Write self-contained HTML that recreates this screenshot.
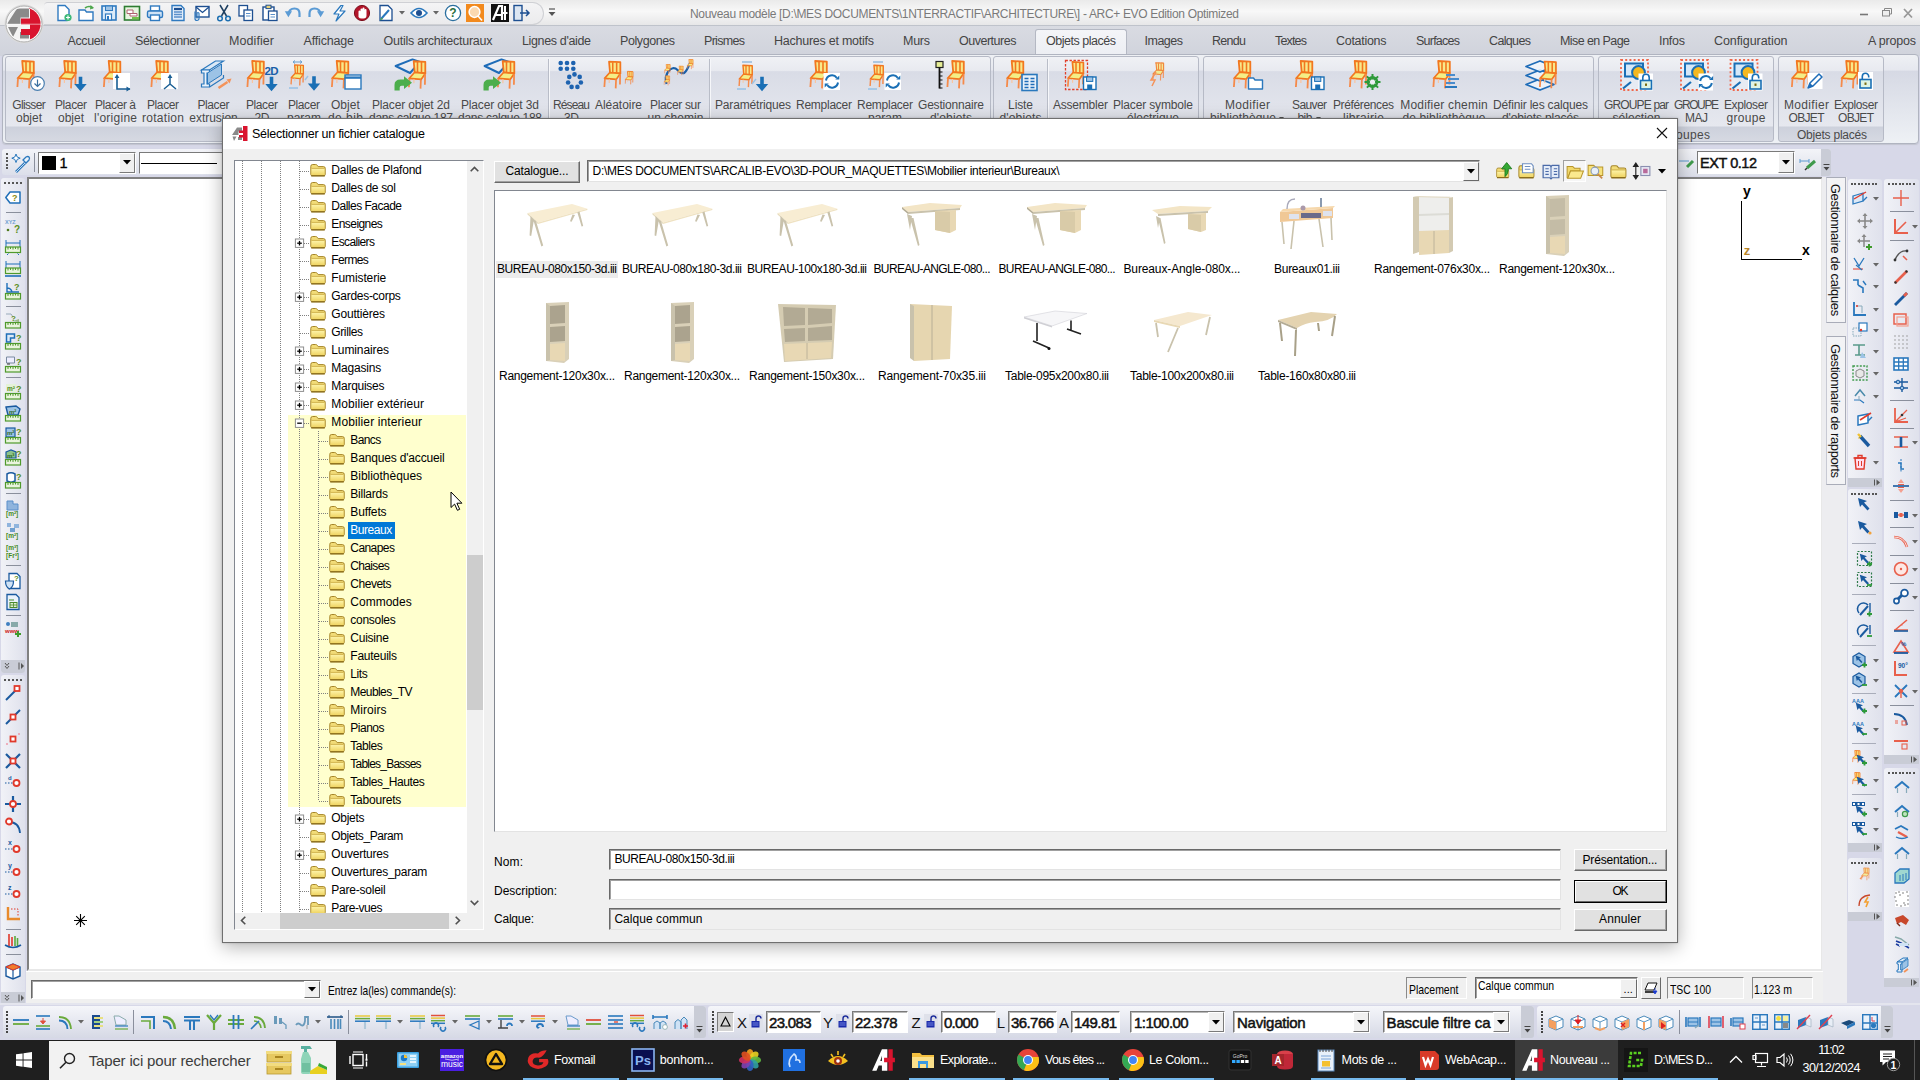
<!DOCTYPE html>
<html lang="fr"><head><meta charset="utf-8"><title>ARC+ EVO</title><style>
*{box-sizing:border-box;margin:0;padding:0}
html,body{width:1920px;height:1080px;overflow:hidden;background:#d7d8e8;font-family:"Liberation Sans",sans-serif;font-size:12px}
body{position:relative}
div,svg,span.t{position:absolute}
span.t{white-space:nowrap;display:block}
svg{overflow:visible}
.sunk{border:1px solid;border-color:#7a7a7a #fff #fff #7a7a7a;background:#fff}
.btn{background:#e1e1e1;border:1px solid #adadad}
</style></head><body><svg width="0" height="0" style="left:0;top:0"><defs>
<symbol id="chair" viewBox="0 0 20 29"><path d="M6.2 1 L17.8 1.6 L17.8 13 L7.2 12.2Z" fill="#f8e98a" stroke="#f2771f" stroke-width="1.8" stroke-linejoin="round"/><path d="M10 1.5V12M14 1.8V12.5" stroke="#f2771f" stroke-width="1.6"/><path d="M7 12.2 L17.8 13.2 L13.6 19.2 L1.6 18.2Z" fill="#f4ee86" stroke="#f2771f" stroke-width="1.7" stroke-linejoin="round"/><path d="M2 18.4 L1.4 27 M13.4 19.4 L13 28.4 M17.6 14 L17.4 24.5" stroke="#f58a4a" stroke-width="1.8" fill="none"/><path d="M6.4 19V23" stroke="#f9c4a0" stroke-width="1.2"/></symbol>
<linearGradient id="fg" x1="0" y1="0" x2="0" y2="1"><stop offset="0" stop-color="#fdf3a8"/><stop offset="1" stop-color="#f0d564"/></linearGradient>
<symbol id="fold" viewBox="0 0 16 14"><path d="M0.8 3.3 Q0.8 1.5 2.6 1.5 H5.6 Q6.8 1.5 7.4 2.5 L8.2 3.6 H13.4 Q15.2 3.6 15.2 5.2 V11.6 Q15.2 12.6 14 12.6 H2 Q0.8 12.6 0.8 11.6Z" fill="#f2dc78" stroke="#a58528" stroke-width="1"/><path d="M1.6 5.8 H14.4 V11.4 Q14.4 12 13.8 12 H2.2 Q1.6 12 1.6 11.4Z" fill="url(#fg)"/><path d="M1.6 5.4H14.4" stroke="#c9aa45" stroke-width="0.8"/><path d="M1.2 12.9 H14.8" stroke="#8a6c1a" stroke-width="1.3"/></symbol>
</defs></svg>
<div style="left:0.0px;top:0.0px;width:1920.0px;height:26.0px;background:linear-gradient(#eaeaea,#f8f8f8 45%,#e7e7e8);border-bottom:1px solid #bfc3cb"></div>
<div style="left:0.0px;top:26.0px;width:1920.0px;height:30.0px;background:linear-gradient(#d9dbe2,#d0d3dc)"></div>
<div style="left:44.0px;top:2.0px;width:500.0px;height:23.0px;background:linear-gradient(#f4f4f5,#ebebed);border:1px solid #cfd0d4;border-radius:4px 12px 12px 0;border-left:none"></div>
<svg style="left:55.0px;top:4.0px;" width="18" height="18" viewBox="0 0 18 18"><path d="M3 1.5h7l4 4v9q0 2-2 2h-9z" fill="#fff" stroke="#2f7ac0" stroke-width="1.4"/><circle cx="13" cy="13.5" r="3.6" fill="#3cb878"/><path d="M11 13.5h4M13 11.5v4" stroke="#fff" stroke-width="1.2"/></svg><svg style="left:77.0px;top:4.0px;" width="18" height="18" viewBox="0 0 18 18"><path d="M2 6h6l1.5 2H16v8.5H2z" fill="#fff" stroke="#2f7ac0" stroke-width="1.4"/><path d="M8 4q4-3 8 0" fill="none" stroke="#4ca64c" stroke-width="1.6"/><path d="M13.5 1l3.5 3l-4 1.5z" fill="#4ca64c"/></svg><svg style="left:100.0px;top:4.0px;" width="18" height="18" viewBox="0 0 18 18"><rect x="2" y="2" width="14" height="14" fill="#dcebf8" stroke="#2f7ac0" stroke-width="1.6"/><rect x="5.5" y="2" width="7" height="4.5" fill="#9fc4e6" stroke="#2f7ac0" stroke-width="1"/><rect x="5.5" y="10" width="6" height="6" fill="#fff" stroke="#2f7ac0" stroke-width="1.2"/><rect x="7" y="12" width="2" height="4" fill="#2f7ac0"/></svg><svg style="left:123.0px;top:4.0px;" width="18" height="18" viewBox="0 0 18 18"><rect x="1.5" y="2.5" width="15" height="13.5" fill="#e8f5e0" stroke="#2e7d32" stroke-width="1.6"/><path d="M4 6h6v3.5H4zM7 9.5h7V12H7z" fill="#fff" stroke="#b06070" stroke-width="1"/><rect x="9" y="13" width="7" height="2.4" fill="#6fc04a"/></svg><svg style="left:146.0px;top:4.0px;" width="18" height="18" viewBox="0 0 18 18"><rect x="4.5" y="2" width="9" height="5" fill="#fff" stroke="#2f7ac0" stroke-width="1.4"/><rect x="1.5" y="7" width="15" height="6.5" rx="1.5" fill="#cfe2f5" stroke="#2f7ac0" stroke-width="1.4"/><rect x="4.5" y="11" width="9" height="5.5" fill="#fff" stroke="#2f7ac0" stroke-width="1.4"/></svg><svg style="left:169.0px;top:4.0px;" width="18" height="18" viewBox="0 0 18 18"><path d="M3 1.5h9l3 3v12H3z" fill="#e3eefa" stroke="#2f7ac0" stroke-width="1.4"/><path d="M5 5h8" stroke="#1d4f91" stroke-width="2.2"/><path d="M5 8h8M5 10.5h8M5 13h8" stroke="#5a8fca" stroke-width="1.3"/></svg><svg style="left:192.0px;top:4.0px;" width="18" height="18" viewBox="0 0 18 18"><rect x="4" y="2.5" width="13" height="10.5" fill="#fff" stroke="#1d4f91" stroke-width="1.4"/><path d="M4 3l6.5 5.5L17 3" fill="none" stroke="#1d4f91" stroke-width="1.3"/><path d="M3 7.5v7a2 2 0 0 0 4 0V9.5a1 1 0 0 0-2 0v5" fill="none" stroke="#2f7ac0" stroke-width="1.2"/></svg><svg style="left:215.0px;top:4.0px;" width="18" height="18" viewBox="0 0 18 18"><path d="M5 1l6.5 11M13 1L6.5 12" stroke="#1d3f61" stroke-width="1.5"/><circle cx="5" cy="14.5" r="2.3" fill="none" stroke="#1d6fb1" stroke-width="1.5"/><circle cx="13" cy="14.5" r="2.3" fill="none" stroke="#1d6fb1" stroke-width="1.5"/></svg><svg style="left:237.0px;top:4.0px;" width="18" height="18" viewBox="0 0 18 18"><rect x="2" y="1.5" width="8.5" height="10.5" fill="#fff" stroke="#1d4f91" stroke-width="1.3"/><rect x="7" y="6" width="8.5" height="10.5" fill="#fff" stroke="#1d4f91" stroke-width="1.3"/><path d="M9 9.5h4.5M9 12h4.5" stroke="#5a8fca" stroke-width="1.1"/></svg><svg style="left:260.5px;top:4.0px;" width="18" height="18" viewBox="0 0 18 18"><rect x="2" y="3" width="11" height="13" fill="#fff" stroke="#1d4f91" stroke-width="1.4"/><rect x="5" y="1.2" width="5" height="3.4" fill="#e9d27a" stroke="#1d4f91" stroke-width="1"/><rect x="7.5" y="7" width="8.5" height="9.5" fill="#fff" stroke="#1d4f91" stroke-width="1.3"/><path d="M9.5 10.5h4.5M9.5 13h4.5" stroke="#5a8fca" stroke-width="1.1"/></svg><svg style="left:283.5px;top:4.0px;" width="18" height="18" viewBox="0 0 18 18"><path d="M4.5 10q0.5-5.5 6-5.5q5 0 5 5v3.5" fill="none" stroke="#5b9bd5" stroke-width="2.2"/><path d="M0.8 7.2l3.6 6l3.6-6z" fill="#5b9bd5"/></svg><svg style="left:306.5px;top:4.0px;" width="18" height="18" viewBox="0 0 18 18"><path d="M13.5 10q-0.5-5.5-6-5.5q-5 0-5 5v3.5" fill="none" stroke="#5b9bd5" stroke-width="2.2"/><path d="M17.2 7.2l-3.6 6l-3.6-6z" fill="#5b9bd5"/></svg><svg style="left:330.0px;top:4.0px;" width="18" height="18" viewBox="0 0 18 18"><path d="M11 1.5L4 10h5l-3 7l9-10h-5l3-5.5z" fill="#fff" stroke="#2a78bd" stroke-width="1.2" stroke-linejoin="round"/></svg><svg style="left:353.0px;top:4.0px;" width="18" height="18" viewBox="0 0 18 18"><circle cx="9" cy="9" r="7.6" fill="#b3152a" stroke="#7d0e1c" stroke-width="1"/><path d="M5.5 13V7.5a1 1 0 0 1 2 0V5.5a1 1 0 0 1 2 0v-1a1 1 0 0 1 2 0V6a1 1 0 0 1 2 0v5.5q0 3-3 3h-2q-2 0-3-1.5z" fill="#fff"/></svg><svg style="left:377.0px;top:4.0px;" width="18" height="18" viewBox="0 0 18 18"><path d="M3 1.5h8l4 4V16.5H3z" fill="#fff" stroke="#1d4f91" stroke-width="1.3"/><path d="M4 15l8-9" stroke="#2a78bd" stroke-width="2"/><path d="M3 16.5l3-1.5l-1.5-1.5z" fill="#4ca64c"/></svg><svg style="left:410.0px;top:4.0px;" width="18" height="18" viewBox="0 0 18 18"><path d="M1 9q8-9 16 0q-8 9-16 0z" fill="#fff" stroke="#2a78bd" stroke-width="1.6"/><circle cx="9" cy="9" r="3" fill="#1d4f91"/></svg><svg style="left:443.5px;top:4.0px;" width="18" height="18" viewBox="0 0 18 18"><circle cx="9" cy="9" r="7.6" fill="#fff" stroke="#2a6f9f" stroke-width="1.3"/><text x="9" y="13.4" text-anchor="middle" font-family="Liberation Sans,sans-serif" font-size="12" font-weight="bold" fill="#2a6f3f">?</text></svg><svg style="left:466.0px;top:4.0px;" width="18" height="18" viewBox="0 0 18 18"><rect x="0" y="0" width="18" height="18" fill="#f28a1e"/><circle cx="8.5" cy="8" r="5.4" fill="#fbd9b0" stroke="#fff" stroke-width="1.5"/><path d="M12 12l4 4.5" stroke="#fff" stroke-width="1.6"/></svg><svg style="left:491.0px;top:4.0px;" width="18" height="18" viewBox="0 0 18 18"><rect x="0" y="0" width="18" height="18" fill="#111"/><path d="M2 16L8 2h3v14M5 11h6" fill="none" stroke="#fff" stroke-width="2.2"/><path d="M14 2v14M11.5 9h5" stroke="#fff" stroke-width="2"/></svg><svg style="left:512.0px;top:4.0px;" width="18" height="18" viewBox="0 0 18 18"><rect x="2" y="1.5" width="8" height="15" fill="#dce6f2" stroke="#1d4f91" stroke-width="1.4"/><path d="M8 9h9m-3-3l3 3l-3 3" fill="none" stroke="#1d4f91" stroke-width="1.5"/></svg><svg style="left:399.0px;top:11.0px;" width="6" height="4" viewBox="0 0 6 4"><path d="M0 0h6l-3 3.5z" fill="#666"/></svg><svg style="left:433.0px;top:11.0px;" width="6" height="4" viewBox="0 0 6 4"><path d="M0 0h6l-3 3.5z" fill="#666"/></svg><svg style="left:548.0px;top:8.0px;" width="8" height="9" viewBox="0 0 8 9"><path d="M1 1h6" stroke="#555" stroke-width="1.2"/><path d="M0.5 4h7l-3.5 4z" fill="#555"/></svg>
<svg style="left:2.5px;top:2.5px;" width="42" height="42" viewBox="0 0 42 42"><defs><clipPath id="lc"><circle cx="21" cy="21" r="16.6"/></clipPath></defs><circle cx="21" cy="21" r="19.5" fill="#dcdcdc"/><circle cx="21" cy="21" r="18" fill="#fafafa" stroke="#b0b0b0" stroke-width="1"/><g clip-path="url(#lc)"><rect x="0" y="0" width="42" height="42" fill="#f4f4f4"/><path d="M4 21L14 5.5h12v9h-8.5V21z" fill="#8a8a8a"/><path d="M5 24h10l-5 10z" fill="#8a8a8a"/><rect x="17" y="29" width="9" height="6.5" fill="#8a8a8a"/><path d="M27 2h14v38H27v-8h-9v-6h9v-4.5h-9v-6h9z" fill="#d9142e"/><path d="M27 5.5h-1" stroke="#d9142e"/></g><path d="M3 21.2h36" stroke="#fff" stroke-width="0.8" opacity=".7"/></svg>
<span class="t" style="top:5.5px;font-size:12px;line-height:16px;color:#7a7a7a;letter-spacing:-0.331px;left:690.0px;">Nouveau modèle [D:\MES DOCUMENTS\1NTERRACTIF\ARCHITECTURE\] - ARC+ EVO Edition Optimized</span>
<svg style="left:1856.0px;top:4.0px;" width="60" height="18" viewBox="0 0 60 18"><path d="M4 10.5h8" stroke="#777" stroke-width="1.6"/><rect x="26.5" y="6.5" width="7" height="5.5" fill="#eee" stroke="#888" stroke-width="1"/><path d="M28.5 6.5v-2h7v5.5h-2" fill="none" stroke="#888" stroke-width="1"/><path d="M48 5l8 8.5M56 5l-8 8.5" stroke="#999" stroke-width="1.8"/></svg>
<div style="left:1035.0px;top:29.0px;width:92.0px;height:27.0px;background:linear-gradient(#f4f5f8,#eceef3);border:1px solid #b4b8c3;border-bottom:none;border-radius:3px 3px 0 0"></div>
<span class="t" style="top:33.0px;font-size:12.5px;line-height:16.5px;color:#444;letter-spacing:-0.383px;left:67.5px;">Accueil</span>
<span class="t" style="top:33.0px;font-size:12.5px;line-height:16.5px;color:#444;letter-spacing:-0.409px;left:135.0px;">Sélectionner</span>
<span class="t" style="top:33.0px;font-size:12.5px;line-height:16.5px;color:#444;letter-spacing:0.076px;left:229.0px;">Modifier</span>
<span class="t" style="top:33.0px;font-size:12.5px;line-height:16.5px;color:#444;letter-spacing:-0.176px;left:303.5px;">Affichage</span>
<span class="t" style="top:33.0px;font-size:12.5px;line-height:16.5px;color:#444;letter-spacing:-0.247px;left:383.5px;">Outils architecturaux</span>
<span class="t" style="top:33.0px;font-size:12.5px;line-height:16.5px;color:#444;letter-spacing:-0.357px;left:522.0px;">Lignes d'aide</span>
<span class="t" style="top:33.0px;font-size:12.5px;line-height:16.5px;color:#444;letter-spacing:-0.422px;left:620.0px;">Polygones</span>
<span class="t" style="top:33.0px;font-size:12.5px;line-height:16.5px;color:#444;letter-spacing:-0.693px;left:704.0px;">Prismes</span>
<span class="t" style="top:33.0px;font-size:12.5px;line-height:16.5px;color:#444;letter-spacing:-0.248px;left:774.0px;">Hachures et motifs</span>
<span class="t" style="top:33.0px;font-size:12.5px;line-height:16.5px;color:#444;letter-spacing:-0.260px;left:903.0px;">Murs</span>
<span class="t" style="top:33.0px;font-size:12.5px;line-height:16.5px;color:#444;letter-spacing:-0.483px;left:959.0px;">Ouvertures</span>
<span class="t" style="top:33.0px;font-size:12.5px;line-height:16.5px;color:#444;letter-spacing:-0.478px;left:1046.0px;">Objets placés</span>
<span class="t" style="top:33.0px;font-size:12.5px;line-height:16.5px;color:#444;letter-spacing:-0.500px;left:1144.5px;">Images</span>
<span class="t" style="top:33.0px;font-size:12.5px;line-height:16.5px;color:#444;letter-spacing:-0.711px;left:1212.0px;">Rendu</span>
<span class="t" style="top:33.0px;font-size:12.5px;line-height:16.5px;color:#444;letter-spacing:-0.828px;left:1275.0px;">Textes</span>
<span class="t" style="top:33.0px;font-size:12.5px;line-height:16.5px;color:#444;letter-spacing:-0.289px;left:1336.0px;">Cotations</span>
<span class="t" style="top:33.0px;font-size:12.5px;line-height:16.5px;color:#444;letter-spacing:-0.763px;left:1416.0px;">Surfaces</span>
<span class="t" style="top:33.0px;font-size:12.5px;line-height:16.5px;color:#444;letter-spacing:-0.646px;left:1489.0px;">Calques</span>
<span class="t" style="top:33.0px;font-size:12.5px;line-height:16.5px;color:#444;letter-spacing:-0.585px;left:1560.0px;">Mise en Page</span>
<span class="t" style="top:33.0px;font-size:12.5px;line-height:16.5px;color:#444;letter-spacing:-0.277px;left:1659.0px;">Infos</span>
<span class="t" style="top:33.0px;font-size:12.5px;line-height:16.5px;color:#444;letter-spacing:-0.072px;left:1714.0px;">Configuration</span>
<span class="t" style="top:33.0px;font-size:12.5px;line-height:16.5px;color:#444;letter-spacing:-0.192px;left:1868.0px;">A propos</span>
<div style="left:2.0px;top:54.0px;width:1916.5px;height:89.5px;background:linear-gradient(#eef0f4 0,#e6e8ef 17%,#d6d9e4 18.5%,#eef1f5 100%);border:1px solid #b0b4c0;border-radius:4px;box-shadow:0 1px 1px #c2c5d0"></div>
<div style="left:5.0px;top:56.0px;width:986.0px;height:86.0px;background:linear-gradient(#f0f1f5 0,#e8eaf0 16%,#d9dce6 17.5%,#e6e8ef 82%,#cdd1dc 83.5%,#d6d9e2 100%);border:1px solid #b6bac6;border-radius:3px"></div>
<div style="left:993.0px;top:56.0px;width:206.0px;height:86.0px;background:linear-gradient(#f0f1f5 0,#e8eaf0 16%,#d9dce6 17.5%,#e6e8ef 82%,#cdd1dc 83.5%,#d6d9e2 100%);border:1px solid #b6bac6;border-radius:3px"></div>
<div style="left:1203.0px;top:56.0px;width:391.0px;height:86.0px;background:linear-gradient(#f0f1f5 0,#e8eaf0 16%,#d9dce6 17.5%,#e6e8ef 82%,#cdd1dc 83.5%,#d6d9e2 100%);border:1px solid #b6bac6;border-radius:3px"></div>
<div style="left:1598.0px;top:56.0px;width:176.0px;height:86.0px;background:linear-gradient(#f0f1f5 0,#e8eaf0 16%,#d9dce6 17.5%,#e6e8ef 82%,#cdd1dc 83.5%,#d6d9e2 100%);border:1px solid #b6bac6;border-radius:3px"></div>
<div style="left:1778.0px;top:56.0px;width:106.0px;height:86.0px;background:linear-gradient(#f0f1f5 0,#e8eaf0 16%,#d9dce6 17.5%,#e6e8ef 82%,#cdd1dc 83.5%,#d6d9e2 100%);border:1px solid #b6bac6;border-radius:3px"></div>
<span class="t" style="top:126.5px;font-size:12px;line-height:16px;color:#4a4a4a;letter-spacing:0.328px;left:1486.2px;width:400px;text-align:center;"><span>Groupes</span></span>
<span class="t" style="top:126.5px;font-size:12px;line-height:16px;color:#4a4a4a;letter-spacing:-0.225px;left:1631.9px;width:400px;text-align:center;"><span>Objets placés</span></span>
<div style="left:547.5px;top:59.0px;width:1.0px;height:64.0px;background:#b9bdc8"></div>
<div style="left:548.5px;top:59.0px;width:1.0px;height:64.0px;background:#f6f7fa"></div>
<div style="left:708.5px;top:59.0px;width:1.0px;height:64.0px;background:#b9bdc8"></div>
<div style="left:709.5px;top:59.0px;width:1.0px;height:64.0px;background:#f6f7fa"></div>
<div style="left:1047.0px;top:59.0px;width:1.0px;height:64.0px;background:#b9bdc8"></div>
<div style="left:1048.0px;top:59.0px;width:1.0px;height:64.0px;background:#f6f7fa"></div>
<svg style="left:0;top:0" width="1920" height="100" viewBox="0 0 1920 100"><use href="#chair" x="16.0" y="60.0" width="20.0" height="29.0"/><circle cx="37.5" cy="83.5" r="6.8" fill="#fff" stroke="#4a7fb0" stroke-width="1.2"/><path d="M37.5 79.5v7m-3-3l3 3l3-3" stroke="#3a6f9f" stroke-width="1.2" fill="none"/><use href="#chair" x="58.0" y="60.0" width="20.0" height="29.0"/><path d="M78.7 76.8 v7.2 h-4.4 l6.2 7.2 l6.2 -7.2 h-4.4 v-7.2z" fill="#1a6fb5"/><use href="#chair" x="102.5" y="60.0" width="20.0" height="29.0"/><rect x="113.0" y="73" width="17" height="16" fill="#fff"/><path d="M117.0 76v13h13" fill="none" stroke="#1a5f95" stroke-width="1.6"/><path d="M114.6 78l2.4-4l2.4 4zM126.5 86.6l4 2.4l-4 2.4z" fill="#1a5f95"/><use href="#chair" x="150.0" y="60.0" width="20.0" height="29.0"/><rect x="161.0" y="73" width="17" height="16" fill="#fff"/><path d="M170.0 76v8l-6 5m6-5l6 5" fill="none" stroke="#1a5f95" stroke-width="1.5"/><path d="M167.6 78l2.4-4l2.4 4z" fill="#1a5f95"/><path d="M201.5 70 l14 -9 h8 l-14 9z" fill="#dbe9f6" stroke="#2a78bd" stroke-width="1.2"/><path d="M201.5 70 h8 v3 h-2.5 v11 h2.5 v3 h-8 v-3 h2.5 v-11 h-2.5z" fill="#eaf2fb" stroke="#2a78bd" stroke-width="1.2"/><path d="M207.5 73 l14 -9 v11 l-14 9z" fill="#9cc3e6" stroke="#2a78bd" stroke-width="1"/><path d="M209.5 87 l14 -9 v-3" fill="none" stroke="#2a78bd" stroke-width="1.2"/><path d="M218.5 88 l9 -6" stroke="#f4935a" stroke-width="2.4"/><path d="M226.5 79.5 l5 -1 l-2 5z" fill="#f4935a"/><use href="#chair" x="246.0" y="60.0" width="20.0" height="29.0"/><text x="264.5" y="74.5" font-family="Liberation Sans,sans-serif" font-weight="bold" font-size="11.5" letter-spacing="-0.6" fill="#1a5fa8">2D</text><path d="M269.7 76.8 v7.2 h-4.4 l6.2 7.2 l6.2 -7.2 h-4.4 v-7.2z" fill="#1a6fb5"/><use href="#chair" x="290.0" y="64" width="15" height="22"/><path d="M293.0 62h9m-9 0l2-1.5m-2 1.5l2 1.5m7-1.5l-2-1.5m2 1.5l-2 1.5" stroke="#6aa0d0" stroke-width="1" fill="none"/><path d="M289.0 88h9" stroke="#9cc3e6" stroke-width="1.6"/><path d="M305.0 80l3-4" stroke="#9cc3e6" stroke-width="1.4"/><path d="M312.2 76.3 v7.2 h-4.4 l6.2 7.2 l6.2 -7.2 h-4.4 v-7.2z" fill="#1a6fb5"/><use href="#chair" x="330.5" y="60.0" width="20.0" height="29.0"/><rect x="345.0" y="75" width="16" height="14" fill="#fff" stroke="#2a78bd" stroke-width="1.4"/><path d="M345.0 77.6h16" stroke="#2a78bd" stroke-width="2.4"/><path d="M395.6 66 L412.5 59.4 L420.0 62 L410.0 73z" fill="none" stroke="#1e6cb8" stroke-width="2" stroke-linejoin="round"/><use href="#chair" x="407.5" y="60" width="20" height="29.5"/><path d="M394.5 90.5 v-5.5 q0 -5.5 6 -5.5 h3.5 v-3.2 l8 6.4 l-8 6.4 v-3.4 h-2.5 q-1.8 0 -1.8 1.8 v3z" fill="#4cae4c"/><path d="M484.6 66 L501.5 59.4 L509.0 62 L499.0 73z" fill="none" stroke="#1e6cb8" stroke-width="2" stroke-linejoin="round"/><use href="#chair" x="496.5" y="60" width="20" height="29.5"/><path d="M483.5 90.5 v-5.5 q0 -5.5 6 -5.5 h3.5 v-3.2 l8 6.4 l-8 6.4 v-3.4 h-2.5 q-1.8 0 -1.8 1.8 v3z" fill="#4cae4c"/><circle cx="560.7" cy="63.0" r="2.3" fill="#1e63b0"/><circle cx="567.0" cy="63.0" r="2.3" fill="#1e63b0"/><circle cx="573.3" cy="63.0" r="2.3" fill="#1e63b0"/><circle cx="560.7" cy="68.8" r="2.3" fill="#1e63b0"/><circle cx="567.0" cy="68.8" r="2.3" fill="#1e63b0"/><circle cx="573.3" cy="68.8" r="2.3" fill="#1e63b0"/><circle cx="574.5" cy="74.4" r="2.3" fill="#1e63b0"/><circle cx="579.7" cy="76.9" r="2.3" fill="#1e63b0"/><circle cx="580.9" cy="82.5" r="2.3" fill="#1e63b0"/><circle cx="577.4" cy="86.9" r="2.3" fill="#1e63b0"/><circle cx="571.6" cy="86.9" r="2.3" fill="#1e63b0"/><circle cx="568.1" cy="82.5" r="2.3" fill="#1e63b0"/><circle cx="569.3" cy="76.9" r="2.3" fill="#1e63b0"/><use href="#chair" x="603.0" y="60.3" width="19.5" height="29"/><use href="#chair" x="624.5" y="69" width="9.5" height="17.5"/><path d="M666.5 84 C663.5 74 671.5 64 677.5 70 S685.5 74 690.5 62" fill="none" stroke="#1a5fa8" stroke-width="2.2"/><use href="#chair" x="663.5" y="74" width="7" height="13"/><use href="#chair" x="664.0" y="64" width="7" height="10"/><use href="#chair" x="677.0" y="65.5" width="7" height="10"/><use href="#chair" x="686.5" y="59" width="7.5" height="10.5"/><use href="#chair" x="738.0" y="64" width="16" height="24"/><path d="M742.0 62h10" stroke="#6aa0d0" stroke-width="1"/><path d="M737.0 89h9" stroke="#9cc3e6" stroke-width="1.6"/><path d="M752.0 84l4-5" stroke="#9cc3e6" stroke-width="1.4"/><path d="M760.2 76.8 v7.2 h-4.4 l6.2 7.2 l6.2 -7.2 h-4.4 v-7.2z" fill="#1a6fb5"/><use href="#chair" x="809.0" y="60.0" width="20.0" height="29.0"/><rect x="823.5" y="73" width="16.5" height="17" fill="#fff"/><path d="M826.0 80.5 A6 6 0 0 1 836.8 77.9" fill="none" stroke="#1a6fb5" stroke-width="2"/><path d="M838.0 82.5 A6 6 0 0 1 827.2 85.1" fill="none" stroke="#1a6fb5" stroke-width="2"/><path d="M835.3 79.4 l4 0 l0 -4z" fill="#1a6fb5"/><path d="M828.7 83.6 l-4 0 l0 4z" fill="#1a6fb5"/><use href="#chair" x="869.0" y="64" width="16" height="24"/><path d="M873.0 62h10" stroke="#6aa0d0" stroke-width="1"/><path d="M868.0 89h9" stroke="#9cc3e6" stroke-width="1.6"/><rect x="884.5" y="73" width="16.5" height="17" fill="#fff"/><path d="M887.0 80.5 A6 6 0 0 1 897.8 77.9" fill="none" stroke="#1a6fb5" stroke-width="2"/><path d="M899.0 82.5 A6 6 0 0 1 888.2 85.1" fill="none" stroke="#1a6fb5" stroke-width="2"/><path d="M896.3 79.4 l4 0 l0 -4z" fill="#1a6fb5"/><path d="M889.7 83.6 l-4 0 l0 4z" fill="#1a6fb5"/><rect x="936.0" y="61.5" width="7" height="6" fill="#e6ee96" stroke="#222" stroke-width="1.2"/><path d="M939.5 67.5v21" stroke="#111" stroke-width="1.8"/><path d="M939.5 72h3m-3 4h3m-3 4h3m-3 4h3m-3 4h3" stroke="#111" stroke-width="1.2"/><use href="#chair" x="946.0" y="60.0" width="20.0" height="29.0"/><use href="#chair" x="1005.5" y="60.0" width="20.0" height="29.0"/><rect x="1022.0" y="74.5" width="15" height="16" fill="#e8f1fa" stroke="#2a78bd" stroke-width="1.6"/><path d="M1024.5 78.5h4m2 0h4m-10 3h4m2 0h4m-10 3h4m2 0h4m-10 3h4m2 0h4" stroke="#1e6cb8" stroke-width="1.6"/><rect x="1065.5" y="60.5" width="22" height="29" fill="none" stroke="#e0402c" stroke-width="1.3" stroke-dasharray="2.4 1.6"/><use href="#chair" x="1066.5" y="61.0" width="19.0" height="27.5"/><rect x="1083.5" y="77.0" width="12.5" height="12.5" fill="#fff" stroke="#1a6fb5" stroke-width="1.4"/><rect x="1086.6" y="77.0" width="6.2" height="4.4" fill="#9fc4e6" stroke="#1a6fb5" stroke-width="1"/><rect x="1087.2" y="84.5" width="5.0" height="5.0" fill="#1a6fb5"/><use href="#chair" x="1152.0" y="61" width="13" height="21" opacity=".85"/><path d="M1156.0 72l-5 8h4l-3 6" fill="none" stroke="#f4935a" stroke-width="1.5"/><path d="M1155.0 63h8" stroke="#f4935a" stroke-width="1" stroke-dasharray="1.5 1.5"/><use href="#chair" x="1232.5" y="60.0" width="20.0" height="29.0"/><path d="M1248.5 78h5l1.5 2h7.5v9h-14z" fill="#fff" stroke="#2a78bd" stroke-width="1.4" stroke-linejoin="round"/><use href="#chair" x="1294.5" y="60.0" width="20.0" height="29.0"/><rect x="1311.5" y="77.0" width="12.5" height="12.5" fill="#fff" stroke="#1a6fb5" stroke-width="1.4"/><rect x="1314.6" y="77.0" width="6.2" height="4.4" fill="#9fc4e6" stroke="#1a6fb5" stroke-width="1"/><rect x="1315.2" y="84.5" width="5.0" height="5.0" fill="#1a6fb5"/><use href="#chair" x="1348.5" y="60.0" width="20.0" height="29.0"/><circle cx="1372.5" cy="82" r="4.6" fill="none" stroke="#2e9a3a" stroke-width="2.6"/><path d="M1372.5 74v16M1364.5 82h16M1366.9 76.4l11.2 11.2M1366.9 87.6l11.2-11.2" stroke="#2e9a3a" stroke-width="2"/><circle cx="1372.5" cy="82" r="2.6" fill="#eceef3"/><use href="#chair" x="1432.0" y="60.0" width="20.0" height="29.0"/><path d="M1446.0 75h9M1448.0 79h11M1446.0 83h9" stroke="#4a8ccc" stroke-width="1.8"/><path d="M1445.0 87h12" stroke="#2a78bd" stroke-width="2"/><path d="M1526.0 84.5 l14 -5.5 l14 5.5 l-14 5.5z" fill="#eef4fb" fill-opacity=".85" stroke="#1e6cb8" stroke-width="1.8" stroke-linejoin="round"/><path d="M1526.0 75.5 l14 -5.5 l14 5.5 l-14 5.5z" fill="#eef4fb" fill-opacity=".85" stroke="#1e6cb8" stroke-width="1.8" stroke-linejoin="round"/><path d="M1526.0 66.5 l14 -5.5 l14 5.5 l-14 5.5z" fill="#eef4fb" fill-opacity=".85" stroke="#1e6cb8" stroke-width="1.8" stroke-linejoin="round"/><use href="#chair" x="1538.5" y="60.5" width="19.6" height="28.4"/><rect x="1621.0" y="60" width="27" height="30" fill="#eef3fa" fill-opacity=".6" stroke="#f0684c" stroke-width="1.8" stroke-dasharray="2 2.2"/><rect x="1625.0" y="63.5" width="18" height="13" fill="#d6e8f8" stroke="#1a6fb5" stroke-width="2"/><circle cx="1638.5" cy="72.5" r="6.4" fill="#f5b820" stroke="#1a6fb5" stroke-width="2"/><path d="M1623.0 88.5l8-6.5" stroke="#1a6fb5" stroke-width="2.2"/><rect x="1638.5" y="73.5" width="14.5" height="17" fill="#fff"/><path d="M1642.8 80.5 v-3 a3.2 3.2 0 0 1 6.4 0 v3" fill="none" stroke="#1a6fb5" stroke-width="1.6"/><rect x="1640.5" y="80.5" width="11" height="8.5" fill="#dff4e4" stroke="#1a6fb5" stroke-width="1.6"/><rect x="1645.0" y="83.5" width="2" height="2.4" fill="#7a6a10"/><rect x="1681.0" y="60" width="27" height="30" fill="#eef3fa" fill-opacity=".6" stroke="#f0684c" stroke-width="1.8" stroke-dasharray="2 2.2"/><rect x="1685.0" y="63.5" width="18" height="13" fill="#d6e8f8" stroke="#1a6fb5" stroke-width="2"/><circle cx="1698.5" cy="72.5" r="6.4" fill="#f5b820" stroke="#1a6fb5" stroke-width="2"/><path d="M1683.0 88.5l8-6.5" stroke="#1a6fb5" stroke-width="2.2"/><rect x="1698.5" y="73.5" width="14.5" height="17" fill="#fff"/><path d="M1700.2 81.0 A5.8 5.8 0 0 1 1710.6 78.5" fill="none" stroke="#1a6fb5" stroke-width="2"/><path d="M1711.8 83.0 A5.8 5.8 0 0 1 1701.4 85.5" fill="none" stroke="#1a6fb5" stroke-width="2"/><path d="M1709.1 80.0 l4 0 l0 -4z" fill="#1a6fb5"/><path d="M1702.9 84.0 l-4 0 l0 4z" fill="#1a6fb5"/><rect x="1730.5" y="60" width="27" height="30" fill="#eef3fa" fill-opacity=".6" stroke="#f0684c" stroke-width="1.8" stroke-dasharray="2 2.2"/><rect x="1734.5" y="63.5" width="18" height="13" fill="#d6e8f8" stroke="#1a6fb5" stroke-width="2"/><circle cx="1748.0" cy="72.5" r="6.4" fill="#f5b820" stroke="#1a6fb5" stroke-width="2"/><path d="M1732.5 88.5l8-6.5" stroke="#1a6fb5" stroke-width="2.2"/><rect x="1748.0" y="73.5" width="14.5" height="17" fill="#fff"/><path d="M1752.3 80.5 v-3 a3.2 3.2 0 0 1 6.4 0 v1" fill="none" stroke="#1a6fb5" stroke-width="1.6"/><rect x="1750.0" y="80.5" width="11" height="8.5" fill="#dff4e4" stroke="#1a6fb5" stroke-width="1.6"/><rect x="1754.5" y="83.5" width="2" height="2.4" fill="#7a6a10"/><use href="#chair" x="1790.5" y="60.0" width="20.0" height="29.0"/><rect x="1807.5" y="73" width="15" height="16" fill="#fff"/><path d="M1808.0 88l2-5l9-9l3 3l-9 9z" fill="#fff" stroke="#1e6cb8" stroke-width="1.5" stroke-linejoin="round"/><path d="M1808.0 88l2-5l3 3z" fill="#1e6cb8"/><use href="#chair" x="1840.0" y="60.0" width="20.0" height="29.0"/><rect x="1858.0" y="72" width="15" height="18" fill="#fff"/><path d="M1862.3 79.5 v-3 a3.2 3.2 0 0 1 6.4 0 v1" fill="none" stroke="#1a6fb5" stroke-width="1.6"/><rect x="1860.0" y="79.5" width="11" height="8.5" fill="#dff4e4" stroke="#1a6fb5" stroke-width="1.6"/><rect x="1864.5" y="82.5" width="2" height="2.4" fill="#7a6a10"/></svg>
<span class="t" style="top:97.0px;font-size:12px;line-height:16px;color:#4a4a4a;letter-spacing:-0.641px;left:-171.3px;width:400px;text-align:center;"><span>Glisser</span></span>
<span class="t" style="top:110.0px;font-size:12px;line-height:16px;color:#4a4a4a;letter-spacing:-0.008px;left:-171.0px;width:400px;text-align:center;"><span>objet</span></span>
<span class="t" style="top:97.0px;font-size:12px;line-height:16px;color:#4a4a4a;letter-spacing:-0.403px;left:-129.2px;width:400px;text-align:center;"><span>Placer</span></span>
<span class="t" style="top:110.0px;font-size:12px;line-height:16px;color:#4a4a4a;letter-spacing:-0.008px;left:-129.0px;width:400px;text-align:center;"><span>objet</span></span>
<span class="t" style="top:97.0px;font-size:12px;line-height:16px;color:#4a4a4a;letter-spacing:-0.433px;left:-84.7px;width:400px;text-align:center;"><span>Placer à</span></span>
<span class="t" style="top:110.0px;font-size:12px;line-height:16px;color:#4a4a4a;letter-spacing:0.252px;left:-84.4px;width:400px;text-align:center;"><span>l'origine</span></span>
<span class="t" style="top:97.0px;font-size:12px;line-height:16px;color:#4a4a4a;letter-spacing:-0.403px;left:-37.2px;width:400px;text-align:center;"><span>Placer</span></span>
<span class="t" style="top:110.0px;font-size:12px;line-height:16px;color:#4a4a4a;letter-spacing:0.281px;left:-36.9px;width:400px;text-align:center;"><span>rotation</span></span>
<span class="t" style="top:97.0px;font-size:12px;line-height:16px;color:#4a4a4a;letter-spacing:-0.403px;left:13.3px;width:400px;text-align:center;"><span>Placer</span></span>
<span class="t" style="top:110.0px;font-size:12px;line-height:16px;color:#4a4a4a;letter-spacing:-0.025px;left:13.5px;width:400px;text-align:center;"><span>extrusion</span></span>
<span class="t" style="top:97.0px;font-size:12px;line-height:16px;color:#4a4a4a;letter-spacing:-0.403px;left:61.8px;width:400px;text-align:center;"><span>Placer</span></span>
<span class="t" style="top:110.0px;font-size:12px;line-height:16px;color:#4a4a4a;letter-spacing:-0.344px;left:61.8px;width:400px;text-align:center;"><span>2D</span></span>
<span class="t" style="top:97.0px;font-size:12px;line-height:16px;color:#4a4a4a;letter-spacing:-0.403px;left:103.8px;width:400px;text-align:center;"><span>Placer</span></span>
<span class="t" style="top:110.0px;font-size:12px;line-height:16px;color:#4a4a4a;letter-spacing:-0.004px;left:104.0px;width:400px;text-align:center;"><span>param</span></span>
<span class="t" style="top:97.0px;font-size:12px;line-height:16px;color:#4a4a4a;letter-spacing:0.078px;left:145.5px;width:400px;text-align:center;"><span>Objet</span></span>
<span class="t" style="top:110.0px;font-size:12px;line-height:16px;color:#4a4a4a;letter-spacing:0.459px;left:145.7px;width:400px;text-align:center;"><span>de bib</span></span>
<span class="t" style="top:97.0px;font-size:12px;line-height:16px;color:#4a4a4a;letter-spacing:-0.147px;left:210.9px;width:400px;text-align:center;"><span>Placer objet 2d</span></span>
<span class="t" style="top:110.0px;font-size:12px;line-height:16px;color:#4a4a4a;letter-spacing:-0.291px;left:210.9px;width:400px;text-align:center;"><span>dans calque 187</span></span>
<span class="t" style="top:97.0px;font-size:12px;line-height:16px;color:#4a4a4a;letter-spacing:-0.147px;left:299.9px;width:400px;text-align:center;"><span>Placer objet 3d</span></span>
<span class="t" style="top:110.0px;font-size:12px;line-height:16px;color:#4a4a4a;letter-spacing:-0.291px;left:299.9px;width:400px;text-align:center;"><span>dans calque 188</span></span>
<span class="t" style="top:97.0px;font-size:12px;line-height:16px;color:#4a4a4a;letter-spacing:-0.875px;left:371.1px;width:400px;text-align:center;"><span>Réseau</span></span>
<span class="t" style="top:110.0px;font-size:12px;line-height:16px;color:#4a4a4a;letter-spacing:-0.344px;left:371.3px;width:400px;text-align:center;"><span>3D</span></span>
<span class="t" style="top:97.0px;font-size:12px;line-height:16px;color:#4a4a4a;letter-spacing:-0.047px;left:418.5px;width:400px;text-align:center;"><span>Aléatoire</span></span>
<span class="t" style="top:97.0px;font-size:12px;line-height:16px;color:#4a4a4a;letter-spacing:-0.337px;left:475.3px;width:400px;text-align:center;"><span>Placer sur</span></span>
<span class="t" style="top:110.0px;font-size:12px;line-height:16px;color:#4a4a4a;letter-spacing:0.078px;left:475.5px;width:400px;text-align:center;"><span>un chemin</span></span>
<span class="t" style="top:97.0px;font-size:12px;line-height:16px;color:#4a4a4a;letter-spacing:-0.171px;left:552.9px;width:400px;text-align:center;"><span>Paramétriques</span></span>
<span class="t" style="top:97.0px;font-size:12px;line-height:16px;color:#4a4a4a;letter-spacing:-0.254px;left:623.9px;width:400px;text-align:center;"><span>Remplacer</span></span>
<span class="t" style="top:97.0px;font-size:12px;line-height:16px;color:#4a4a4a;letter-spacing:-0.254px;left:684.9px;width:400px;text-align:center;"><span>Remplacer</span></span>
<span class="t" style="top:110.0px;font-size:12px;line-height:16px;color:#4a4a4a;letter-spacing:-0.004px;left:685.0px;width:400px;text-align:center;"><span>param</span></span>
<span class="t" style="top:97.0px;font-size:12px;line-height:16px;color:#4a4a4a;letter-spacing:-0.186px;left:750.9px;width:400px;text-align:center;"><span>Gestionnaire</span></span>
<span class="t" style="top:110.0px;font-size:12px;line-height:16px;color:#4a4a4a;letter-spacing:0.143px;left:751.1px;width:400px;text-align:center;"><span>d'objets</span></span>
<span class="t" style="top:97.0px;font-size:12px;line-height:16px;color:#4a4a4a;letter-spacing:-0.090px;left:820.5px;width:400px;text-align:center;"><span>Liste</span></span>
<span class="t" style="top:110.0px;font-size:12px;line-height:16px;color:#4a4a4a;letter-spacing:0.143px;left:820.6px;width:400px;text-align:center;"><span>d'objets</span></span>
<span class="t" style="top:97.0px;font-size:12px;line-height:16px;color:#4a4a4a;letter-spacing:-0.211px;left:880.4px;width:400px;text-align:center;"><span>Assembler</span></span>
<span class="t" style="top:97.0px;font-size:12px;line-height:16px;color:#4a4a4a;letter-spacing:-0.156px;left:952.9px;width:400px;text-align:center;"><span>Placer symbole</span></span>
<span class="t" style="top:110.0px;font-size:12px;line-height:16px;color:#4a4a4a;letter-spacing:-0.003px;left:953.0px;width:400px;text-align:center;"><span>électrique</span></span>
<span class="t" style="top:97.0px;font-size:12px;line-height:16px;color:#4a4a4a;letter-spacing:0.330px;left:1047.7px;width:400px;text-align:center;"><span>Modifier</span></span>
<span class="t" style="top:110.0px;font-size:12px;line-height:16px;color:#4a4a4a;letter-spacing:0.115px;left:1043.1px;width:400px;text-align:center;"><span>bibliothèque</span></span>
<span class="t" style="top:97.0px;font-size:12px;line-height:16px;color:#4a4a4a;letter-spacing:-0.606px;left:1109.2px;width:400px;text-align:center;"><span>Sauver</span></span>
<span class="t" style="top:110.0px;font-size:12px;line-height:16px;color:#4a4a4a;letter-spacing:-0.508px;left:1104.7px;width:400px;text-align:center;"><span>bib</span></span>
<span class="t" style="top:97.0px;font-size:12px;line-height:16px;color:#4a4a4a;letter-spacing:-0.370px;left:1163.3px;width:400px;text-align:center;"><span>Préférences</span></span>
<span class="t" style="top:110.0px;font-size:12px;line-height:16px;color:#4a4a4a;letter-spacing:0.289px;left:1163.6px;width:400px;text-align:center;"><span>librairie</span></span>
<span class="t" style="top:97.0px;font-size:12px;line-height:16px;color:#4a4a4a;letter-spacing:0.200px;left:1244.1px;width:400px;text-align:center;"><span>Modifier chemin</span></span>
<span class="t" style="top:110.0px;font-size:12px;line-height:16px;color:#4a4a4a;letter-spacing:0.114px;left:1244.1px;width:400px;text-align:center;"><span>de bibliothèque</span></span>
<span class="t" style="top:97.0px;font-size:12px;line-height:16px;color:#4a4a4a;letter-spacing:-0.169px;left:1340.4px;width:400px;text-align:center;"><span>Définir les calques</span></span>
<span class="t" style="top:110.0px;font-size:12px;line-height:16px;color:#4a4a4a;letter-spacing:-0.144px;left:1340.4px;width:400px;text-align:center;"><span>d'objets placés</span></span>
<span class="t" style="top:97.0px;font-size:12px;line-height:16px;color:#4a4a4a;letter-spacing:-0.854px;left:1436.1px;width:400px;text-align:center;"><span>GROUPE par</span></span>
<span class="t" style="top:110.0px;font-size:12px;line-height:16px;color:#4a4a4a;letter-spacing:0.078px;left:1436.5px;width:400px;text-align:center;"><span>sélection</span></span>
<span class="t" style="top:97.0px;font-size:12px;line-height:16px;color:#4a4a4a;letter-spacing:-1.403px;left:1495.8px;width:400px;text-align:center;"><span>GROUPE</span></span>
<span class="t" style="top:110.0px;font-size:12px;line-height:16px;color:#4a4a4a;letter-spacing:-0.500px;left:1496.2px;width:400px;text-align:center;"><span>MAJ</span></span>
<span class="t" style="top:97.0px;font-size:12px;line-height:16px;color:#4a4a4a;letter-spacing:-0.384px;left:1545.8px;width:400px;text-align:center;"><span>Exploser</span></span>
<span class="t" style="top:110.0px;font-size:12px;line-height:16px;color:#4a4a4a;letter-spacing:0.325px;left:1546.2px;width:400px;text-align:center;"><span>groupe</span></span>
<span class="t" style="top:97.0px;font-size:12px;line-height:16px;color:#4a4a4a;letter-spacing:0.330px;left:1606.7px;width:400px;text-align:center;"><span>Modifier</span></span>
<span class="t" style="top:110.0px;font-size:12px;line-height:16px;color:#4a4a4a;letter-spacing:-0.668px;left:1606.2px;width:400px;text-align:center;"><span>OBJET</span></span>
<span class="t" style="top:97.0px;font-size:12px;line-height:16px;color:#4a4a4a;letter-spacing:-0.384px;left:1655.8px;width:400px;text-align:center;"><span>Exploser</span></span>
<span class="t" style="top:110.0px;font-size:12px;line-height:16px;color:#4a4a4a;letter-spacing:-0.668px;left:1655.7px;width:400px;text-align:center;"><span>OBJET</span></span>
<svg style="left:1279.0px;top:117.0px;" width="5" height="4" viewBox="0 0 5 4"><path d="M0 0h5l-2.5 3z" fill="#555"/></svg>
<svg style="left:1315.5px;top:117.0px;" width="5" height="4" viewBox="0 0 5 4"><path d="M0 0h5l-2.5 3z" fill="#555"/></svg>
<div style="left:1.5px;top:149.0px;width:232.0px;height:26.0px;background:linear-gradient(#f3f4f8,#dcdfea);border-radius:3px;"></div>
<div style="left:6.0px;top:153.4px;width:2.0px;height:2.0px;background:#555"></div><div style="left:6.0px;top:156.8px;width:2.0px;height:2.0px;background:#555"></div><div style="left:6.0px;top:160.2px;width:2.0px;height:2.0px;background:#555"></div><div style="left:6.0px;top:163.6px;width:2.0px;height:2.0px;background:#555"></div><div style="left:6.0px;top:167.0px;width:2.0px;height:2.0px;background:#555"></div>
<svg style="left:11.0px;top:153.0px;" width="20" height="20" viewBox="0 0 20 20"><path d="M5 1l1.2 3l3 1.2l-3 1.2L5 9.5L3.8 6.4L0.8 5.2l3-1.2z" fill="#fff" stroke="#2a78bd" stroke-width="1"/><path d="M5 19l9-9" stroke="#2a78bd" stroke-width="2.6"/><path d="M5 19l9-9" stroke="#eaf2fb" stroke-width="0.8"/><path d="M12 7l3-3q2-1 3 0q1 1 0 3l-3 3z" fill="#eaf2fb" stroke="#2a78bd" stroke-width="1.3"/></svg>
<div style="left:34.0px;top:153.0px;width:1.0px;height:19.0px;background:#8a8f9c"></div>
<div class="sunk" style="left:38.0px;top:152.0px;width:98.0px;height:22.0px;"></div>
<div style="left:42.0px;top:156.0px;width:14.0px;height:14.0px;background:#000"></div>
<span class="t" style="top:154.2px;font-size:14.5px;line-height:18.5px;color:#000;left:59.5px;-webkit-text-stroke:0.3px #000;">1</span>
<div style="left:119.0px;top:153.0px;width:16.0px;height:20.0px;background:#f0f0f0;border:1px solid;border-color:#fff #7a7a7a #7a7a7a #fff"></div>
<svg style="left:123.0px;top:160.0px;" width="8" height="5" viewBox="0 0 8 5"><path d="M0 0h8l-4 4.5z" fill="#000"/></svg>
<div class="sunk" style="left:139.0px;top:152.0px;width:98.0px;height:22.0px;"></div>
<div style="left:141.0px;top:162.5px;width:76.0px;height:1.2px;background:#000"></div>
<div style="left:1677.0px;top:149.0px;width:154.0px;height:27.0px;background:linear-gradient(#f3f4f8,#dcdfea);border-radius:3px;"></div>
<svg style="left:1679.0px;top:155.0px;" width="16" height="16" viewBox="0 0 16 16"><path d="M0 6h10" stroke="#5a9ad0" stroke-width="1"/><path d="M8 12l6-6" stroke="#3f9a4c" stroke-width="3"/></svg>
<div class="sunk" style="left:1697.0px;top:151.0px;width:98.0px;height:23.0px;"></div>
<span class="t" style="top:153.8px;font-size:14.5px;line-height:18.5px;color:#111;letter-spacing:-0.458px;left:1700.0px;-webkit-text-stroke:0.45px #111;">EXT 0.12</span>
<div style="left:1778.0px;top:152.0px;width:16.0px;height:21.0px;background:#f0f0f0;border:1px solid;border-color:#fff #7a7a7a #7a7a7a #fff"></div>
<svg style="left:1782.0px;top:160.0px;" width="8" height="5" viewBox="0 0 8 5"><path d="M0 0h8l-4 4.5z" fill="#000"/></svg>
<svg style="left:1799.0px;top:154.0px;" width="20" height="18" viewBox="0 0 20 18"><path d="M1 5v4M1 7h9M10 5v4" stroke="#5a9ad0" stroke-width="1"/><path d="M8 14l8-7" stroke="#3f9a4c" stroke-width="3"/><path d="M6 16l2-2" stroke="#333" stroke-width="1.4"/></svg>
<div style="left:1821.0px;top:149.0px;width:10.0px;height:27.0px;background:#c9ccd6;border-radius:0 3px 3px 0"></div>
<svg style="left:1823.0px;top:164.0px;" width="7" height="8" viewBox="0 0 7 8"><path d="M0.5 0.5h6" stroke="#444" stroke-width="1"/><path d="M0.5 3h6l-3 3.5z" fill="#444"/></svg>
<div style="left:27.0px;top:177.3px;width:1796.0px;height:794.0px;background:#fff;border:2px solid;border-color:#808080 #e8e8e8 #e8e8e8 #808080"></div>
<div style="left:29.0px;top:179.3px;width:1792.0px;height:790.0px;background:#fff"></div>
<div style="left:1741.0px;top:201.0px;width:1.0px;height:59.0px;background:#000"></div>
<div style="left:1741.0px;top:259.0px;width:61.0px;height:1.0px;background:#000"></div>
<span class="t" style="top:182.0px;font-size:14px;line-height:18px;color:#000;font-weight:bold;left:1547.0px;width:400px;text-align:center;"><span>y</span></span>
<span class="t" style="top:241.0px;font-size:14px;line-height:18px;color:#000;font-weight:bold;left:1606.0px;width:400px;text-align:center;"><span>x</span></span>
<span class="t" style="top:241.5px;font-size:13px;line-height:17px;color:#b8862a;font-weight:bold;left:1547.0px;width:400px;text-align:center;"><span>z</span></span>
<svg style="left:72.0px;top:912.0px;" width="17" height="17" viewBox="0 0 17 17"><path d="M8.5 2v13M2 8.5h13M4.2 4.2l8.6 8.6M12.8 4.2L4.2 12.8" stroke="#000" stroke-width="1.1"/></svg>
<div style="left:1.0px;top:178.0px;width:24.0px;height:495.0px;background:linear-gradient(90deg,#f1f2f7,#dfe1ec);border-radius:3px;"></div>
<div style="left:4.0px;top:182.0px;width:2.0px;height:2.0px;background:#555"></div><div style="left:8.0px;top:182.0px;width:2.0px;height:2.0px;background:#555"></div><div style="left:12.0px;top:182.0px;width:2.0px;height:2.0px;background:#555"></div><div style="left:16.0px;top:182.0px;width:2.0px;height:2.0px;background:#555"></div><div style="left:20.0px;top:182.0px;width:2.0px;height:2.0px;background:#555"></div>
<svg style="left:5.0px;top:190.0px;" width="16" height="16" viewBox="0 0 16 16"><path d="M5 2h10v11H5L0.8 7.5z" fill="#fff" stroke="#1f6fb8" stroke-width="1.5" stroke-linejoin="round"/><text x="7" y="11" font-family="Liberation Sans,sans-serif" font-weight="bold" font-size="9" fill="#8a8a10">?</text></svg>
<svg style="left:5.0px;top:218.0px;" width="16" height="16" viewBox="0 0 16 16"><text x="0" y="6" font-family="Liberation Sans,sans-serif" font-size="5.5" fill="#6f9fd0" font-weight="bold">XYZ</text><circle cx="3" cy="12" r="1.3" fill="#4f7a1c"/><text x="9" y="15" font-family="Liberation Sans,sans-serif" font-weight="bold" font-size="10" fill="#5c8f1c">?</text></svg>
<svg style="left:5.0px;top:239.5px;" width="16" height="16" viewBox="0 0 16 16"><path d="M1 0v7M15 0v7M1 3h14" stroke="#1f6fb8" stroke-width="1"/><rect x="0.5" y="7" width="15" height="5.5" fill="#e9f4dd" stroke="#4f9a2c" stroke-width="1.2"/><path d="M3 7 v2.5M5.5 7 v2M8 7 v2.5M10.5 7 v2M13 7 v2.5" stroke="#4f9a2c" stroke-width="1"/><path d="M2 15l1.5-1.5M14 15l-1.5-1.5" stroke="#1f6fb8" stroke-width="1"/></svg>
<svg style="left:5.0px;top:261.0px;" width="16" height="16" viewBox="0 0 16 16"><path d="M1 0v7M15 0v7M1 3h14" stroke="#1f6fb8" stroke-width="1"/><rect x="0.5" y="7" width="15" height="5.5" fill="#e9f4dd" stroke="#4f9a2c" stroke-width="1.2"/><path d="M3 7 v2.5M5.5 7 v2M8 7 v2.5M10.5 7 v2M13 7 v2.5" stroke="#4f9a2c" stroke-width="1"/><path d="M0 15h16" stroke="#1f6fb8" stroke-width="1.6"/></svg>
<svg style="left:5.0px;top:283.0px;" width="16" height="16" viewBox="0 0 16 16"><path d="M2 0v9h12M2 5q4 0 5 4" fill="none" stroke="#1f6fb8" stroke-width="1.4"/><text x="9" y="7" font-family="Liberation Sans,sans-serif" font-weight="bold" font-size="9" fill="#5c8f1c">?</text><rect x="0.5" y="10.5" width="15" height="5.5" fill="#e9f4dd" stroke="#4f9a2c" stroke-width="1.2"/><path d="M3 10.5 v2.5M5.5 10.5 v2M8 10.5 v2.5M10.5 10.5 v2M13 10.5 v2.5" stroke="#4f9a2c" stroke-width="1"/></svg>
<svg style="left:5.0px;top:312.0px;" width="16" height="16" viewBox="0 0 16 16"><path d="M1 2h5l2 3" fill="none" stroke="#9ab" stroke-width="1"/><path d="M8 9l6-2v3z" fill="#9cba8c"/><text x="6" y="9" font-family="Liberation Sans,sans-serif" font-weight="bold" font-size="8" fill="#5c8f1c">?</text><rect x="0.5" y="10.5" width="15" height="5.5" fill="#e9f4dd" stroke="#4f9a2c" stroke-width="1.2"/><path d="M3 10.5 v2.5M5.5 10.5 v2M8 10.5 v2.5M10.5 10.5 v2M13 10.5 v2.5" stroke="#4f9a2c" stroke-width="1"/></svg>
<svg style="left:5.0px;top:333.0px;" width="16" height="16" viewBox="0 0 16 16"><path d="M1.5 1h8v4h-4v4h-4z" fill="#dce9f7" stroke="#1f6fb8" stroke-width="1.5"/><text x="11" y="8" font-family="Liberation Sans,sans-serif" font-weight="bold" font-size="9" fill="#5c8f1c">?</text><rect x="0.5" y="10.5" width="15" height="5.5" fill="#e9f4dd" stroke="#4f9a2c" stroke-width="1.2"/><path d="M3 10.5 v2.5M5.5 10.5 v2M8 10.5 v2.5M10.5 10.5 v2M13 10.5 v2.5" stroke="#4f9a2c" stroke-width="1"/></svg>
<svg style="left:5.0px;top:356.0px;" width="16" height="16" viewBox="0 0 16 16"><path d="M1.5 1h8v6h-8z" fill="#eef" stroke="#7a8aa0" stroke-width="1"/><path d="M2 8h3" stroke="#333" stroke-width="1"/><text x="11" y="9" font-family="Liberation Sans,sans-serif" font-weight="bold" font-size="9" fill="#5c8f1c">?</text><rect x="0.5" y="10.5" width="15" height="5.5" fill="#e9f4dd" stroke="#4f9a2c" stroke-width="1.2"/><path d="M3 10.5 v2.5M5.5 10.5 v2M8 10.5 v2.5M10.5 10.5 v2M13 10.5 v2.5" stroke="#4f9a2c" stroke-width="1"/></svg>
<svg style="left:5.0px;top:383.0px;" width="16" height="16" viewBox="0 0 16 16"><rect x="1" y="1" width="10" height="8" fill="#e4f2d8"/><text x="2" y="8" font-family="Liberation Sans,sans-serif" font-weight="bold" font-size="6.5" fill="#4f8a1c">m²</text><text x="11" y="9" font-family="Liberation Sans,sans-serif" font-weight="bold" font-size="9" fill="#5c8f1c">?</text><rect x="0.5" y="10.5" width="15" height="5.5" fill="#e9f4dd" stroke="#4f9a2c" stroke-width="1.2"/><path d="M3 10.5 v2.5M5.5 10.5 v2M8 10.5 v2.5M10.5 10.5 v2M13 10.5 v2.5" stroke="#4f9a2c" stroke-width="1"/></svg>
<svg style="left:5.0px;top:404.5px;" width="16" height="16" viewBox="0 0 16 16"><path d="M1 2l10-1l4 3l-2 6H3z" fill="#9cc3e6" stroke="#1a5a9f" stroke-width="1.4"/><text x="4" y="9" font-family="Liberation Sans,sans-serif" font-weight="bold" font-size="6" fill="#2f6a1c">m²</text><rect x="0.5" y="10.5" width="15" height="5.5" fill="#e9f4dd" stroke="#4f9a2c" stroke-width="1.2"/><path d="M3 10.5 v2.5M5.5 10.5 v2M8 10.5 v2.5M10.5 10.5 v2M13 10.5 v2.5" stroke="#4f9a2c" stroke-width="1"/></svg>
<svg style="left:5.0px;top:427.0px;" width="16" height="16" viewBox="0 0 16 16"><rect x="1" y="1" width="9" height="9" fill="#9cc3e6" stroke="#1a5a9f" stroke-width="1.2"/><text x="2" y="8" font-family="Liberation Sans,sans-serif" font-weight="bold" font-size="6" fill="#2f6a1c">m²</text><text x="11" y="8" font-family="Liberation Sans,sans-serif" font-weight="bold" font-size="9" fill="#5c8f1c">?</text><rect x="0.5" y="10.5" width="15" height="5.5" fill="#e9f4dd" stroke="#4f9a2c" stroke-width="1.2"/><path d="M3 10.5 v2.5M5.5 10.5 v2M8 10.5 v2.5M10.5 10.5 v2M13 10.5 v2.5" stroke="#4f9a2c" stroke-width="1"/></svg>
<svg style="left:5.0px;top:449.0px;" width="16" height="16" viewBox="0 0 16 16"><path d="M1 3l5-2l5 2v6H1z" fill="#8cc38a" stroke="#1a5a9f" stroke-width="1.2"/><text x="2" y="9" font-family="Liberation Sans,sans-serif" font-weight="bold" font-size="6" fill="#2f6a1c">m³</text><text x="11" y="8" font-family="Liberation Sans,sans-serif" font-weight="bold" font-size="9" fill="#5c8f1c">?</text><rect x="0.5" y="10.5" width="15" height="5.5" fill="#e9f4dd" stroke="#4f9a2c" stroke-width="1.2"/><path d="M3 10.5 v2.5M5.5 10.5 v2M8 10.5 v2.5M10.5 10.5 v2M13 10.5 v2.5" stroke="#4f9a2c" stroke-width="1"/></svg>
<svg style="left:5.0px;top:472.0px;" width="16" height="16" viewBox="0 0 16 16"><path d="M2 2q4-2.5 8 0v7q-4 2.5-8 0z" fill="#fff" stroke="#1a5a9f" stroke-width="1.5"/><text x="11" y="8" font-family="Liberation Sans,sans-serif" font-weight="bold" font-size="9" fill="#5c8f1c">?</text><rect x="0.5" y="10.5" width="15" height="5.5" fill="#e9f4dd" stroke="#4f9a2c" stroke-width="1.2"/><path d="M3 10.5 v2.5M5.5 10.5 v2M8 10.5 v2.5M10.5 10.5 v2M13 10.5 v2.5" stroke="#4f9a2c" stroke-width="1"/></svg>
<svg style="left:5.0px;top:500.0px;" width="16" height="16" viewBox="0 0 16 16"><path d="M2 1h6v3h5v6H2z" fill="#8fb4dd" stroke="#5a8fca" stroke-width="1"/><text x="1" y="16" font-family="Liberation Sans,sans-serif" font-weight="bold" font-size="6.5" fill="#3f8a1c">[m²]</text></svg>
<svg style="left:5.0px;top:522.0px;" width="16" height="16" viewBox="0 0 16 16"><rect x="2" y="1" width="4" height="4" fill="#8fb4dd"/><rect x="9" y="2" width="5" height="4" fill="#8fb4dd"/><rect x="5" y="6" width="5" height="4" fill="#6f9fd0"/><text x="1" y="16" font-family="Liberation Sans,sans-serif" font-weight="bold" font-size="6.5" fill="#3f8a1c">[m²]</text></svg>
<svg style="left:5.0px;top:543.0px;" width="16" height="16" viewBox="0 0 16 16"><text x="1" y="7" font-family="Liberation Sans,sans-serif" font-weight="bold" font-size="6.5" fill="#3f8a1c">[m³]</text><text x="1" y="15" font-family="Liberation Sans,sans-serif" font-weight="bold" font-size="6.5" fill="#3f8a1c">[Fr³]</text></svg>
<svg style="left:5.0px;top:573.0px;" width="16" height="16" viewBox="0 0 16 16"><path d="M4 0.5h8l3 3v12H4z" fill="#fff" stroke="#1a5a9f" stroke-width="1.3"/><path d="M0.5 8h8q0 6-4 8q-4-2-4-8z" fill="#cfe2f5" stroke="#1a5a9f" stroke-width="1.2"/><text x="9" y="8" font-family="Liberation Sans,sans-serif" font-weight="bold" font-size="8" fill="#5c8f1c">?</text></svg>
<svg style="left:5.0px;top:594.0px;" width="16" height="16" viewBox="0 0 16 16"><path d="M2 0.5h9l3 3v12H2z" fill="#eaf2fb" stroke="#1a5a9f" stroke-width="1.3"/><path d="M4 6h5" stroke="#4a8a2c" stroke-width="1"/><rect x="5" y="8.5" width="7" height="5" fill="#dff0d0" stroke="#4a8a2c" stroke-width="1"/><path d="M5 11h7M8.5 8.5v5" stroke="#4a8a2c" stroke-width="0.8"/></svg>
<svg style="left:5.0px;top:620.5px;" width="16" height="16" viewBox="0 0 16 16"><circle cx="3" cy="3" r="2" fill="#3f7fc0"/><rect x="6" y="1" width="7" height="5" fill="#8aa"/><text x="0" y="12" font-family="Liberation Sans,sans-serif" font-weight="bold" font-size="6" fill="#d02020">www</text><path d="M10 13h6M13 10v6" stroke="#3f9a2c" stroke-width="2"/></svg>
<div style="left:6.0px;top:212.0px;width:15.0px;height:1.0px;background:#8a8f9c"></div>
<div style="left:6.0px;top:305.5px;width:15.0px;height:1.0px;background:#8a8f9c"></div>
<div style="left:6.0px;top:377.0px;width:15.0px;height:1.0px;background:#8a8f9c"></div>
<div style="left:6.0px;top:492.6px;width:15.0px;height:1.0px;background:#8a8f9c"></div>
<div style="left:6.0px;top:565.0px;width:15.0px;height:1.0px;background:#8a8f9c"></div>
<div style="left:6.0px;top:615.0px;width:15.0px;height:1.0px;background:#8a8f9c"></div>
<div style="left:1.0px;top:660.0px;width:24.0px;height:13.0px;background:#c9ccd6;border-radius:0 0 3px 3px"></div>
<svg style="left:4.0px;top:662.0px;" width="20" height="8" viewBox="0 0 20 8"><path d="M1 1l2 2.5l2-2.5M1 4l2 2.5l2-2.5" fill="none" stroke="#555" stroke-width="1"/><path d="M15 0.5v7" stroke="#555"/><path d="M17 1l3 3l-3 3z" fill="#555"/></svg>
<div style="left:1.0px;top:675.0px;width:24.0px;height:330.0px;background:linear-gradient(90deg,#f1f2f7,#dfe1ec);border-radius:3px;"></div>
<div style="left:4.0px;top:679.0px;width:2.0px;height:2.0px;background:#555"></div><div style="left:8.0px;top:679.0px;width:2.0px;height:2.0px;background:#555"></div><div style="left:12.0px;top:679.0px;width:2.0px;height:2.0px;background:#555"></div><div style="left:16.0px;top:679.0px;width:2.0px;height:2.0px;background:#555"></div><div style="left:20.0px;top:679.0px;width:2.0px;height:2.0px;background:#555"></div>
<svg style="left:5.0px;top:685.0px;" width="16" height="16" viewBox="0 0 16 16"><path d="M1 15L11 5" stroke="#1a5a9f" stroke-width="2"/><rect x="9.5" y="1" width="5" height="5" fill="#fff" stroke="#e0392b" stroke-width="1.8"/></svg>
<svg style="left:5.0px;top:709.0px;" width="16" height="16" viewBox="0 0 16 16"><path d="M1 15L15 1" stroke="#1a5a9f" stroke-width="2"/><rect x="5.5" y="5.5" width="5" height="5" fill="#fff" stroke="#e0392b" stroke-width="1.8"/></svg>
<svg style="left:5.0px;top:731.0px;" width="16" height="16" viewBox="0 0 16 16"><rect x="5.5" y="5.5" width="5" height="5" fill="#fff" stroke="#e0392b" stroke-width="1.8"/><circle cx="14" cy="3" r="1" fill="#e9a"/><circle cx="2" cy="13" r="1" fill="#e9a"/></svg>
<svg style="left:5.0px;top:753.0px;" width="16" height="16" viewBox="0 0 16 16"><path d="M1 1l14 14M15 1L1 15" stroke="#1a5a9f" stroke-width="2.2"/><rect x="5.5" y="5.5" width="5" height="5" fill="#fff" stroke="#e0392b" stroke-width="1.8"/></svg>
<svg style="left:5.0px;top:774.0px;" width="16" height="16" viewBox="0 0 16 16"><path d="M0 9h8" stroke="#1a5a9f" stroke-width="1" stroke-dasharray="1.5 1.5"/><text x="3" y="6" font-family="Liberation Sans,sans-serif" font-size="6" fill="#1a5a9f" font-weight="bold">d</text><circle cx="11.5" cy="9" r="3" fill="#fff" stroke="#e0392b" stroke-width="1.8"/></svg>
<svg style="left:5.0px;top:796.0px;" width="16" height="16" viewBox="0 0 16 16"><path d="M0 8h16M8 0v16" stroke="#1a5a9f" stroke-width="2.2"/><circle cx="8" cy="8" r="3" fill="#fff" stroke="#e0392b" stroke-width="1.8"/></svg>
<svg style="left:5.0px;top:817.0px;" width="16" height="16" viewBox="0 0 16 16"><path d="M4 5q10 0 11 11" fill="none" stroke="#1a5a9f" stroke-width="1.8"/><circle cx="4" cy="4.5" r="3" fill="#fff" stroke="#e0392b" stroke-width="1.8"/></svg>
<svg style="left:5.0px;top:839.0px;" width="16" height="16" viewBox="0 0 16 16"><path d="M0 10h8" stroke="#1a5a9f" stroke-width="1" stroke-dasharray="1.5 1.5"/><text x="3" y="6" font-family="Liberation Sans,sans-serif" font-size="7" fill="#1a5a9f" font-weight="bold">x</text><circle cx="11.5" cy="10" r="3" fill="#fff" stroke="#e0392b" stroke-width="1.8"/></svg>
<svg style="left:5.0px;top:861.5px;" width="16" height="16" viewBox="0 0 16 16"><path d="M0 10h8" stroke="#1a5a9f" stroke-width="1" stroke-dasharray="1.5 1.5"/><text x="3" y="6" font-family="Liberation Sans,sans-serif" font-size="7" fill="#1a5a9f" font-weight="bold">y</text><circle cx="11.5" cy="10" r="3" fill="#fff" stroke="#e0392b" stroke-width="1.8"/></svg>
<svg style="left:5.0px;top:884.0px;" width="16" height="16" viewBox="0 0 16 16"><path d="M0 10h8" stroke="#1a5a9f" stroke-width="1" stroke-dasharray="1.5 1.5"/><text x="3" y="6" font-family="Liberation Sans,sans-serif" font-size="7" fill="#1a5a9f" font-weight="bold">z</text><circle cx="11.5" cy="10" r="3" fill="#fff" stroke="#e0392b" stroke-width="1.8"/></svg>
<svg style="left:5.0px;top:906.0px;" width="16" height="16" viewBox="0 0 16 16"><path d="M3 1v12h12" fill="none" stroke="#e88a2c" stroke-width="2.4"/><path d="M6 3h7v8" fill="none" stroke="#e0392b" stroke-width="1" stroke-dasharray="1.5 1.5"/></svg>
<svg style="left:5.0px;top:933.0px;" width="16" height="16" viewBox="0 0 16 16"><path d="M4 1v12M7 4v9" stroke="#e0392b" stroke-width="1.6"/><path d="M10 3v10M12.5 5v8" stroke="#5aaa3c" stroke-width="1.6"/><path d="M0 12q8 5 16 0" fill="none" stroke="#1a5a9f" stroke-width="1.6"/></svg>
<svg style="left:5.0px;top:962.5px;" width="16" height="16" viewBox="0 0 16 16"><path d="M1 4l7-3l7 3v9l-7 3l-7-3z" fill="#fff" stroke="#1a5a9f" stroke-width="1.4"/><path d="M1 4l7 3l7-3M8 7v9" fill="none" stroke="#1a5a9f" stroke-width="1.2"/><path d="M1 4l7-3l7 3l-7 3z" fill="#f07c2c" stroke="#e0392b" stroke-width="1"/></svg>
<div style="left:6.0px;top:929.0px;width:15.0px;height:1.0px;background:#8a8f9c"></div>
<div style="left:6.0px;top:954.0px;width:15.0px;height:1.0px;background:#8a8f9c"></div>
<div style="left:1.0px;top:992.0px;width:24.0px;height:13.0px;background:#c9ccd6;border-radius:0 0 3px 3px"></div>
<svg style="left:4.0px;top:994.0px;" width="20" height="8" viewBox="0 0 20 8"><path d="M1 1l2 2.5l2-2.5M1 4l2 2.5l2-2.5" fill="none" stroke="#555" stroke-width="1"/><path d="M15 0.5v7" stroke="#555"/><path d="M17 1l3 3l-3 3z" fill="#555"/></svg>
<div style="left:1822.0px;top:177.0px;width:25.0px;height:828.0px;background:#ededf0"></div>
<div style="left:1826.0px;top:177.0px;width:20.0px;height:146.0px;background:#f3f3f5;border:1px solid #a9acb8;border-left-color:#c8cad4"></div>
<div style="left:1836px;top:250.0px;width:0;height:0;transform:rotate(90deg)"><span class="t" style="top:-8.5px;font-size:13px;line-height:17px;color:#111;letter-spacing:-0.350px;left:-200.2px;width:400px;text-align:center;"><span>Gestionnaire de calques</span></span></div>
<div style="left:1826.0px;top:336.0px;width:20.0px;height:149.0px;background:#f3f3f5;border:1px solid #a9acb8;border-left-color:#c8cad4"></div>
<div style="left:1836px;top:410.5px;width:0;height:0;transform:rotate(90deg)"><span class="t" style="top:-8.5px;font-size:13px;line-height:17px;color:#111;letter-spacing:-0.395px;left:-200.2px;width:400px;text-align:center;"><span>Gestionnaire de rapports</span></span></div>
<div style="left:1847.5px;top:179.0px;width:34.5px;height:308.0px;background:linear-gradient(90deg,#f1f2f7,#dfe1ec);border-radius:3px;"></div><div style="left:1850.5px;top:183.0px;width:2.0px;height:2.0px;background:#555"></div><div style="left:1854.0px;top:183.0px;width:2.0px;height:2.0px;background:#555"></div><div style="left:1857.5px;top:183.0px;width:2.0px;height:2.0px;background:#555"></div><div style="left:1861.0px;top:183.0px;width:2.0px;height:2.0px;background:#555"></div><div style="left:1864.5px;top:183.0px;width:2.0px;height:2.0px;background:#555"></div><div style="left:1868.0px;top:183.0px;width:2.0px;height:2.0px;background:#555"></div><div style="left:1871.5px;top:183.0px;width:2.0px;height:2.0px;background:#555"></div><div style="left:1875.0px;top:183.0px;width:2.0px;height:2.0px;background:#555"></div><svg style="left:1851.5px;top:190.0px;" width="16" height="16" viewBox="0 0 16 16"><path d="M1 6l10-3v8l-10 3z" fill="#dce9f7" stroke="#2a78bd" stroke-width="1.3"/><path d="M2 9l12-7" stroke="#e0392b" stroke-width="1.4"/><path d="M11 11l4-4" stroke="#2a78bd" stroke-width="1.2"/></svg><svg style="left:1872.5px;top:197.0px;" width="6" height="4" viewBox="0 0 6 4"><path d="M0 0h6l-3 3.5z" fill="#666"/></svg><svg style="left:1857.0px;top:212.7px;" width="16" height="16" viewBox="0 0 16 16"><path d="M8 1v14M1 8h14" stroke="#888" stroke-width="1.6"/><path d="M8 0l2.5 3h-5zM8 16l2.5-3h-5zM0 8l3-2.5v5zM16 8l-3-2.5v5z" fill="#888"/></svg><svg style="left:1857.0px;top:234.0px;" width="16" height="16" viewBox="0 0 16 16"><path d="M7 1v12M1 7h12" stroke="#888" stroke-width="1.5"/><path d="M7 0l2.5 3h-5zM0 7l3-2.5v5z" fill="#888"/><path d="M9 13h6M12 10v6" stroke="#3f9a2c" stroke-width="2"/></svg><svg style="left:1851.5px;top:256.0px;" width="16" height="16" viewBox="0 0 16 16"><path d="M2 2l5 8l5-8" fill="none" stroke="#2a78bd" stroke-width="1.3"/><path d="M1 13h10" stroke="#e0392b" stroke-width="1"/><path d="M4 9l6 5" stroke="#2a78bd" stroke-width="1.2"/></svg><svg style="left:1872.5px;top:263.0px;" width="6" height="4" viewBox="0 0 6 4"><path d="M0 0h6l-3 3.5z" fill="#666"/></svg><svg style="left:1851.5px;top:277.5px;" width="16" height="16" viewBox="0 0 16 16"><path d="M1 2h5v5M6 7l5 3v5" fill="none" stroke="#2a78bd" stroke-width="1.6"/><path d="M11 3l3 4" stroke="#2a78bd" stroke-width="1.4"/></svg><svg style="left:1872.5px;top:284.5px;" width="6" height="4" viewBox="0 0 6 4"><path d="M0 0h6l-3 3.5z" fill="#666"/></svg><svg style="left:1851.5px;top:300.5px;" width="16" height="16" viewBox="0 0 16 16"><path d="M2 1v13h12" fill="none" stroke="#2a78bd" stroke-width="1.8"/><path d="M4 5h6v7" fill="none" stroke="#8ab" stroke-width="1"/><circle cx="5" cy="5" r="1" fill="#e0392b"/></svg><svg style="left:1872.5px;top:307.5px;" width="6" height="4" viewBox="0 0 6 4"><path d="M0 0h6l-3 3.5z" fill="#666"/></svg><svg style="left:1851.5px;top:322.0px;" width="16" height="16" viewBox="0 0 16 16"><rect x="1" y="6" width="8" height="8" fill="none" stroke="#8ab" stroke-width="1" stroke-dasharray="1.5 1"/><rect x="7" y="1" width="8" height="8" fill="#fff" stroke="#2a78bd" stroke-width="1.2"/><circle cx="9" cy="8" r="1.2" fill="#e0392b"/></svg><svg style="left:1872.5px;top:329.0px;" width="6" height="4" viewBox="0 0 6 4"><path d="M0 0h6l-3 3.5z" fill="#666"/></svg><svg style="left:1851.5px;top:343.0px;" width="16" height="16" viewBox="0 0 16 16"><path d="M1 2h12M7 2v10M3 12h10" stroke="#5a9a8a" stroke-width="1.6"/><path d="M10 9l4 6h-6z" fill="#9cc3e6"/></svg><svg style="left:1872.5px;top:350.0px;" width="6" height="4" viewBox="0 0 6 4"><path d="M0 0h6l-3 3.5z" fill="#666"/></svg><svg style="left:1851.5px;top:365.0px;" width="16" height="16" viewBox="0 0 16 16"><rect x="1" y="1" width="14" height="14" fill="none" stroke="#3f9a4c" stroke-width="1.4" stroke-dasharray="2 1.4"/><path d="M4 6l4-2l4 2v5l-4 2l-4-2z" fill="#e8e8e8" stroke="#888" stroke-width="1"/></svg><svg style="left:1872.5px;top:372.0px;" width="6" height="4" viewBox="0 0 6 4"><path d="M0 0h6l-3 3.5z" fill="#666"/></svg><svg style="left:1851.5px;top:387.5px;" width="16" height="16" viewBox="0 0 16 16"><path d="M3 8l5-6l5 6" fill="none" stroke="#4a8aaa" stroke-width="1.5"/><path d="M2 12h6l4 3" fill="none" stroke="#2a78bd" stroke-width="1.2"/><path d="M7 8v5" stroke="#8ab" stroke-width="1"/></svg><svg style="left:1872.5px;top:394.5px;" width="6" height="4" viewBox="0 0 6 4"><path d="M0 0h6l-3 3.5z" fill="#666"/></svg><svg style="left:1857.0px;top:410.5px;" width="16" height="16" viewBox="0 0 16 16"><path d="M1 5l10-2v9l-10 2z" fill="#fff" stroke="#2a78bd" stroke-width="1.5"/><path d="M3 9l11-7" stroke="#e0392b" stroke-width="1.6"/><path d="M11 10l4-4" stroke="#2a78bd" stroke-width="1.4"/></svg><svg style="left:1857.0px;top:433.0px;" width="16" height="16" viewBox="0 0 16 16"><path d="M3 3l9 10" stroke="#1a5a9f" stroke-width="3.4"/><path d="M1 1l3 3" stroke="#f2c230" stroke-width="2.4"/><circle cx="2" cy="5" r="0.8" fill="#f2c230"/></svg><svg style="left:1851.5px;top:454.0px;" width="16" height="16" viewBox="0 0 16 16"><path d="M3 4h10l-1 11H4z" fill="#fde" stroke="#e0392b" stroke-width="1.4"/><path d="M1.5 4h13M6 4V1.5h4V4" fill="none" stroke="#e0392b" stroke-width="1.4"/><path d="M6.5 7v5M9.5 7v5" stroke="#e0392b" stroke-width="1"/></svg><svg style="left:1872.5px;top:461.0px;" width="6" height="4" viewBox="0 0 6 4"><path d="M0 0h6l-3 3.5z" fill="#666"/></svg><div style="left:1847.5px;top:478.0px;width:34.5px;height:9.0px;background:#c9ccd6"></div><svg style="left:1873.0px;top:479.0px;" width="8" height="7" viewBox="0 0 8 7"><path d="M1.5 0.5v6" stroke="#555" stroke-width="1"/><path d="M3.5 0.5l3.5 3l-3.5 3z" fill="#555"/></svg>
<div style="left:1847.5px;top:489.0px;width:34.5px;height:363.0px;background:linear-gradient(90deg,#f1f2f7,#dfe1ec);border-radius:3px;"></div><div style="left:1850.5px;top:493.0px;width:2.0px;height:2.0px;background:#555"></div><div style="left:1854.0px;top:493.0px;width:2.0px;height:2.0px;background:#555"></div><div style="left:1857.5px;top:493.0px;width:2.0px;height:2.0px;background:#555"></div><div style="left:1861.0px;top:493.0px;width:2.0px;height:2.0px;background:#555"></div><div style="left:1864.5px;top:493.0px;width:2.0px;height:2.0px;background:#555"></div><div style="left:1868.0px;top:493.0px;width:2.0px;height:2.0px;background:#555"></div><div style="left:1871.5px;top:493.0px;width:2.0px;height:2.0px;background:#555"></div><div style="left:1875.0px;top:493.0px;width:2.0px;height:2.0px;background:#555"></div><svg style="left:1857.0px;top:497.0px;" width="16" height="16" viewBox="0 0 16 16"><path d="M1 1l9 3l-3 1.5l5.5 6l-2 2l-5.5-6L3 10z" fill="#1a5a9f"/></svg><svg style="left:1857.0px;top:520.0px;" width="16" height="16" viewBox="0 0 16 16"><path d="M1 1l9 3l-3 1.5l5.5 6l-2 2l-5.5-6L3 10z" fill="#1a5a9f"/><circle cx="13" cy="13" r="1.6" fill="#f2a23c"/></svg><svg style="left:1857.0px;top:550.5px;" width="16" height="16" viewBox="0 0 16 16"><rect x="0.5" y="0.5" width="14" height="14" fill="none" stroke="#2e7a4a" stroke-width="1.2" stroke-dasharray="2 1.5"/><g transform="translate(2,2) scale(0.8)"><path d="M1 1l9 3l-3 1.5l5.5 6l-2 2l-5.5-6L3 10z" fill="#1a5a9f"/></g><path d="M10 13h5M12.5 10.5v5" stroke="#2e9a3a" stroke-width="1.8"/></svg><svg style="left:1857.0px;top:572.0px;" width="16" height="16" viewBox="0 0 16 16"><rect x="0.5" y="0.5" width="14" height="14" fill="none" stroke="#2e7a4a" stroke-width="1.2" stroke-dasharray="2 1.5"/><g transform="translate(2,2) scale(0.8)"><path d="M1 1l9 3l-3 1.5l5.5 6l-2 2l-5.5-6L3 10z" fill="#1a5a9f"/></g><path d="M10 13h5" stroke="#2e9a3a" stroke-width="1.8"/></svg><svg style="left:1857.0px;top:601.0px;" width="16" height="16" viewBox="0 0 16 16"><path d="M2 12a6 6 0 1 1 9-8" fill="none" stroke="#1a5a9f" stroke-width="1.6"/><path d="M3 14L11 5" stroke="#1a5a9f" stroke-width="2"/><path d="M13 2v9" stroke="#1a5a9f" stroke-width="1.4"/><path d="M10 13h5M12.5 10.5v5" stroke="#2e9a3a" stroke-width="1.8"/></svg><svg style="left:1857.0px;top:622.7px;" width="16" height="16" viewBox="0 0 16 16"><path d="M2 12a6 6 0 1 1 9-8" fill="none" stroke="#1a5a9f" stroke-width="1.6"/><path d="M3 14L11 5" stroke="#1a5a9f" stroke-width="2"/><path d="M13 2v9" stroke="#1a5a9f" stroke-width="1.4"/><path d="M10 13h5" stroke="#2e9a3a" stroke-width="1.8"/></svg><svg style="left:1852.0px;top:651.6px;" width="16" height="16" viewBox="0 0 16 16"><path d="M1 4.5l6-3.5l6 3.5v7l-6 3.5l-6-3.5z" fill="#9cc3e6" stroke="#1a5a9f" stroke-width="1.2"/><g transform="translate(3,3) scale(0.6)"><path d="M1 1l9 3l-3 1.5l5.5 6l-2 2l-5.5-6L3 10z" fill="#1a5a9f"/></g><path d="M10 13h5M12.5 10.5v5" stroke="#2e9a3a" stroke-width="1.8"/></svg><svg style="left:1872.5px;top:658.6px;" width="6" height="4" viewBox="0 0 6 4"><path d="M0 0h6l-3 3.5z" fill="#666"/></svg><svg style="left:1852.0px;top:671.8px;" width="16" height="16" viewBox="0 0 16 16"><path d="M1 4.5l6-3.5l6 3.5v7l-6 3.5l-6-3.5z" fill="#9cc3e6" stroke="#1a5a9f" stroke-width="1.2"/><g transform="translate(3,3) scale(0.6)"><path d="M1 1l9 3l-3 1.5l5.5 6l-2 2l-5.5-6L3 10z" fill="#1a5a9f"/></g><path d="M10 13h5" stroke="#2e9a3a" stroke-width="1.8"/></svg><svg style="left:1872.5px;top:678.8px;" width="6" height="4" viewBox="0 0 6 4"><path d="M0 0h6l-3 3.5z" fill="#666"/></svg><svg style="left:1852.0px;top:698.0px;" width="16" height="16" viewBox="0 0 16 16"><text x="0" y="5" font-family="Liberation Sans,sans-serif" font-size="5.5" font-weight="bold" fill="#2a78bd">AAA</text><g transform="translate(3,4) scale(0.8)"><path d="M1 1l9 3l-3 1.5l5.5 6l-2 2l-5.5-6L3 10z" fill="#1a5a9f"/></g><path d="M10 13h5M12.5 10.5v5" stroke="#2e9a3a" stroke-width="1.8"/></svg><svg style="left:1872.5px;top:705.0px;" width="6" height="4" viewBox="0 0 6 4"><path d="M0 0h6l-3 3.5z" fill="#666"/></svg><svg style="left:1852.0px;top:721.4px;" width="16" height="16" viewBox="0 0 16 16"><text x="0" y="5" font-family="Liberation Sans,sans-serif" font-size="5.5" font-weight="bold" fill="#2a78bd">AAA</text><g transform="translate(3,4) scale(0.8)"><path d="M1 1l9 3l-3 1.5l5.5 6l-2 2l-5.5-6L3 10z" fill="#1a5a9f"/></g><path d="M10 13h5" stroke="#2e9a3a" stroke-width="1.8"/></svg><svg style="left:1872.5px;top:728.4px;" width="6" height="4" viewBox="0 0 6 4"><path d="M0 0h6l-3 3.5z" fill="#666"/></svg><svg style="left:1852.0px;top:750.0px;" width="16" height="16" viewBox="0 0 16 16"><use href="#chair" x="0" y="0" width="9" height="13"/><g transform="translate(4,4) scale(0.8)"><path d="M1 1l9 3l-3 1.5l5.5 6l-2 2l-5.5-6L3 10z" fill="#1a5a9f"/></g><path d="M10 13h5M12.5 10.5v5" stroke="#2e9a3a" stroke-width="1.8"/></svg><svg style="left:1872.5px;top:757.0px;" width="6" height="4" viewBox="0 0 6 4"><path d="M0 0h6l-3 3.5z" fill="#666"/></svg><svg style="left:1852.0px;top:772.0px;" width="16" height="16" viewBox="0 0 16 16"><use href="#chair" x="0" y="0" width="9" height="13"/><g transform="translate(4,4) scale(0.8)"><path d="M1 1l9 3l-3 1.5l5.5 6l-2 2l-5.5-6L3 10z" fill="#1a5a9f"/></g><path d="M10 13h5" stroke="#2e9a3a" stroke-width="1.8"/></svg><svg style="left:1872.5px;top:779.0px;" width="6" height="4" viewBox="0 0 6 4"><path d="M0 0h6l-3 3.5z" fill="#666"/></svg><svg style="left:1852.0px;top:800.8px;" width="16" height="16" viewBox="0 0 16 16"><rect x="0" y="1" width="13" height="4" fill="#1a5a9f"/><rect x="1" y="2" width="2" height="2" fill="#fff"/><rect x="5.5" y="2" width="2" height="2" fill="#fff"/><rect x="10" y="2" width="2" height="2" fill="#fff"/><g transform="translate(3,4) scale(0.8)"><path d="M1 1l9 3l-3 1.5l5.5 6l-2 2l-5.5-6L3 10z" fill="#1a5a9f"/></g><path d="M10 13h5M12.5 10.5v5" stroke="#2e9a3a" stroke-width="1.8"/></svg><svg style="left:1872.5px;top:807.8px;" width="6" height="4" viewBox="0 0 6 4"><path d="M0 0h6l-3 3.5z" fill="#666"/></svg><svg style="left:1852.0px;top:821.0px;" width="16" height="16" viewBox="0 0 16 16"><rect x="0" y="1" width="13" height="4" fill="#1a5a9f"/><rect x="1" y="2" width="2" height="2" fill="#fff"/><rect x="5.5" y="2" width="2" height="2" fill="#fff"/><rect x="10" y="2" width="2" height="2" fill="#fff"/><g transform="translate(3,4) scale(0.8)"><path d="M1 1l9 3l-3 1.5l5.5 6l-2 2l-5.5-6L3 10z" fill="#1a5a9f"/></g><path d="M10 13h5" stroke="#2e9a3a" stroke-width="1.8"/></svg><svg style="left:1872.5px;top:828.0px;" width="6" height="4" viewBox="0 0 6 4"><path d="M0 0h6l-3 3.5z" fill="#666"/></svg><div style="left:1847.5px;top:843.0px;width:34.5px;height:9.0px;background:#c9ccd6"></div><svg style="left:1873.0px;top:844.0px;" width="8" height="7" viewBox="0 0 8 7"><path d="M1.5 0.5v6" stroke="#555" stroke-width="1"/><path d="M3.5 0.5l3.5 3l-3.5 3z" fill="#555"/></svg>
<div style="left:1847.5px;top:858.0px;width:34.5px;height:63.0px;background:linear-gradient(90deg,#f1f2f7,#dfe1ec);border-radius:3px;"></div><div style="left:1850.5px;top:862.0px;width:2.0px;height:2.0px;background:#555"></div><div style="left:1854.0px;top:862.0px;width:2.0px;height:2.0px;background:#555"></div><div style="left:1857.5px;top:862.0px;width:2.0px;height:2.0px;background:#555"></div><div style="left:1861.0px;top:862.0px;width:2.0px;height:2.0px;background:#555"></div><div style="left:1864.5px;top:862.0px;width:2.0px;height:2.0px;background:#555"></div><div style="left:1868.0px;top:862.0px;width:2.0px;height:2.0px;background:#555"></div><div style="left:1871.5px;top:862.0px;width:2.0px;height:2.0px;background:#555"></div><div style="left:1875.0px;top:862.0px;width:2.0px;height:2.0px;background:#555"></div><svg style="left:1857.0px;top:867.0px;" width="16" height="16" viewBox="0 0 16 16"><use href="#chair" x="4" y="0" width="9" height="14" opacity=".8"/><path d="M3 12l3-3" stroke="#f4935a" stroke-width="1.2"/></svg><svg style="left:1857.0px;top:892.0px;" width="16" height="16" viewBox="0 0 16 16"><path d="M2 14q0-10 11-11" fill="none" stroke="#c8482c" stroke-width="1.3"/><path d="M11 5l-3 5h3l-2 5" fill="none" stroke="#f4a030" stroke-width="1.6"/></svg><div style="left:1847.5px;top:912.0px;width:34.5px;height:9.0px;background:#c9ccd6"></div><svg style="left:1873.0px;top:913.0px;" width="8" height="7" viewBox="0 0 8 7"><path d="M1.5 0.5v6" stroke="#555" stroke-width="1"/><path d="M3.5 0.5l3.5 3l-3.5 3z" fill="#555"/></svg>
<div style="left:1884.0px;top:179.0px;width:35.0px;height:585.0px;background:linear-gradient(90deg,#f1f2f7,#dfe1ec);border-radius:3px;"></div>
<div style="left:1888.0px;top:183.0px;width:2.0px;height:2.0px;background:#555"></div><div style="left:1891.5px;top:183.0px;width:2.0px;height:2.0px;background:#555"></div><div style="left:1895.0px;top:183.0px;width:2.0px;height:2.0px;background:#555"></div><div style="left:1898.5px;top:183.0px;width:2.0px;height:2.0px;background:#555"></div><div style="left:1902.0px;top:183.0px;width:2.0px;height:2.0px;background:#555"></div><div style="left:1905.5px;top:183.0px;width:2.0px;height:2.0px;background:#555"></div><div style="left:1909.0px;top:183.0px;width:2.0px;height:2.0px;background:#555"></div><div style="left:1912.5px;top:183.0px;width:2.0px;height:2.0px;background:#555"></div>
<svg style="left:1893.0px;top:190.0px;" width="16" height="16" viewBox="0 0 16 16"><path d="M8 0v16M0 8h16" stroke="#e8604c" stroke-width="1.4"/></svg>
<svg style="left:1893.0px;top:218.0px;" width="16" height="16" viewBox="0 0 16 16"><path d="M2 1v14h13" fill="none" stroke="#e8604c" stroke-width="2"/><path d="M2 15L13 4" stroke="#e8604c" stroke-width="1.6"/></svg>
<svg style="left:1912.0px;top:225.0px;" width="6" height="4" viewBox="0 0 6 4"><path d="M0 0h6l-3 3.5z" fill="#666"/></svg>
<svg style="left:1893.0px;top:247.5px;" width="16" height="16" viewBox="0 0 16 16"><path d="M2 12q4-10 12-9" fill="none" stroke="#555" stroke-width="1.4"/><circle cx="2" cy="12" r="1.4" fill="#333"/><circle cx="14" cy="3" r="1.4" fill="#333"/><path d="M10 8l4 4" stroke="#e8604c" stroke-width="1.6"/></svg>
<svg style="left:1893.0px;top:269.0px;" width="16" height="16" viewBox="0 0 16 16"><path d="M2 14L14 2" stroke="#e8604c" stroke-width="2.6"/><circle cx="2.5" cy="13.5" r="1.2" fill="#333"/><circle cx="13.5" cy="2.5" r="1.2" fill="#333"/></svg>
<svg style="left:1893.0px;top:290.5px;" width="16" height="16" viewBox="0 0 16 16"><path d="M2 14L14 2" stroke="#1a5a9f" stroke-width="2.8"/><path d="M11 5l3-3" stroke="#e8604c" stroke-width="2.8"/></svg>
<svg style="left:1893.0px;top:312.0px;" width="16" height="16" viewBox="0 0 16 16"><rect x="1" y="2" width="12" height="10" fill="none" stroke="#e8604c" stroke-width="1.5"/><rect x="4" y="5" width="11" height="9" fill="none" stroke="#f4a090" stroke-width="1.2"/></svg>
<svg style="left:1893.0px;top:334.0px;" width="16" height="16" viewBox="0 0 16 16"><circle cx="2" cy="2" r="0.8" fill="#999"/><circle cx="2" cy="6" r="0.8" fill="#999"/><circle cx="2" cy="10" r="0.8" fill="#999"/><circle cx="2" cy="14" r="0.8" fill="#999"/><circle cx="6" cy="2" r="0.8" fill="#999"/><circle cx="6" cy="6" r="0.8" fill="#999"/><circle cx="6" cy="10" r="0.8" fill="#999"/><circle cx="6" cy="14" r="0.8" fill="#999"/><circle cx="10" cy="2" r="0.8" fill="#999"/><circle cx="10" cy="6" r="0.8" fill="#999"/><circle cx="10" cy="10" r="0.8" fill="#999"/><circle cx="10" cy="14" r="0.8" fill="#999"/><circle cx="14" cy="2" r="0.8" fill="#999"/><circle cx="14" cy="6" r="0.8" fill="#999"/><circle cx="14" cy="10" r="0.8" fill="#999"/><circle cx="14" cy="14" r="0.8" fill="#999"/></svg>
<svg style="left:1893.0px;top:356.0px;" width="16" height="16" viewBox="0 0 16 16"><rect x="1" y="2" width="14" height="12" fill="#fff" stroke="#2a78bd" stroke-width="1.6"/><path d="M1 6h14M1 10h14M5.7 2v12M10.3 2v12" stroke="#2a78bd" stroke-width="1.3"/></svg>
<svg style="left:1893.0px;top:376.5px;" width="16" height="16" viewBox="0 0 16 16"><path d="M1 5h14M1 11h14M9 1v14" stroke="#1a5a9f" stroke-width="1.4"/><circle cx="5" cy="5" r="1.8" fill="#9cc3e6" stroke="#1a5a9f"/><circle cx="9" cy="11" r="1.8" fill="#9cc3e6" stroke="#1a5a9f"/></svg>
<svg style="left:1893.0px;top:407.0px;" width="16" height="16" viewBox="0 0 16 16"><path d="M2 1v14h13" fill="none" stroke="#e8604c" stroke-width="1.8"/><path d="M2 15L14 3M2 15l11-4" stroke="#e8604c" stroke-width="1.3"/><circle cx="9" cy="8" r="1.3" fill="#333"/></svg>
<svg style="left:1893.0px;top:434.0px;" width="16" height="16" viewBox="0 0 16 16"><path d="M1 3h14M1 13h14" stroke="#e8604c" stroke-width="1.6"/><path d="M8 3v10" stroke="#1a5a9f" stroke-width="2.6"/></svg>
<svg style="left:1912.0px;top:441.0px;" width="6" height="4" viewBox="0 0 6 4"><path d="M0 0h6l-3 3.5z" fill="#666"/></svg>
<svg style="left:1893.0px;top:458.0px;" width="16" height="16" viewBox="0 0 16 16"><path d="M8 1v14" stroke="#2a78bd" stroke-width="1" stroke-dasharray="2 1.5"/><path d="M5 5h3v6h3" fill="none" stroke="#2a78bd" stroke-width="1.4"/></svg>
<svg style="left:1893.0px;top:478.0px;" width="16" height="16" viewBox="0 0 16 16"><path d="M0 8h16" stroke="#1a5a9f" stroke-width="1.6"/><path d="M8 1l3 4H5zM8 15l3-4H5z" fill="#f4a090"/><path d="M5 6.5h6M5 9.5h6" stroke="#e8604c" stroke-width="1"/></svg>
<svg style="left:1893.0px;top:506.7px;" width="16" height="16" viewBox="0 0 16 16"><path d="M1 8h14" stroke="#e8604c" stroke-width="1.4"/><rect x="1" y="5" width="4" height="6" fill="#1a5a9f"/><rect x="11" y="5" width="4" height="6" fill="#1a5a9f"/><rect x="6.5" y="6" width="3" height="4" fill="#e8604c"/></svg>
<svg style="left:1912.0px;top:513.7px;" width="6" height="4" viewBox="0 0 6 4"><path d="M0 0h6l-3 3.5z" fill="#666"/></svg>
<svg style="left:1893.0px;top:533.0px;" width="16" height="16" viewBox="0 0 16 16"><path d="M1 4q10 0 13 10" fill="none" stroke="#e8604c" stroke-width="2.6"/><path d="M1 4q10 0 13 10" fill="none" stroke="#fff" stroke-width="0.8"/></svg>
<svg style="left:1912.0px;top:540.0px;" width="6" height="4" viewBox="0 0 6 4"><path d="M0 0h6l-3 3.5z" fill="#666"/></svg>
<svg style="left:1893.0px;top:561.0px;" width="16" height="16" viewBox="0 0 16 16"><circle cx="8" cy="8" r="6.5" fill="#fde8e4" stroke="#e8604c" stroke-width="1.6"/><circle cx="8" cy="8" r="1.2" fill="#e8604c"/></svg>
<svg style="left:1912.0px;top:568.0px;" width="6" height="4" viewBox="0 0 6 4"><path d="M0 0h6l-3 3.5z" fill="#666"/></svg>
<svg style="left:1893.0px;top:589.0px;" width="16" height="16" viewBox="0 0 16 16"><path d="M3 12L11 4" stroke="#1a5a9f" stroke-width="3"/><circle cx="3.5" cy="12" r="2.6" fill="#fff" stroke="#1a5a9f" stroke-width="1.6"/><circle cx="11.5" cy="4" r="3.4" fill="#fff" stroke="#1a5a9f" stroke-width="1.8"/></svg>
<svg style="left:1912.0px;top:596.0px;" width="6" height="4" viewBox="0 0 6 4"><path d="M0 0h6l-3 3.5z" fill="#666"/></svg>
<svg style="left:1893.0px;top:615.5px;" width="16" height="16" viewBox="0 0 16 16"><path d="M1 14h14M2 14L14 4" stroke="#e8604c" stroke-width="1.6"/><path d="M1 15h14" stroke="#1a5a9f" stroke-width="1.6"/><text x="8" y="12" font-family="Liberation Sans,sans-serif" font-size="5" fill="#e8604c">°</text></svg>
<svg style="left:1893.0px;top:638.0px;" width="16" height="16" viewBox="0 0 16 16"><path d="M1 14h14L8 3z" fill="none" stroke="#e8604c" stroke-width="1.6"/><path d="M1 15h14" stroke="#1a5a9f" stroke-width="1.8"/><text x="8" y="8" font-family="Liberation Sans,sans-serif" font-size="6" font-weight="bold" fill="#1a5a9f">%</text></svg>
<svg style="left:1893.0px;top:660.0px;" width="16" height="16" viewBox="0 0 16 16"><path d="M2 1v14h12" fill="none" stroke="#e8604c" stroke-width="2"/><text x="5" y="8" font-family="Liberation Sans,sans-serif" font-size="6.5" font-weight="bold" fill="#1a5a9f">90°</text></svg>
<svg style="left:1893.0px;top:683.0px;" width="16" height="16" viewBox="0 0 16 16"><path d="M2 2l12 12M14 2L2 14" stroke="#2a78bd" stroke-width="1.8"/><circle cx="8" cy="8" r="2.2" fill="#e8604c"/><path d="M8 8v7" stroke="#e8604c" stroke-width="1.4"/></svg>
<svg style="left:1912.0px;top:690.0px;" width="6" height="4" viewBox="0 0 6 4"><path d="M0 0h6l-3 3.5z" fill="#666"/></svg>
<svg style="left:1893.0px;top:711.0px;" width="16" height="16" viewBox="0 0 16 16"><path d="M1 3q11 0 13 11" fill="none" stroke="#1a5a9f" stroke-width="1.8"/><rect x="9" y="10" width="4" height="4" fill="none" stroke="#e8604c" stroke-width="1"/><path d="M2 10h3M2 12h3" stroke="#e8604c" stroke-width="1"/></svg>
<svg style="left:1893.0px;top:736.0px;" width="16" height="16" viewBox="0 0 16 16"><path d="M1 5h14" stroke="#e8604c" stroke-width="2"/><rect x="9" y="8" width="5" height="5" fill="none" stroke="#e8604c" stroke-width="1.1"/></svg>
<div style="left:1890.0px;top:211.0px;width:24.0px;height:1.0px;background:#8a8f9c"></div>
<div style="left:1890.0px;top:240.0px;width:24.0px;height:1.0px;background:#8a8f9c"></div>
<div style="left:1890.0px;top:400.0px;width:24.0px;height:1.0px;background:#8a8f9c"></div>
<div style="left:1890.0px;top:428.0px;width:24.0px;height:1.0px;background:#8a8f9c"></div>
<div style="left:1890.0px;top:500.0px;width:24.0px;height:1.0px;background:#8a8f9c"></div>
<div style="left:1890.0px;top:527.0px;width:24.0px;height:1.0px;background:#8a8f9c"></div>
<div style="left:1890.0px;top:555.0px;width:24.0px;height:1.0px;background:#8a8f9c"></div>
<div style="left:1890.0px;top:583.0px;width:24.0px;height:1.0px;background:#8a8f9c"></div>
<div style="left:1890.0px;top:610.0px;width:24.0px;height:1.0px;background:#8a8f9c"></div>
<div style="left:1890.0px;top:705.0px;width:24.0px;height:1.0px;background:#8a8f9c"></div>
<div style="left:1884.0px;top:755.0px;width:35.0px;height:9.0px;background:#c9ccd6"></div><svg style="left:1910.0px;top:756.0px;" width="8" height="7" viewBox="0 0 8 7"><path d="M1.5 0.5v6" stroke="#555" stroke-width="1"/><path d="M3.5 0.5l3.5 3l-3.5 3z" fill="#555"/></svg>
<div style="left:1884.0px;top:768.0px;width:35.0px;height:219.0px;background:linear-gradient(90deg,#f1f2f7,#dfe1ec);border-radius:3px;"></div>
<div style="left:1888.0px;top:772.0px;width:2.0px;height:2.0px;background:#555"></div><div style="left:1891.5px;top:772.0px;width:2.0px;height:2.0px;background:#555"></div><div style="left:1895.0px;top:772.0px;width:2.0px;height:2.0px;background:#555"></div><div style="left:1898.5px;top:772.0px;width:2.0px;height:2.0px;background:#555"></div><div style="left:1902.0px;top:772.0px;width:2.0px;height:2.0px;background:#555"></div><div style="left:1905.5px;top:772.0px;width:2.0px;height:2.0px;background:#555"></div><div style="left:1909.0px;top:772.0px;width:2.0px;height:2.0px;background:#555"></div><div style="left:1912.5px;top:772.0px;width:2.0px;height:2.0px;background:#555"></div>
<svg style="left:1894.0px;top:779.0px;" width="16" height="16" viewBox="0 0 16 16"><path d="M1 9l7-6l7 6" fill="none" stroke="#2a78bd" stroke-width="2"/><path d="M3.5 9v5M12.5 9v5" stroke="#8ab" stroke-width="1.2"/></svg>
<svg style="left:1894.0px;top:803.0px;" width="16" height="16" viewBox="0 0 16 16"><path d="M1 9l7-6l7 6" fill="none" stroke="#2a78bd" stroke-width="2"/><path d="M3.5 9v5M12.5 9v5" stroke="#8ab" stroke-width="1.2"/><circle cx="11" cy="11" r="2.6" fill="#bfe5bf" stroke="#3f9a4c" stroke-width="1.2"/></svg>
<svg style="left:1894.0px;top:823.5px;" width="16" height="16" viewBox="0 0 16 16"><path d="M1 5l6-3l7 4" fill="none" stroke="#2a78bd" stroke-width="1.8"/><path d="M4 8l9 5" stroke="#e8604c" stroke-width="2.2"/><path d="M2 13q6 3 12 0" fill="none" stroke="#2a78bd" stroke-width="1.3"/></svg>
<svg style="left:1894.0px;top:845.0px;" width="16" height="16" viewBox="0 0 16 16"><path d="M1 9l7-6l7 6" fill="none" stroke="#2a78bd" stroke-width="2"/><path d="M3.5 9v5M12.5 9v5" stroke="#8ab" stroke-width="1.2"/></svg>
<svg style="left:1894.0px;top:868.0px;" width="16" height="16" viewBox="0 0 16 16"><path d="M1 5l5-4h9v10l-5 4H1z" fill="#9fd8d0" stroke="#2a78bd" stroke-width="1.3"/><path d="M6 7v6M9 6v7M12 5v7" stroke="#2a78bd" stroke-width="1"/></svg>
<svg style="left:1894.0px;top:891.0px;" width="16" height="16" viewBox="0 0 16 16"><rect x="1" y="0" width="14" height="16" fill="#fff"/><circle cx="2" cy="2" r="0.7" fill="#555"/><circle cx="5" cy="1" r="0.7" fill="#555"/><circle cx="9" cy="2" r="0.7" fill="#555"/><circle cx="13" cy="1" r="0.7" fill="#555"/><circle cx="14" cy="5" r="0.7" fill="#555"/><circle cx="1" cy="6" r="0.7" fill="#555"/><circle cx="2" cy="10" r="0.7" fill="#555"/><circle cx="14" cy="9" r="0.7" fill="#555"/><circle cx="3" cy="14" r="0.7" fill="#555"/><circle cx="7" cy="15" r="0.7" fill="#555"/><circle cx="11" cy="14" r="0.7" fill="#555"/><circle cx="14" cy="13" r="0.7" fill="#555"/><circle cx="6" cy="4" r="0.7" fill="#555"/><circle cx="10" cy="12" r="0.7" fill="#555"/></svg>
<svg style="left:1894.0px;top:912.5px;" width="16" height="16" viewBox="0 0 16 16"><path d="M1 5l8-3l6 5l-3 5l-5-3l-4 2z" fill="#c8482c"/><path d="M3 10l3 3" stroke="#7a2a1a" stroke-width="1.4"/></svg>
<svg style="left:1894.0px;top:934.0px;" width="16" height="16" viewBox="0 0 16 16"><path d="M1 3l6 2l8 6" stroke="#8aa" stroke-width="1.4" fill="none"/><path d="M2 7l5 2l8 5M2 10l4 2" stroke="#1a3a9f" stroke-width="1.6" fill="none"/><rect x="5" y="9" width="9" height="3" fill="#cfe2f5"/></svg>
<svg style="left:1894.0px;top:957.0px;" width="16" height="16" viewBox="0 0 16 16"><path d="M3 5l6-4h5l-6 4z" fill="#dbe9f6" stroke="#2a78bd" stroke-width="1"/><path d="M3 5h5v2H6.7v6H8v2H3v-2h1.3V7H3z" fill="#eaf2fb" stroke="#2a78bd" stroke-width="1"/><path d="M8 6l6-4v7l-6 4z" fill="#9cc3e6" stroke="#2a78bd" stroke-width="0.8"/><path d="M10 15l4-3" stroke="#f4935a" stroke-width="1.8"/></svg>
<div style="left:1884.0px;top:978.0px;width:35.0px;height:9.0px;background:#c9ccd6"></div><svg style="left:1910.0px;top:979.0px;" width="8" height="7" viewBox="0 0 8 7"><path d="M1.5 0.5v6" stroke="#555" stroke-width="1"/><path d="M3.5 0.5l3.5 3l-3.5 3z" fill="#555"/></svg>
<div style="left:1852.0px;top:543.0px;width:24.0px;height:1.0px;background:#a9adba"></div>
<div style="left:1852.0px;top:594.0px;width:24.0px;height:1.0px;background:#a9adba"></div>
<div style="left:1852.0px;top:645.0px;width:24.0px;height:1.0px;background:#a9adba"></div>
<div style="left:1852.0px;top:693.0px;width:24.0px;height:1.0px;background:#a9adba"></div>
<div style="left:1852.0px;top:743.0px;width:24.0px;height:1.0px;background:#a9adba"></div>
<div style="left:1852.0px;top:794.0px;width:24.0px;height:1.0px;background:#a9adba"></div>
<div style="left:26.0px;top:971.0px;width:1797.0px;height:33.0px;background:#f0f0f0;border-top:1px solid #fff"></div>
<div style="left:0.0px;top:1003.0px;width:1920.0px;height:2.0px;background:#e4e5ee"></div>
<div style="left:30.5px;top:979.5px;width:290.0px;height:19.5px;background:#fff;border:1px solid;border-color:#696969 #fff #fff #696969;box-shadow:inset 1px 1px 0 #a0a0a0"></div>
<div style="left:304.0px;top:981.0px;width:16.0px;height:17.0px;background:#f0f0f0;border:1px solid;border-color:#fff #696969 #696969 #fff"></div>
<svg style="left:308.0px;top:987.0px;" width="8" height="5" viewBox="0 0 8 5"><path d="M0 0h8l-4 4.5z" fill="#000"/></svg>
<span class="t" style="top:981.5px;font-size:13px;line-height:17px;color:#000;transform:scaleX(0.7839);transform-origin:left center;left:327.5px;">Entrez la(les) commande(s):</span>
<div style="left:1406.0px;top:977.0px;width:61.0px;height:22.0px;border:1px solid;border-color:#8a8a8a #fff #fff #8a8a8a;"></div>
<span class="t" style="top:980.5px;font-size:13px;line-height:17px;color:#000;transform:scaleX(0.8043);transform-origin:left center;left:1409.0px;">Placement</span>
<div style="left:1475.0px;top:977.0px;width:163.0px;height:22.0px;background:#fff;border:1px solid;border-color:#696969 #fff #fff #696969;box-shadow:inset 1px 1px 0 #a0a0a0"></div>
<span class="t" style="top:977.8px;font-size:12.5px;line-height:16.5px;color:#000;transform:scaleX(0.8350);transform-origin:left center;left:1477.5px;">Calque commun</span>
<div style="left:1620.0px;top:979.0px;width:16.5px;height:19.0px;background:#f0f0f0;border:1px solid;border-color:#fff #696969 #696969 #fff"></div>
<span class="t" style="top:981.5px;font-size:11px;line-height:15px;color:#000;left:1428.2px;width:400px;text-align:center;"><span>...</span></span>
<div style="left:1641.0px;top:977.0px;width:20.0px;height:22.0px;background:#e8e8e8;border:1px solid;border-color:#fff #696969 #696969 #fff"></div>
<svg style="left:1644.0px;top:980.0px;" width="14" height="15" viewBox="0 0 14 15"><path d="M1 10l3-7h9l-3 7z" fill="#fff" stroke="#111" stroke-width="1"/><path d="M1 12h9" stroke="#111" stroke-width="1.6"/><path d="M11 8v5M9 11l2 3l2-3z" fill="#1a3ad0" stroke="#1a3ad0" stroke-width="0.8"/></svg>
<div style="left:1667.0px;top:977.0px;width:77.0px;height:22.0px;border:1px solid;border-color:#8a8a8a #fff #fff #8a8a8a;"></div>
<span class="t" style="top:980.5px;font-size:13px;line-height:17px;color:#000;transform:scaleX(0.7990);transform-origin:left center;left:1670.0px;">TSC 100</span>
<div style="left:1751.5px;top:977.0px;width:61.5px;height:22.0px;border:1px solid;border-color:#8a8a8a #fff #fff #8a8a8a;"></div>
<span class="t" style="top:980.5px;font-size:13px;line-height:17px;color:#000;transform:scaleX(0.8088);transform-origin:left center;left:1754.0px;">1.123 m</span>
<div style="left:3.0px;top:1006.0px;width:703.0px;height:32.0px;background:linear-gradient(#f5f6fa,#e4e6ef 55%,#d6d9e5);border-radius:3px;"></div>
<div style="left:6.0px;top:1011.0px;width:2.0px;height:2.0px;background:#444"></div><div style="left:6.0px;top:1014.4px;width:2.0px;height:2.0px;background:#444"></div><div style="left:6.0px;top:1017.8px;width:2.0px;height:2.0px;background:#444"></div><div style="left:6.0px;top:1021.2px;width:2.0px;height:2.0px;background:#444"></div><div style="left:6.0px;top:1024.6px;width:2.0px;height:2.0px;background:#444"></div><div style="left:6.0px;top:1028.0px;width:2.0px;height:2.0px;background:#444"></div><div style="left:6.0px;top:1031.4px;width:2.0px;height:2.0px;background:#444"></div>
<svg style="left:12.5px;top:1014.0px;" width="16" height="16" viewBox="0 0 16 16"><path d="M0 6H16" stroke="#2a78bd" stroke-width="1.8"/><path d="M0 10H16" stroke="#6aaa3c" stroke-width="1.8"/></svg>
<svg style="left:34.5px;top:1014.0px;" width="16" height="16" viewBox="0 0 16 16"><path d="M1 2H15" stroke="#2a78bd" stroke-width="1.6"/><path d="M8 4v5M5.5 7l2.5 3l2.5-3z" stroke="#e0503c" fill="#e0503c" stroke-width="1"/><path d="M1 12H15" stroke="#6aaa3c" stroke-width="1.6"/><path d="M1 15H15" stroke="#2a78bd" stroke-width="1.6"/></svg>
<svg style="left:57.5px;top:1014.0px;" width="16" height="16" viewBox="0 0 16 16"><path d="M1 3q11 0 12 12" fill="none" stroke="#6aaa3c" stroke-width="1.8"/><path d="M1 6.5q8 0 8.5 8.5" fill="none" stroke="#2a78bd" stroke-width="1.8"/></svg>
<svg style="left:78.0px;top:1020.0px;" width="6" height="4" viewBox="0 0 6 4"><path d="M0 0h6l-3 3.5z" fill="#666"/></svg>
<svg style="left:89.0px;top:1014.0px;" width="16" height="16" viewBox="0 0 16 16"><rect x="3" y="1" width="8" height="14" fill="#1a4a8f"/><path d="M5 4H14" stroke="#e8e080" stroke-width="2"/><path d="M5 8H14" stroke="#9fd080" stroke-width="2"/><path d="M5 12H14" stroke="#e8e080" stroke-width="2"/></svg>
<svg style="left:112.0px;top:1014.0px;" width="16" height="16" viewBox="0 0 16 16"><path d="M2 2h5l7 4v5H4z" fill="#eef" stroke="#8aa" stroke-width="1"/><path d="M3 12H16" stroke="#2a78bd" stroke-width="1.2"/><path d="M3 15H16" stroke="#6aaa3c" stroke-width="1.2"/></svg>
<svg style="left:139.5px;top:1014.0px;" width="16" height="16" viewBox="0 0 16 16"><path d="M1 3h13v12" fill="none" stroke="#2a78bd" stroke-width="2"/><path d="M1 7h9v8" fill="none" stroke="#6aaa3c" stroke-width="1.6"/></svg>
<svg style="left:162.0px;top:1014.0px;" width="16" height="16" viewBox="0 0 16 16"><path d="M1 3q11 0 12 12" fill="none" stroke="#6aaa3c" stroke-width="2.4"/><path d="M1 7q7 0 8 8" fill="none" stroke="#2a78bd" stroke-width="2"/></svg>
<svg style="left:184.0px;top:1014.0px;" width="16" height="16" viewBox="0 0 16 16"><path d="M0 3h16M0 6.5h16" stroke="#2a78bd" stroke-width="2"/><path d="M6 7v9M10 7v9" stroke="#2a78bd" stroke-width="2"/></svg>
<svg style="left:206.0px;top:1014.0px;" width="16" height="16" viewBox="0 0 16 16"><path d="M1 1l7 8l7-8M8 9v7" fill="none" stroke="#6aaa3c" stroke-width="2.2"/><path d="M4 1l4 5l4-5" fill="none" stroke="#2a78bd" stroke-width="1.4"/></svg>
<svg style="left:227.5px;top:1014.0px;" width="16" height="16" viewBox="0 0 16 16"><path d="M0 6h16M0 10h16" stroke="#6aaa3c" stroke-width="1.8"/><path d="M5.5 1v14M10.5 1v14" stroke="#2a78bd" stroke-width="1.8"/></svg>
<svg style="left:249.5px;top:1014.0px;" width="16" height="16" viewBox="0 0 16 16"><path d="M4 3q10 0 11 11" fill="none" stroke="#6aaa3c" stroke-width="1.8"/><path d="M4 7q6 0 7 7" fill="none" stroke="#6aaa3c" stroke-width="1.6"/><path d="M1 15L9 7" stroke="#2a78bd" stroke-width="1.6"/></svg>
<svg style="left:271.5px;top:1014.0px;" width="16" height="16" viewBox="0 0 16 16"><path d="M2 2h3v8H2zM7 4h3v6H7z" fill="#6a9aba"/><path d="M10 8l4 3v4" fill="none" stroke="#6a9aba" stroke-width="1.3"/></svg>
<svg style="left:294.5px;top:1014.0px;" width="16" height="16" viewBox="0 0 16 16"><path d="M1 11q2-3 5 0q3 2 4-4V3h3v8" fill="none" stroke="#6a9aba" stroke-width="1.8"/><path d="M12 11v4" stroke="#aaa" stroke-width="1.2"/></svg>
<svg style="left:315.0px;top:1020.0px;" width="6" height="4" viewBox="0 0 6 4"><path d="M0 0h6l-3 3.5z" fill="#666"/></svg>
<svg style="left:327.0px;top:1014.0px;" width="16" height="16" viewBox="0 0 16 16"><path d="M0 3h16" stroke="#2a5a8a" stroke-width="1.6"/><path d="M2 1v3M14 1v3" stroke="#2a5a8a"/><path d="M4 5v10M7.5 5v10M11 5v10M13.5 5v10" stroke="#4a8aba" stroke-width="1.6"/></svg>
<svg style="left:354.5px;top:1014.0px;" width="16" height="16" viewBox="0 0 16 16"><path d="M0 2.0H15" stroke="#e8c83c" stroke-width="1.5"/><path d="M0 4.6H15" stroke="#6aaa3c" stroke-width="1.5"/><path d="M0 7.2H15" stroke="#2a78bd" stroke-width="1.5"/><path d="M10 8v7" stroke="#cde" stroke-width="2.4"/><path d="M10 8v7" stroke="#8ab" stroke-width="0.8"/></svg>
<svg style="left:376.0px;top:1014.0px;" width="16" height="16" viewBox="0 0 16 16"><path d="M0 2.0H15" stroke="#e8c83c" stroke-width="1.5"/><path d="M0 4.6H15" stroke="#6aaa3c" stroke-width="1.5"/><path d="M0 7.2H15" stroke="#2a78bd" stroke-width="1.5"/><path d="M10 8v7" stroke="#cde" stroke-width="2.4"/><path d="M10 8v7" stroke="#8ab" stroke-width="0.8"/></svg>
<svg style="left:396.5px;top:1020.0px;" width="6" height="4" viewBox="0 0 6 4"><path d="M0 0h6l-3 3.5z" fill="#666"/></svg>
<svg style="left:409.5px;top:1014.0px;" width="16" height="16" viewBox="0 0 16 16"><path d="M0 2.0H15" stroke="#e8c83c" stroke-width="1.5"/><path d="M0 4.6H15" stroke="#6aaa3c" stroke-width="1.5"/><path d="M0 7.2H15" stroke="#2a78bd" stroke-width="1.5"/><path d="M10 8v7" stroke="#cde" stroke-width="2.4"/><path d="M10 8v7" stroke="#8ab" stroke-width="0.8"/></svg>
<svg style="left:431.0px;top:1014.0px;" width="16" height="16" viewBox="0 0 16 16"><path d="M0 1.5H14" stroke="#e0503c" stroke-width="1.5"/><path d="M0 4.1H14" stroke="#e8c83c" stroke-width="1.5"/><path d="M0 6.7H14" stroke="#6aaa3c" stroke-width="1.5"/><path d="M0 9.3H14" stroke="#2a78bd" stroke-width="1.5"/><path d="M3 13a2.5 2.5 0 1 1 4 0M10 13a2.5 2.5 0 1 0 4 0" fill="none" stroke="#2a78bd" stroke-width="1.5"/></svg>
<svg style="left:451.5px;top:1020.0px;" width="6" height="4" viewBox="0 0 6 4"><path d="M0 0h6l-3 3.5z" fill="#666"/></svg>
<svg style="left:465.0px;top:1014.0px;" width="16" height="16" viewBox="0 0 16 16"><path d="M0 2H15" stroke="#6aaa3c" stroke-width="1.6"/><path d="M0 5H15" stroke="#2a78bd" stroke-width="1.6"/><path d="M14 7L5 11l9 4z" fill="none" stroke="#2a78bd" stroke-width="1.3"/></svg>
<svg style="left:485.5px;top:1020.0px;" width="6" height="4" viewBox="0 0 6 4"><path d="M0 0h6l-3 3.5z" fill="#666"/></svg>
<svg style="left:498.0px;top:1014.0px;" width="16" height="16" viewBox="0 0 16 16"><path d="M0 2H15" stroke="#6aaa3c" stroke-width="1.6"/><path d="M0 5H15" stroke="#2a78bd" stroke-width="1.6"/><path d="M3 6v8M0 14h10" stroke="#444" stroke-width="1.4"/><path d="M9 12a2.5 2.5 0 1 1 5 0" fill="none" stroke="#2a78bd" stroke-width="1.8"/></svg>
<svg style="left:518.5px;top:1020.0px;" width="6" height="4" viewBox="0 0 6 4"><path d="M0 0h6l-3 3.5z" fill="#666"/></svg>
<svg style="left:531.0px;top:1014.0px;" width="16" height="16" viewBox="0 0 16 16"><path d="M0 2.0H14" stroke="#e0503c" stroke-width="1.5"/><path d="M0 4.6H14" stroke="#e8c83c" stroke-width="1.5"/><path d="M0 7.2H14" stroke="#2a78bd" stroke-width="1.5"/><path d="M6 13a3 3 0 1 1 6 0" fill="none" stroke="#2a78bd" stroke-width="2"/><path d="M5 13l2 2l2-2" fill="#2a78bd"/></svg>
<svg style="left:551.5px;top:1020.0px;" width="6" height="4" viewBox="0 0 6 4"><path d="M0 0h6l-3 3.5z" fill="#666"/></svg>
<svg style="left:564.0px;top:1014.0px;" width="16" height="16" viewBox="0 0 16 16"><path d="M2 2h5l7 4v5H4z" fill="#eef" stroke="#6a9aca" stroke-width="1"/><path d="M3 12H16" stroke="#2a78bd" stroke-width="1.2"/><path d="M3 15H16" stroke="#6aaa3c" stroke-width="1.2"/></svg>
<svg style="left:586.0px;top:1014.0px;" width="16" height="16" viewBox="0 0 16 16"><path d="M0 6H15" stroke="#e0503c" stroke-width="1.8"/><path d="M0 10H15" stroke="#6aaa3c" stroke-width="1.8"/></svg>
<svg style="left:608.0px;top:1014.0px;" width="16" height="16" viewBox="0 0 16 16"><path d="M0 2H15" stroke="#2a78bd" stroke-width="1.6"/><path d="M0 6H15" stroke="#2a78bd" stroke-width="1.6"/><path d="M0 10H15" stroke="#2a78bd" stroke-width="1.6"/><path d="M0 14H15" stroke="#2a78bd" stroke-width="1.6"/><path d="M6 8h4" stroke="#e0503c" stroke-width="1.4"/></svg>
<svg style="left:630.0px;top:1014.0px;" width="16" height="16" viewBox="0 0 16 16"><path d="M0 1.5H14" stroke="#e0503c" stroke-width="1.5"/><path d="M0 4.1H14" stroke="#e8c83c" stroke-width="1.5"/><path d="M0 6.7H14" stroke="#6aaa3c" stroke-width="1.5"/><path d="M0 9.3H14" stroke="#2a78bd" stroke-width="1.5"/><path d="M3 13a2.5 2.5 0 1 1 4 0M10 13a2.5 2.5 0 1 0 4 0" fill="none" stroke="#2a78bd" stroke-width="1.5"/></svg>
<svg style="left:652.0px;top:1014.0px;" width="16" height="16" viewBox="0 0 16 16"><path d="M1 3h14M1 1v4M15 1v4" stroke="#2a78bd" stroke-width="1.6"/><path d="M2 15V9l3-2l3 2v6M8 15V9l3-2l3 2v6" fill="#cfe2f5" stroke="#4a8aba" stroke-width="1"/><circle cx="13" cy="13" r="2.4" fill="#fff" stroke="#8aa" stroke-width="0.8"/></svg>
<svg style="left:673.0px;top:1014.0px;" width="16" height="16" viewBox="0 0 16 16"><path d="M2 15V8l3-2.5L8 8v7M8 15V6l3-3l3 3v9" fill="#cfe2f5" stroke="#4a8aba" stroke-width="1"/><path d="M10 12h5M12.5 9.5v5" stroke="#e02030" stroke-width="1.6"/></svg>
<div style="left:133.0px;top:1010.0px;width:1.0px;height:24.0px;background:#8a8f9c"></div>
<div style="left:348.0px;top:1010.0px;width:1.0px;height:24.0px;background:#8a8f9c"></div>
<div style="left:694.0px;top:1006.0px;width:12.0px;height:32.0px;background:#c9ccd6;border-radius:0 3px 3px 0"></div>
<svg style="left:696.0px;top:1026.0px;" width="7" height="8" viewBox="0 0 7 8"><path d="M0.5 0.5h6" stroke="#444" stroke-width="1"/><path d="M0.5 3h6l-3 3.5z" fill="#444"/></svg>
<div style="left:708.0px;top:1006.0px;width:826.0px;height:32.0px;background:linear-gradient(#f5f6fa,#e4e6ef 55%,#d6d9e5);border-radius:3px;"></div>
<div style="left:712.0px;top:1011.0px;width:2.0px;height:2.0px;background:#444"></div><div style="left:712.0px;top:1014.4px;width:2.0px;height:2.0px;background:#444"></div><div style="left:712.0px;top:1017.8px;width:2.0px;height:2.0px;background:#444"></div><div style="left:712.0px;top:1021.2px;width:2.0px;height:2.0px;background:#444"></div><div style="left:712.0px;top:1024.6px;width:2.0px;height:2.0px;background:#444"></div><div style="left:712.0px;top:1028.0px;width:2.0px;height:2.0px;background:#444"></div><div style="left:712.0px;top:1031.4px;width:2.0px;height:2.0px;background:#444"></div>
<div style="left:717.0px;top:1012.0px;width:17.0px;height:20.0px;background:#d4d4d4;border:1px solid;border-color:#7a7a7a #fff #fff #7a7a7a"></div>
<svg style="left:720.0px;top:1016.0px;" width="11" height="11" viewBox="0 0 11 11"><path d="M5.5 1.2L10 10H1z" fill="none" stroke="#000" stroke-width="1.1"/></svg>
<span class="t" style="top:1012.5px;font-size:15px;line-height:19px;color:#111;left:542.0px;width:400px;text-align:center;"><span>X</span></span>
<svg style="left:749.0px;top:1014.0px;" width="14" height="15" viewBox="0 0 14 15"><rect x="0" y="0" width="14" height="15" fill="#dfe1ea"/><path d="M7 7V4.5a2.5 2.5 0 0 1 5 0" fill="none" stroke="#1a2a9a" stroke-width="1.4"/><rect x="2.5" y="7" width="8" height="6.5" fill="#1a2aaa"/><path d="M3.5 9h6M3.5 11h6" stroke="#8a9aee" stroke-width="0.8"/></svg>
<div style="left:766.0px;top:1011.0px;width:55.0px;height:22.0px;background:#fff;border:1px solid;border-color:#7a7a7a #fff #fff #7a7a7a;box-shadow:inset 1px 1px 0 #b8b8b8;"></div><span class="t" style="top:1013.0px;font-size:15px;line-height:19px;color:#111;letter-spacing:-0.678px;left:769.0px;-webkit-text-stroke:0.5px #111;">23.083</span>
<span class="t" style="top:1012.5px;font-size:15px;line-height:19px;color:#111;left:628.0px;width:400px;text-align:center;"><span>Y</span></span>
<svg style="left:835.5px;top:1014.0px;" width="14" height="15" viewBox="0 0 14 15"><rect x="0" y="0" width="14" height="15" fill="#dfe1ea"/><path d="M7 7V4.5a2.5 2.5 0 0 1 5 0" fill="none" stroke="#1a2a9a" stroke-width="1.4"/><rect x="2.5" y="7" width="8" height="6.5" fill="#1a2aaa"/><path d="M3.5 9h6M3.5 11h6" stroke="#8a9aee" stroke-width="0.8"/></svg>
<div style="left:852.0px;top:1011.0px;width:56.0px;height:22.0px;background:#fff;border:1px solid;border-color:#7a7a7a #fff #fff #7a7a7a;box-shadow:inset 1px 1px 0 #b8b8b8;"></div><span class="t" style="top:1013.0px;font-size:15px;line-height:19px;color:#111;letter-spacing:-0.678px;left:855.0px;-webkit-text-stroke:0.5px #111;">22.378</span>
<span class="t" style="top:1012.5px;font-size:15px;line-height:19px;color:#111;left:716.0px;width:400px;text-align:center;"><span>Z</span></span>
<svg style="left:923.5px;top:1014.0px;" width="14" height="15" viewBox="0 0 14 15"><rect x="0" y="0" width="14" height="15" fill="#dfe1ea"/><path d="M7 7V4.5a2.5 2.5 0 0 1 5 0" fill="none" stroke="#1a2a9a" stroke-width="1.4"/><rect x="2.5" y="7" width="8" height="6.5" fill="#1a2aaa"/><path d="M3.5 9h6M3.5 11h6" stroke="#8a9aee" stroke-width="0.8"/></svg>
<div style="left:941.0px;top:1011.0px;width:55.0px;height:22.0px;background:#fff;border:1px solid;border-color:#7a7a7a #fff #fff #7a7a7a;box-shadow:inset 1px 1px 0 #b8b8b8;"></div><span class="t" style="top:1013.0px;font-size:15px;line-height:19px;color:#111;letter-spacing:-0.762px;left:944.0px;-webkit-text-stroke:0.5px #111;">0.000</span>
<span class="t" style="top:1012.5px;font-size:15px;line-height:19px;color:#111;left:801.0px;width:400px;text-align:center;"><span>L</span></span>
<div style="left:1008.0px;top:1011.0px;width:49.0px;height:22.0px;background:#fff;border:1px solid;border-color:#7a7a7a #fff #fff #7a7a7a;box-shadow:inset 1px 1px 0 #b8b8b8;"></div><span class="t" style="top:1013.0px;font-size:15px;line-height:19px;color:#111;letter-spacing:-0.578px;left:1011.0px;-webkit-text-stroke:0.5px #111;">36.766</span>
<span class="t" style="top:1012.5px;font-size:15px;line-height:19px;color:#111;left:864.0px;width:400px;text-align:center;"><span>A</span></span>
<div style="left:1071.0px;top:1011.0px;width:49.0px;height:22.0px;background:#fff;border:1px solid;border-color:#7a7a7a #fff #fff #7a7a7a;box-shadow:inset 1px 1px 0 #b8b8b8;"></div><span class="t" style="top:1013.0px;font-size:15px;line-height:19px;color:#111;letter-spacing:-0.578px;left:1074.0px;-webkit-text-stroke:0.5px #111;">149.81</span>
<div style="left:1130.0px;top:1011.0px;width:95.0px;height:22.0px;background:#fff;border:1px solid;border-color:#7a7a7a #fff #fff #7a7a7a;box-shadow:inset 1px 1px 0 #b8b8b8;"></div><span class="t" style="top:1013.0px;font-size:15px;line-height:19px;color:#111;letter-spacing:-0.527px;left:1134.0px;-webkit-text-stroke:0.5px #111;">1:100.00</span><div style="left:1208.0px;top:1012.0px;width:16.0px;height:20.0px;background:#f0f0f0;border:1px solid;border-color:#fff #7a7a7a #7a7a7a #fff"></div><svg style="left:1212.0px;top:1020.0px;" width="8" height="5" viewBox="0 0 8 5"><path d="M0 0h8l-4 4.5z" fill="#000"/></svg>
<div style="left:1233.0px;top:1011.0px;width:137.0px;height:22.0px;background:#fff;border:1px solid;border-color:#7a7a7a #fff #fff #7a7a7a;box-shadow:inset 1px 1px 0 #b8b8b8;"></div><span class="t" style="top:1013.0px;font-size:15px;line-height:19px;color:#111;letter-spacing:-0.243px;left:1237.0px;-webkit-text-stroke:0.5px #111;">Navigation</span><div style="left:1353.0px;top:1012.0px;width:16.0px;height:20.0px;background:#f0f0f0;border:1px solid;border-color:#fff #7a7a7a #7a7a7a #fff"></div><svg style="left:1357.0px;top:1020.0px;" width="8" height="5" viewBox="0 0 8 5"><path d="M0 0h8l-4 4.5z" fill="#000"/></svg>
<div style="left:1382.5px;top:1011.0px;width:127.0px;height:22.0px;background:#fff;border:1px solid;border-color:#7a7a7a #fff #fff #7a7a7a;box-shadow:inset 1px 1px 0 #b8b8b8;"></div><span class="t" style="top:1013.0px;font-size:15px;line-height:19px;color:#111;letter-spacing:-0.118px;left:1386.5px;-webkit-text-stroke:0.5px #111;">Bascule filtre ca</span><div style="left:1492.5px;top:1012.0px;width:16.0px;height:20.0px;background:#f0f0f0;border:1px solid;border-color:#fff #7a7a7a #7a7a7a #fff"></div><svg style="left:1496.5px;top:1020.0px;" width="8" height="5" viewBox="0 0 8 5"><path d="M0 0h8l-4 4.5z" fill="#000"/></svg>
<div style="left:1521.0px;top:1006.0px;width:13.0px;height:32.0px;background:#c9ccd6;border-radius:0 3px 3px 0"></div>
<svg style="left:1524.0px;top:1026.0px;" width="7" height="8" viewBox="0 0 7 8"><path d="M0.5 0.5h6" stroke="#444" stroke-width="1"/><path d="M0.5 3h6l-3 3.5z" fill="#444"/></svg>
<div style="left:1537.0px;top:1006.0px;width:356.0px;height:32.0px;background:linear-gradient(#f5f6fa,#e4e6ef 55%,#d6d9e5);border-radius:3px;"></div>
<div style="left:1541.0px;top:1011.0px;width:2.0px;height:2.0px;background:#444"></div><div style="left:1541.0px;top:1014.4px;width:2.0px;height:2.0px;background:#444"></div><div style="left:1541.0px;top:1017.8px;width:2.0px;height:2.0px;background:#444"></div><div style="left:1541.0px;top:1021.2px;width:2.0px;height:2.0px;background:#444"></div><div style="left:1541.0px;top:1024.6px;width:2.0px;height:2.0px;background:#444"></div><div style="left:1541.0px;top:1028.0px;width:2.0px;height:2.0px;background:#444"></div><div style="left:1541.0px;top:1031.4px;width:2.0px;height:2.0px;background:#444"></div>
<svg style="left:1548.0px;top:1014.0px;" width="16" height="16" viewBox="0 0 16 16"><path d="M1 5l7-3l7 3v8l-7 3l-7-3z" fill="#fff" stroke="#4a8aba" stroke-width="1"/><path d="M1 5l7 3l7-3M8 8v8" fill="none" stroke="#4a8aba" stroke-width="0.9"/><path d="M1 5l7 3v8l-7-3z" fill="#f4a060"/></svg>
<svg style="left:1570.0px;top:1014.0px;" width="16" height="16" viewBox="0 0 16 16"><path d="M1 5l7-3l7 3v8l-7 3l-7-3z" fill="#fff" stroke="#4a8aba" stroke-width="1"/><path d="M1 5l7 3l7-3M8 8v8" fill="none" stroke="#4a8aba" stroke-width="0.9"/><path d="M8 1v8M5 6l3 4l3-4z" fill="#e02020" stroke="#e02020"/><path d="M3 13h10" stroke="#f4a060" stroke-width="2"/></svg>
<svg style="left:1591.7px;top:1014.0px;" width="16" height="16" viewBox="0 0 16 16"><path d="M1 5l7-3l7 3v8l-7 3l-7-3z" fill="#fff" stroke="#4a8aba" stroke-width="1"/><path d="M1 5l7 3l7-3M8 8v8" fill="none" stroke="#4a8aba" stroke-width="0.9"/><path d="M3 14l5 2l5-2" stroke="#f4a060" stroke-width="2" fill="none"/></svg>
<svg style="left:1613.5px;top:1014.0px;" width="16" height="16" viewBox="0 0 16 16"><path d="M1 5l7-3l7 3v8l-7 3l-7-3z" fill="#fff" stroke="#4a8aba" stroke-width="1"/><path d="M1 5l7 3l7-3M8 8v8" fill="none" stroke="#4a8aba" stroke-width="0.9"/><path d="M8 8l7-3v8l-7 3z" fill="#f4a060"/><path d="M7 9l4 4M11 9l-4 4" stroke="#e02020" stroke-width="1.4"/></svg>
<svg style="left:1635.5px;top:1014.0px;" width="16" height="16" viewBox="0 0 16 16"><path d="M1 5l7-3l7 3v8l-7 3l-7-3z" fill="#fff" stroke="#4a8aba" stroke-width="1"/><path d="M1 5l7 3l7-3M8 8v8" fill="none" stroke="#4a8aba" stroke-width="0.9"/><path d="M8 8v8" stroke="#f4a060" stroke-width="2"/></svg>
<svg style="left:1658.0px;top:1014.0px;" width="16" height="16" viewBox="0 0 16 16"><path d="M1 5l7-3l7 3v8l-7 3l-7-3z" fill="#fff" stroke="#4a8aba" stroke-width="1"/><path d="M1 5l7 3l7-3M8 8v8" fill="none" stroke="#4a8aba" stroke-width="0.9"/><path d="M1 5l7 3v8l-7-3z" fill="#f4a060"/><path d="M3 8l5 4l-5 3" fill="#e02020"/></svg>
<svg style="left:1685.0px;top:1014.0px;" width="16" height="16" viewBox="0 0 16 16"><rect x="3" y="4" width="10" height="8" fill="#9cc3e6" stroke="#2a78bd" stroke-width="1.2"/><path d="M3 8h10" stroke="#2a78bd"/><path d="M1 3v10M15 3v10" stroke="#2a78bd" stroke-width="1.6"/><path d="M10 14l4-3" stroke="#8ab" stroke-width="1.4"/></svg>
<svg style="left:1708.0px;top:1014.0px;" width="16" height="16" viewBox="0 0 16 16"><rect x="3" y="4" width="10" height="8" fill="#9cc3e6" stroke="#2a78bd" stroke-width="1.2"/><path d="M3 8h10" stroke="#2a78bd"/><path d="M1 2v12M15 2v12" stroke="#e04050" stroke-width="1.6"/></svg>
<svg style="left:1730.0px;top:1014.0px;" width="16" height="16" viewBox="0 0 16 16"><rect x="3" y="4" width="10" height="8" fill="#9cc3e6" stroke="#2a78bd" stroke-width="1.2"/><path d="M3 8h10" stroke="#2a78bd"/><path d="M1 4v8" stroke="#2a78bd" stroke-width="1.6"/><rect x="10" y="10" width="5" height="5" fill="#fff" stroke="#e04050" stroke-width="1"/></svg>
<svg style="left:1752.0px;top:1014.0px;" width="16" height="16" viewBox="0 0 16 16"><rect x="0.7" y="0.7" width="14.6" height="14.6" fill="#eaf2fb" stroke="#2a78bd" stroke-width="1.4"/><path d="M8 1v14M1 8h14" stroke="#2a78bd" stroke-width="1.4"/><path d="M3 4h3M10 11h3" stroke="#6a9aca"/></svg>
<svg style="left:1774.0px;top:1014.0px;" width="16" height="16" viewBox="0 0 16 16"><rect x="0.7" y="0.7" width="14.6" height="14.6" fill="#eaf2fb" stroke="#2a78bd" stroke-width="1.4"/><path d="M8 1v14M1 8h14" stroke="#2a78bd" stroke-width="1.4"/><circle cx="4.5" cy="4.5" r="2.4" fill="#f4e040"/><rect x="9" y="2" width="5" height="5" fill="#f4f0a0"/><rect x="9" y="9" width="5" height="5" fill="#888"/></svg>
<svg style="left:1796.0px;top:1014.0px;" width="16" height="16" viewBox="0 0 16 16"><path d="M2 6l8-3v8l-8 3z" fill="#2a78bd"/><path d="M10 3l5 2v8l-5-2z" fill="#e8eef6" stroke="#9ab" stroke-width="0.6"/><path d="M1 15L14 1" stroke="#e04050" stroke-width="1.4"/></svg>
<svg style="left:1818.0px;top:1014.0px;" width="16" height="16" viewBox="0 0 16 16"><path d="M2 6l8-3v8l-8 3z" fill="#2a78bd"/><path d="M10 3l5 2v8l-5-2z" fill="#e8eef6" stroke="#9ab" stroke-width="0.6"/><path d="M1 15L14 1" stroke="#e04050" stroke-width="1.4"/></svg>
<svg style="left:1839.5px;top:1014.0px;" width="16" height="16" viewBox="0 0 16 16"><path d="M1 9l8-3l6 2l-8 4z" fill="#1a4a7a"/><path d="M7 12l8-4v3l-8 4z" fill="#2a78bd"/></svg>
<svg style="left:1862.0px;top:1014.0px;" width="16" height="16" viewBox="0 0 16 16"><rect x="0.7" y="0.7" width="14.6" height="14.6" fill="#eaf2fb" stroke="#2a78bd" stroke-width="1.4"/><path d="M8 1v14M1 9h14" stroke="#2a78bd" stroke-width="1.4"/><path d="M10 3v4h3" fill="none" stroke="#e04050" stroke-width="1"/><circle cx="11.5" cy="11.5" r="2.6" fill="#2a78bd"/></svg>
<div style="left:1679.0px;top:1010.0px;width:1.0px;height:24.0px;background:#8a8f9c"></div>
<div style="left:1881.0px;top:1006.0px;width:12.0px;height:32.0px;background:#c9ccd6;border-radius:0 3px 3px 0"></div>
<svg style="left:1883.5px;top:1026.0px;" width="7" height="8" viewBox="0 0 7 8"><path d="M0.5 0.5h6" stroke="#444" stroke-width="1"/><path d="M0.5 3h6l-3 3.5z" fill="#444"/></svg>
<div style="left:0.0px;top:1040.0px;width:1920.0px;height:40.0px;background:#1f1f1f"></div>
<svg style="left:16.0px;top:1052.0px;" width="16" height="16" viewBox="0 0 16 16"><path d="M0 2.3L6.6 1.4V7.6H0zM7.5 1.3L16 0V7.6H7.5zM0 8.5H6.6v6.2L0 13.8zM7.5 8.5H16V16l-8.5-1.2z" fill="#fff"/></svg>
<div style="left:48.5px;top:1041.0px;width:287.5px;height:39.0px;background:#f2f2f2"></div>
<svg style="left:59.0px;top:1052.0px;" width="17" height="17" viewBox="0 0 17 17"><circle cx="10.5" cy="6.5" r="5" fill="none" stroke="#222" stroke-width="1.4"/><path d="M7 10.2L1 16.2" stroke="#222" stroke-width="1.6"/></svg>
<span class="t" style="top:1051.0px;font-size:15px;line-height:19px;color:#3c3c3c;letter-spacing:-0.163px;left:88.7px;">Taper ici pour rechercher</span>
<svg style="left:266.0px;top:1050.0px;" width="27" height="26" viewBox="0 0 27 26"><rect x="1" y="2" width="24" height="10" fill="#e6c860" stroke="#b89a30" stroke-width="0.8"/><rect x="0" y="1" width="26" height="3" fill="#f2dc80"/><rect x="9" y="6" width="8" height="2" fill="#a88420"/><rect x="1" y="14" width="24" height="10" fill="#e6c860" stroke="#b89a30" stroke-width="0.8"/><rect x="0" y="13" width="26" height="3" fill="#f2dc80"/><rect x="9" y="18" width="8" height="2" fill="#a88420"/></svg>
<svg style="left:298.0px;top:1044.0px;" width="31" height="32" viewBox="0 0 31 32"><path d="M3 2h9l2 3h-5v3h-3V5H3z" fill="#58b0a0"/><path d="M5 8h5l3 6v14q0 2-2 2H5q-2 0-2-2V15z" fill="#8ed4b8"/><path d="M4 19h8v9H4z" fill="#70c0a0"/><path d="M12 27l8-5l9 4v4H12z" fill="#e8d020"/><path d="M20 22l9 4v-3l-8-4z" fill="#38a838"/></svg>
<div style="left:1514.5px;top:1040.0px;width:103.5px;height:40.0px;background:#3b3b3b"></div>
<svg style="left:349.0px;top:1048.0px;" width="24" height="24" viewBox="0 0 24 24"><rect x="4" y="6.5" width="10" height="11" fill="none" stroke="#fff" stroke-width="1.4"/><path d="M1 8v8M17.5 6v5M17.5 13.5v5" stroke="#fff" stroke-width="1.4"/><rect x="16.5" y="10.8" width="2" height="2" fill="#fff"/><path d="M4 4h10M4 20h10" stroke="#fff" stroke-width="1.2"/></svg><svg style="left:395.5px;top:1048.0px;" width="24" height="24" viewBox="0 0 24 24"><rect x="1" y="4" width="22" height="16" rx="1" fill="#3aa0e0"/><rect x="2.5" y="5.5" width="19" height="13" fill="#8fd0f4"/><circle cx="8" cy="10" r="3.2" fill="#1a78c8"/><path d="M8 10V6.8A3.2 3.2 0 0 1 11.2 10z" fill="#f4c030"/><path d="M14 8h6M14 11h6M14 14h6" stroke="#fff" stroke-width="1.6"/><rect x="4" y="15" width="6" height="2" fill="#f4e080"/></svg><svg style="left:440.0px;top:1049.0px;" width="24" height="22" viewBox="0 0 24 22"><rect width="24" height="22" fill="#4a1ee0"/><text x="12" y="8.5" text-anchor="middle" font-family="Liberation Sans,sans-serif" font-size="6" font-weight="bold" fill="#fff">amazon</text><text x="12" y="17.5" text-anchor="middle" font-family="Liberation Sans,sans-serif" font-size="8.5" fill="#fff">music</text><path d="M5 10q7 2.5 14 0" fill="none" stroke="#fff" stroke-width="0.7"/></svg><svg style="left:484.0px;top:1048.0px;" width="24" height="24" viewBox="0 0 24 24"><circle cx="12" cy="12" r="10.5" fill="#f4b820" stroke="#111" stroke-width="1.6"/><path d="M12 6l6 10H6z" fill="none" stroke="#111" stroke-width="2.4" stroke-linejoin="round"/></svg><svg style="left:525.0px;top:1047.0px;" width="26" height="26" viewBox="0 0 24 24"><path d="M20 3q-5 0-8 3q-7-1-9 4q-2 6 4 9q6 3 12-1q4-3 2-7h-8v3h4q-1 3-5 3q-5 0-5-4q1-4 6-3q4-1 7-7z" fill="#e02828"/></svg><svg style="left:630.5px;top:1048.0px;" width="24" height="24" viewBox="0 0 24 24"><rect x="1" y="1" width="22" height="22" fill="#0a1050" stroke="#8ab4f0" stroke-width="1.6"/><text x="12" y="17" text-anchor="middle" font-family="Liberation Sans,sans-serif" font-size="13" font-weight="bold" fill="#8ab4f0">Ps</text></svg><svg style="left:738.0px;top:1048.0px;" width="24" height="24" viewBox="0 0 24 24"><ellipse cx="12" cy="6.5" rx="3.6" ry="5.6" fill="#f4a020" opacity=".9" transform="rotate(0 12 12)"/><ellipse cx="12" cy="6.5" rx="3.6" ry="5.6" fill="#e8d020" opacity=".9" transform="rotate(45 12 12)"/><ellipse cx="12" cy="6.5" rx="3.6" ry="5.6" fill="#60b840" opacity=".9" transform="rotate(90 12 12)"/><ellipse cx="12" cy="6.5" rx="3.6" ry="5.6" fill="#30a0a0" opacity=".9" transform="rotate(135 12 12)"/><ellipse cx="12" cy="6.5" rx="3.6" ry="5.6" fill="#3060c0" opacity=".9" transform="rotate(180 12 12)"/><ellipse cx="12" cy="6.5" rx="3.6" ry="5.6" fill="#8040b0" opacity=".9" transform="rotate(225 12 12)"/><ellipse cx="12" cy="6.5" rx="3.6" ry="5.6" fill="#d03060" opacity=".9" transform="rotate(270 12 12)"/><ellipse cx="12" cy="6.5" rx="3.6" ry="5.6" fill="#e05020" opacity=".9" transform="rotate(315 12 12)"/></svg><svg style="left:782.0px;top:1048.0px;" width="24" height="24" viewBox="0 0 24 24"><rect x="1" y="1" width="22" height="22" fill="#2070e0"/><path d="M8 19q-3-7 4-13q3 2 2 6q4-1 4 3" fill="none" stroke="#cfe4ff" stroke-width="1.6"/></svg><svg style="left:826.0px;top:1048.0px;" width="24" height="24" viewBox="0 0 24 24"><path d="M2 13q10-10 20 0q-10 8-20 0z" fill="#f4c020"/><circle cx="12" cy="13" r="4" fill="#a03010"/><circle cx="12" cy="13" r="1.8" fill="#fff"/><path d="M5 6l2 3M12 3v4M19 6l-2 3" stroke="#f4c020" stroke-width="1.6"/></svg><svg style="left:869.5px;top:1047.0px;" width="26" height="26" viewBox="0 0 24 24"><path d="M2 22L11 2h5v20h-5v-5H8l-2 5zM9.5 13H11V8z" fill="#fff"/><path d="M17 2h4v8h2v4h-2v8h-4v-8h-4v-4h4z" fill="#d9142e"/></svg><svg style="left:911.0px;top:1048.0px;" width="24" height="24" viewBox="0 0 24 24"><path d="M1 5h8l2 2h12v13H1z" fill="#f4c040"/><path d="M1 9h22v11H1z" fill="#fbe08a"/><rect x="7" y="13" width="10" height="7" fill="#3a98e0"/><rect x="9" y="16" width="6" height="4" fill="#fbe08a"/></svg><svg style="left:1016.4px;top:1048.0px;" width="24" height="24" viewBox="0 0 24 24"><circle cx="12" cy="12" r="11" fill="#e8443a"/><path d="M12 12L2.5 6.5A11 11 0 0 0 8 22.2z" fill="#34a853"/><path d="M12 12l-4 10.2A11 11 0 0 0 22.6 9H12z" fill="#fbc116"/><circle cx="12" cy="12" r="5" fill="#fff"/><circle cx="12" cy="12" r="3.9" fill="#4285f4"/></svg><svg style="left:1120.5px;top:1048.0px;" width="24" height="24" viewBox="0 0 24 24"><circle cx="12" cy="12" r="11" fill="#e8443a"/><path d="M12 12L2.5 6.5A11 11 0 0 0 8 22.2z" fill="#34a853"/><path d="M12 12l-4 10.2A11 11 0 0 0 22.6 9H12z" fill="#fbc116"/><circle cx="12" cy="12" r="5" fill="#fff"/><circle cx="12" cy="12" r="3.9" fill="#4285f4"/></svg><svg style="left:1227.7px;top:1048.0px;" width="24" height="24" viewBox="0 0 24 24"><rect x="1" y="2" width="22" height="20" rx="2" fill="#111" stroke="#333"/><text x="12" y="10" text-anchor="middle" font-family="Liberation Sans,sans-serif" font-size="5" fill="#ddd">GoPro</text><rect x="4" y="12" width="3.4" height="3" fill="#3af"/><rect x="8.4" y="12" width="3.4" height="3" fill="#3af"/><rect x="12.8" y="12" width="3.4" height="3" fill="#fff"/><rect x="17.2" y="12" width="3.4" height="3" fill="#fff"/></svg><svg style="left:1271.4px;top:1048.0px;" width="24" height="24" viewBox="0 0 24 24"><ellipse cx="14" cy="6" rx="8" ry="3.5" fill="#d8404a"/><path d="M6 6v12q0 3.5 8 3.5t8-3.5V6" fill="#c02838"/><rect x="1" y="6" width="12" height="12" fill="#a4262c"/><text x="7" y="16" text-anchor="middle" font-family="Liberation Sans,sans-serif" font-size="10" font-weight="bold" fill="#fff">A</text></svg><svg style="left:1314.0px;top:1048.0px;" width="24" height="24" viewBox="0 0 24 24"><rect x="4" y="2" width="16" height="21" fill="#e8f0fa" stroke="#5a8ac0" stroke-width="1"/><path d="M6 1v3M9 1v3M12 1v3M15 1v3M18 1v3" stroke="#444" stroke-width="1"/><path d="M7 8h10M7 11h10M7 20h10" stroke="#7aa4d8" stroke-width="1.2"/><rect x="8" y="13" width="8" height="5.5" fill="#f4c030"/></svg><svg style="left:1416.6px;top:1048.0px;" width="24" height="24" viewBox="0 0 24 24"><path d="M3 3h15l4 4v12q0 3-3 3H3z" fill="#d83a28"/><path d="M6 9l2.5 8L11 11l2.5 6L16 9" fill="none" stroke="#fff" stroke-width="2.2"/></svg><svg style="left:1519.7px;top:1047.0px;" width="26" height="26" viewBox="0 0 24 24"><path d="M2 22L11 2h5v20h-5v-5H8l-2 5zM9.5 13H11V8z" fill="#fff"/><path d="M17 2h4v8h2v4h-2v8h-4v-8h-4v-4h4z" fill="#d9142e"/></svg><svg style="left:1623.5px;top:1048.0px;" width="24" height="24" viewBox="0 0 24 24"><rect x="0" y="0" width="24" height="24" fill="#151515"/><path d="M17 5H7L5 18h12l1-6h-6" fill="none" stroke="#5ad020" stroke-width="2.6" stroke-dasharray="3 1.4"/></svg>
<span class="t" style="top:1051.8px;font-size:12.5px;line-height:16.5px;color:#fff;letter-spacing:-0.361px;left:554.0px;">Foxmail</span>
<span class="t" style="top:1051.8px;font-size:12.5px;line-height:16.5px;color:#fff;letter-spacing:-0.199px;left:659.7px;">bonhom...</span>
<span class="t" style="top:1051.8px;font-size:12.5px;line-height:16.5px;color:#fff;letter-spacing:-0.567px;left:940.0px;">Explorate...</span>
<span class="t" style="top:1051.8px;font-size:12.5px;line-height:16.5px;color:#fff;letter-spacing:-0.733px;left:1045.0px;">Vous êtes ...</span>
<span class="t" style="top:1051.8px;font-size:12.5px;line-height:16.5px;color:#fff;letter-spacing:-0.392px;left:1149.0px;">Le Colom...</span>
<span class="t" style="top:1051.8px;font-size:12.5px;line-height:16.5px;color:#fff;letter-spacing:-0.296px;left:1341.6px;">Mots de ...</span>
<span class="t" style="top:1051.8px;font-size:12.5px;line-height:16.5px;color:#fff;letter-spacing:-0.321px;left:1445.0px;">WebAcap...</span>
<span class="t" style="top:1051.8px;font-size:12.5px;line-height:16.5px;color:#fff;letter-spacing:-0.394px;left:1550.0px;">Nouveau ...</span>
<span class="t" style="top:1051.8px;font-size:12.5px;line-height:16.5px;color:#fff;letter-spacing:-0.698px;left:1654.0px;">D:\MES D...</span>
<div style="left:523.0px;top:1078.0px;width:96.0px;height:2.0px;background:#76b9ed"></div>
<div style="left:627.0px;top:1078.0px;width:96.0px;height:2.0px;background:#76b9ed"></div>
<div style="left:909.0px;top:1078.0px;width:96.0px;height:2.0px;background:#76b9ed"></div>
<div style="left:1013.0px;top:1078.0px;width:96.0px;height:2.0px;background:#76b9ed"></div>
<div style="left:1118.5px;top:1078.0px;width:95.0px;height:2.0px;background:#76b9ed"></div>
<div style="left:1311.0px;top:1078.0px;width:95.0px;height:2.0px;background:#76b9ed"></div>
<div style="left:1415.0px;top:1078.0px;width:96.0px;height:2.0px;background:#76b9ed"></div>
<div style="left:1514.5px;top:1078.0px;width:103.5px;height:2.0px;background:#76b9ed"></div>
<div style="left:1623.0px;top:1078.0px;width:95.0px;height:2.0px;background:#76b9ed"></div>
<svg style="left:1729.0px;top:1054.0px;" width="14" height="10" viewBox="0 0 14 10"><path d="M1 8.5L7 2.5L13 8.5" fill="none" stroke="#fff" stroke-width="1.3"/></svg>
<svg style="left:1752.0px;top:1052.0px;" width="17" height="16" viewBox="0 0 17 16"><rect x="3.5" y="1.5" width="12" height="9" fill="none" stroke="#fff" stroke-width="1.2"/><path d="M9.5 10.5v3M5 14.5h9M1 3.5h3v4H1z" fill="none" stroke="#fff" stroke-width="1.2"/></svg>
<svg style="left:1776.0px;top:1052.0px;" width="18" height="16" viewBox="0 0 18 16"><path d="M1 5.5h3l4-3.5v12l-4-3.5H1z" fill="none" stroke="#fff" stroke-width="1.2"/><path d="M10.5 5.5q1.8 2.5 0 5M12.5 3.5q3.4 4.5 0 9M14.6 1.8q4.6 6.2 0 12.4" fill="none" stroke="#fff" stroke-width="1"/></svg>
<span class="t" style="top:1042.2px;font-size:12.5px;line-height:16.5px;color:#fff;letter-spacing:-0.965px;left:1631.0px;width:400px;text-align:center;"><span>11:02</span></span>
<span class="t" style="top:1059.5px;font-size:12.5px;line-height:16.5px;color:#fff;letter-spacing:-0.507px;left:1631.2px;width:400px;text-align:center;"><span>30/12/2024</span></span>
<svg style="left:1878.0px;top:1049.0px;" width="24" height="24" viewBox="0 0 24 24"><path d="M2 1.5h15v11.5H8l-3.5 3.5V13H2z" fill="#fff"/><path d="M5 5h9M5 7.5h9M5 10h6" stroke="#1f1f1f" stroke-width="1"/><circle cx="15.5" cy="15.5" r="6.2" fill="#1f1f1f" stroke="#9a9a9a" stroke-width="1"/><text x="15.5" y="19.5" text-anchor="middle" font-family="Liberation Sans,sans-serif" font-size="10.5" font-weight="bold" fill="#fff">1</text></svg>
<div style="left:1914.0px;top:1040.0px;width:1.0px;height:40.0px;background:#555"></div>
<div style="left:222.0px;top:118.0px;width:1456.0px;height:825.0px;background:#f0f0f0;border:1px solid #6f6f6f;box-shadow:0 4px 17px 0 rgba(0,0,0,.30),0 0 2px rgba(0,0,0,.2)"></div>
<div style="left:223.0px;top:119.0px;width:1454.0px;height:30.0px;background:#fff"></div>
<svg style="left:232.0px;top:126.0px;" width="16" height="15" viewBox="0 0 16 15"><path d="M0 9L5 1.5h5v4H6.5V9z" fill="#8a8a8a"/><path d="M0.5 10.5h4L2 15z" fill="#8a8a8a"/><rect x="6" y="11" width="4" height="3" fill="#8a8a8a"/><path d="M11 0h4.5v15H11v-3.5H7V9h4V7H7V4.5h4z" fill="#d9142e"/></svg>
<span class="t" style="top:125.8px;font-size:12.5px;line-height:16.5px;color:#000;letter-spacing:-0.262px;left:252.0px;">Sélectionner un fichier catalogue</span>
<svg style="left:1656.0px;top:127.0px;" width="12" height="12" viewBox="0 0 12 12"><path d="M1 1l10 10M11 1L1 11" stroke="#111" stroke-width="1.1"/></svg>
<div style="left:234.0px;top:160.0px;width:250.0px;height:769.5px;background:#fff;border:1px solid;border-color:#828790 #fff #fff #828790"></div>
<div style="left:288.0px;top:415.0px;width:177.5px;height:391.5px;background:#ffffce"></div>
<div style="left:347.5px;top:521.5px;width:47.5px;height:17.5px;background:#0078d7"></div>
<svg style="left:0;top:0;clip-path:inset(161px 1454px 167px 235px)" width="1920" height="1080" viewBox="0 0 1920 1080"><path d="M242.5 161.0V913.0" stroke="#808080" stroke-width="1" stroke-dasharray="1 1"/><path d="M261.5 161.0V913.0" stroke="#808080" stroke-width="1" stroke-dasharray="1 1"/><path d="M280.5 161.0V913.0" stroke="#808080" stroke-width="1" stroke-dasharray="1 1"/><path d="M299.5 161.0V913.0" stroke="#808080" stroke-width="1" stroke-dasharray="1 1"/><path d="M318.5 431.0V800.0" stroke="#808080" stroke-width="1" stroke-dasharray="1 1"/><path d="M300.0 171.5H310.0" stroke="#808080" stroke-width="1" stroke-dasharray="1 1"/><use href="#fold" x="310" y="163" width="16" height="14"/><path d="M300.0 189.5H310.0" stroke="#808080" stroke-width="1" stroke-dasharray="1 1"/><use href="#fold" x="310" y="181" width="16" height="14"/><path d="M300.0 207.5H310.0" stroke="#808080" stroke-width="1" stroke-dasharray="1 1"/><use href="#fold" x="310" y="199" width="16" height="14"/><path d="M300.0 225.5H310.0" stroke="#808080" stroke-width="1" stroke-dasharray="1 1"/><use href="#fold" x="310" y="217" width="16" height="14"/><path d="M300.0 243.5H310.0" stroke="#808080" stroke-width="1" stroke-dasharray="1 1"/><use href="#fold" x="310" y="235" width="16" height="14"/><rect x="295.4" y="239.0" width="8.2" height="8.4" fill="#fff" stroke="#8e8e8e" stroke-width="1"/><path d="M297.2 243.2h4.6" stroke="#000" stroke-width="1.3"/><path d="M299.5 240.9v4.6" stroke="#000" stroke-width="1.3"/><path d="M300.0 261.5H310.0" stroke="#808080" stroke-width="1" stroke-dasharray="1 1"/><use href="#fold" x="310" y="253" width="16" height="14"/><path d="M300.0 279.5H310.0" stroke="#808080" stroke-width="1" stroke-dasharray="1 1"/><use href="#fold" x="310" y="271" width="16" height="14"/><path d="M300.0 297.5H310.0" stroke="#808080" stroke-width="1" stroke-dasharray="1 1"/><use href="#fold" x="310" y="289" width="16" height="14"/><rect x="295.4" y="293.0" width="8.2" height="8.4" fill="#fff" stroke="#8e8e8e" stroke-width="1"/><path d="M297.2 297.2h4.6" stroke="#000" stroke-width="1.3"/><path d="M299.5 294.9v4.6" stroke="#000" stroke-width="1.3"/><path d="M300.0 315.5H310.0" stroke="#808080" stroke-width="1" stroke-dasharray="1 1"/><use href="#fold" x="310" y="307" width="16" height="14"/><path d="M300.0 333.5H310.0" stroke="#808080" stroke-width="1" stroke-dasharray="1 1"/><use href="#fold" x="310" y="325" width="16" height="14"/><path d="M300.0 351.5H310.0" stroke="#808080" stroke-width="1" stroke-dasharray="1 1"/><use href="#fold" x="310" y="343" width="16" height="14"/><rect x="295.4" y="347.0" width="8.2" height="8.4" fill="#fff" stroke="#8e8e8e" stroke-width="1"/><path d="M297.2 351.2h4.6" stroke="#000" stroke-width="1.3"/><path d="M299.5 348.9v4.6" stroke="#000" stroke-width="1.3"/><path d="M300.0 369.5H310.0" stroke="#808080" stroke-width="1" stroke-dasharray="1 1"/><use href="#fold" x="310" y="361" width="16" height="14"/><rect x="295.4" y="365.0" width="8.2" height="8.4" fill="#fff" stroke="#8e8e8e" stroke-width="1"/><path d="M297.2 369.2h4.6" stroke="#000" stroke-width="1.3"/><path d="M299.5 366.9v4.6" stroke="#000" stroke-width="1.3"/><path d="M300.0 387.5H310.0" stroke="#808080" stroke-width="1" stroke-dasharray="1 1"/><use href="#fold" x="310" y="379" width="16" height="14"/><rect x="295.4" y="383.0" width="8.2" height="8.4" fill="#fff" stroke="#8e8e8e" stroke-width="1"/><path d="M297.2 387.2h4.6" stroke="#000" stroke-width="1.3"/><path d="M299.5 384.9v4.6" stroke="#000" stroke-width="1.3"/><path d="M300.0 405.5H310.0" stroke="#808080" stroke-width="1" stroke-dasharray="1 1"/><use href="#fold" x="310" y="397" width="16" height="14"/><rect x="295.4" y="401.0" width="8.2" height="8.4" fill="#fff" stroke="#8e8e8e" stroke-width="1"/><path d="M297.2 405.2h4.6" stroke="#000" stroke-width="1.3"/><path d="M299.5 402.9v4.6" stroke="#000" stroke-width="1.3"/><path d="M300.0 423.5H310.0" stroke="#808080" stroke-width="1" stroke-dasharray="1 1"/><use href="#fold" x="310" y="415" width="16" height="14"/><rect x="295.4" y="419.0" width="8.2" height="8.4" fill="#fff" stroke="#8e8e8e" stroke-width="1"/><path d="M297.2 423.2h4.6" stroke="#000" stroke-width="1.3"/><path d="M319.0 441.5H329.0" stroke="#808080" stroke-width="1" stroke-dasharray="1 1"/><use href="#fold" x="329" y="433" width="16" height="14"/><path d="M319.0 459.5H329.0" stroke="#808080" stroke-width="1" stroke-dasharray="1 1"/><use href="#fold" x="329" y="451" width="16" height="14"/><path d="M319.0 477.5H329.0" stroke="#808080" stroke-width="1" stroke-dasharray="1 1"/><use href="#fold" x="329" y="469" width="16" height="14"/><path d="M319.0 495.5H329.0" stroke="#808080" stroke-width="1" stroke-dasharray="1 1"/><use href="#fold" x="329" y="487" width="16" height="14"/><path d="M319.0 513.5H329.0" stroke="#808080" stroke-width="1" stroke-dasharray="1 1"/><use href="#fold" x="329" y="505" width="16" height="14"/><path d="M319.0 531.5H329.0" stroke="#808080" stroke-width="1" stroke-dasharray="1 1"/><use href="#fold" x="329" y="523" width="16" height="14"/><path d="M319.0 549.5H329.0" stroke="#808080" stroke-width="1" stroke-dasharray="1 1"/><use href="#fold" x="329" y="541" width="16" height="14"/><path d="M319.0 567.5H329.0" stroke="#808080" stroke-width="1" stroke-dasharray="1 1"/><use href="#fold" x="329" y="559" width="16" height="14"/><path d="M319.0 585.5H329.0" stroke="#808080" stroke-width="1" stroke-dasharray="1 1"/><use href="#fold" x="329" y="577" width="16" height="14"/><path d="M319.0 603.5H329.0" stroke="#808080" stroke-width="1" stroke-dasharray="1 1"/><use href="#fold" x="329" y="595" width="16" height="14"/><path d="M319.0 621.5H329.0" stroke="#808080" stroke-width="1" stroke-dasharray="1 1"/><use href="#fold" x="329" y="613" width="16" height="14"/><path d="M319.0 639.5H329.0" stroke="#808080" stroke-width="1" stroke-dasharray="1 1"/><use href="#fold" x="329" y="631" width="16" height="14"/><path d="M319.0 657.5H329.0" stroke="#808080" stroke-width="1" stroke-dasharray="1 1"/><use href="#fold" x="329" y="649" width="16" height="14"/><path d="M319.0 675.5H329.0" stroke="#808080" stroke-width="1" stroke-dasharray="1 1"/><use href="#fold" x="329" y="667" width="16" height="14"/><path d="M319.0 693.5H329.0" stroke="#808080" stroke-width="1" stroke-dasharray="1 1"/><use href="#fold" x="329" y="685" width="16" height="14"/><path d="M319.0 711.5H329.0" stroke="#808080" stroke-width="1" stroke-dasharray="1 1"/><use href="#fold" x="329" y="703" width="16" height="14"/><path d="M319.0 729.5H329.0" stroke="#808080" stroke-width="1" stroke-dasharray="1 1"/><use href="#fold" x="329" y="721" width="16" height="14"/><path d="M319.0 747.5H329.0" stroke="#808080" stroke-width="1" stroke-dasharray="1 1"/><use href="#fold" x="329" y="739" width="16" height="14"/><path d="M319.0 765.5H329.0" stroke="#808080" stroke-width="1" stroke-dasharray="1 1"/><use href="#fold" x="329" y="757" width="16" height="14"/><path d="M319.0 783.5H329.0" stroke="#808080" stroke-width="1" stroke-dasharray="1 1"/><use href="#fold" x="329" y="775" width="16" height="14"/><path d="M319.0 801.5H329.0" stroke="#808080" stroke-width="1" stroke-dasharray="1 1"/><use href="#fold" x="329" y="793" width="16" height="14"/><path d="M300.0 819.5H310.0" stroke="#808080" stroke-width="1" stroke-dasharray="1 1"/><use href="#fold" x="310" y="811" width="16" height="14"/><rect x="295.4" y="815.0" width="8.2" height="8.4" fill="#fff" stroke="#8e8e8e" stroke-width="1"/><path d="M297.2 819.2h4.6" stroke="#000" stroke-width="1.3"/><path d="M299.5 816.9v4.6" stroke="#000" stroke-width="1.3"/><path d="M300.0 837.5H310.0" stroke="#808080" stroke-width="1" stroke-dasharray="1 1"/><use href="#fold" x="310" y="829" width="16" height="14"/><path d="M300.0 855.5H310.0" stroke="#808080" stroke-width="1" stroke-dasharray="1 1"/><use href="#fold" x="310" y="847" width="16" height="14"/><rect x="295.4" y="851.0" width="8.2" height="8.4" fill="#fff" stroke="#8e8e8e" stroke-width="1"/><path d="M297.2 855.2h4.6" stroke="#000" stroke-width="1.3"/><path d="M299.5 852.9v4.6" stroke="#000" stroke-width="1.3"/><path d="M300.0 873.5H310.0" stroke="#808080" stroke-width="1" stroke-dasharray="1 1"/><use href="#fold" x="310" y="865" width="16" height="14"/><path d="M300.0 891.5H310.0" stroke="#808080" stroke-width="1" stroke-dasharray="1 1"/><use href="#fold" x="310" y="883" width="16" height="14"/><path d="M300.0 909.5H310.0" stroke="#808080" stroke-width="1" stroke-dasharray="1 1"/><use href="#fold" x="310" y="901" width="16" height="14"/></svg>
<div style="left:235.0px;top:161.0px;width:231.0px;height:752.0px;overflow:hidden"><span class="t" style="top:0.5px;font-size:12px;line-height:16px;color:#000;letter-spacing:-0.223px;left:96.3px;">Dalles de Plafond</span><span class="t" style="top:18.5px;font-size:12px;line-height:16px;color:#000;letter-spacing:-0.350px;left:96.3px;">Dalles de sol</span><span class="t" style="top:36.5px;font-size:12px;line-height:16px;color:#000;letter-spacing:-0.502px;left:96.3px;">Dalles Facade</span><span class="t" style="top:54.5px;font-size:12px;line-height:16px;color:#000;letter-spacing:-0.568px;left:96.3px;">Enseignes</span><span class="t" style="top:72.5px;font-size:12px;line-height:16px;color:#000;letter-spacing:-0.623px;left:96.3px;">Escaliers</span><span class="t" style="top:90.5px;font-size:12px;line-height:16px;color:#000;letter-spacing:-0.634px;left:96.3px;">Fermes</span><span class="t" style="top:108.5px;font-size:12px;line-height:16px;color:#000;letter-spacing:-0.113px;left:96.3px;">Fumisterie</span><span class="t" style="top:126.5px;font-size:12px;line-height:16px;color:#000;letter-spacing:-0.291px;left:96.3px;">Gardes-corps</span><span class="t" style="top:144.5px;font-size:12px;line-height:16px;color:#000;letter-spacing:-0.184px;left:96.3px;">Gouttières</span><span class="t" style="top:162.5px;font-size:12px;line-height:16px;color:#000;letter-spacing:-0.386px;left:96.3px;">Grilles</span><span class="t" style="top:180.5px;font-size:12px;line-height:16px;color:#000;letter-spacing:-0.111px;left:96.3px;">Luminaires</span><span class="t" style="top:198.5px;font-size:12px;line-height:16px;color:#000;letter-spacing:-0.194px;left:96.3px;">Magasins</span><span class="t" style="top:216.5px;font-size:12px;line-height:16px;color:#000;letter-spacing:-0.270px;left:96.3px;">Marquises</span><span class="t" style="top:234.5px;font-size:12px;line-height:16px;color:#000;letter-spacing:0.033px;left:96.3px;">Mobilier extérieur</span><span class="t" style="top:252.5px;font-size:12px;line-height:16px;color:#000;letter-spacing:0.117px;left:96.3px;">Mobilier interieur</span><span class="t" style="top:270.5px;font-size:12px;line-height:16px;color:#000;letter-spacing:-0.615px;left:115.3px;">Bancs</span><span class="t" style="top:288.5px;font-size:12px;line-height:16px;color:#000;letter-spacing:-0.164px;left:115.3px;">Banques d'accueil</span><span class="t" style="top:306.5px;font-size:12px;line-height:16px;color:#000;letter-spacing:-0.022px;left:115.3px;">Bibliothèques</span><span class="t" style="top:324.5px;font-size:12px;line-height:16px;color:#000;letter-spacing:-0.251px;left:115.3px;">Billards</span><span class="t" style="top:342.5px;font-size:12px;line-height:16px;color:#000;letter-spacing:-0.140px;left:115.3px;">Buffets</span><span class="t" style="top:360.5px;font-size:12px;line-height:16px;color:#fff;letter-spacing:-0.451px;left:115.3px;">Bureaux</span><span class="t" style="top:378.5px;font-size:12px;line-height:16px;color:#000;letter-spacing:-0.574px;left:115.3px;">Canapes</span><span class="t" style="top:396.5px;font-size:12px;line-height:16px;color:#000;letter-spacing:-0.660px;left:115.3px;">Chaises</span><span class="t" style="top:414.5px;font-size:12px;line-height:16px;color:#000;letter-spacing:-0.472px;left:115.3px;">Chevets</span><span class="t" style="top:432.5px;font-size:12px;line-height:16px;color:#000;letter-spacing:0.006px;left:115.3px;">Commodes</span><span class="t" style="top:450.5px;font-size:12px;line-height:16px;color:#000;letter-spacing:-0.282px;left:115.3px;">consoles</span><span class="t" style="top:468.5px;font-size:12px;line-height:16px;color:#000;letter-spacing:-0.238px;left:115.3px;">Cuisine</span><span class="t" style="top:486.5px;font-size:12px;line-height:16px;color:#000;letter-spacing:-0.250px;left:115.3px;">Fauteuils</span><span class="t" style="top:504.5px;font-size:12px;line-height:16px;color:#000;letter-spacing:-0.429px;left:115.3px;">Lits</span><span class="t" style="top:522.5px;font-size:12px;line-height:16px;color:#000;letter-spacing:-0.575px;left:115.3px;">Meubles_TV</span><span class="t" style="top:540.5px;font-size:12px;line-height:16px;color:#000;letter-spacing:0.050px;left:115.3px;">Miroirs</span><span class="t" style="top:558.5px;font-size:12px;line-height:16px;color:#000;letter-spacing:-0.501px;left:115.3px;">Pianos</span><span class="t" style="top:576.5px;font-size:12px;line-height:16px;color:#000;letter-spacing:-0.458px;left:115.3px;">Tables</span><span class="t" style="top:594.5px;font-size:12px;line-height:16px;color:#000;letter-spacing:-0.785px;left:115.3px;">Tables_Basses</span><span class="t" style="top:612.5px;font-size:12px;line-height:16px;color:#000;letter-spacing:-0.416px;left:115.3px;">Tables_Hautes</span><span class="t" style="top:630.5px;font-size:12px;line-height:16px;color:#000;letter-spacing:-0.213px;left:115.3px;">Tabourets</span><span class="t" style="top:648.5px;font-size:12px;line-height:16px;color:#000;letter-spacing:-0.298px;left:96.3px;">Objets</span><span class="t" style="top:666.5px;font-size:12px;line-height:16px;color:#000;letter-spacing:-0.428px;left:96.3px;">Objets_Param</span><span class="t" style="top:684.5px;font-size:12px;line-height:16px;color:#000;letter-spacing:-0.207px;left:96.3px;">Ouvertures</span><span class="t" style="top:702.5px;font-size:12px;line-height:16px;color:#000;letter-spacing:-0.270px;left:96.3px;">Ouvertures_param</span><span class="t" style="top:720.5px;font-size:12px;line-height:16px;color:#000;letter-spacing:-0.230px;left:96.3px;">Pare-soleil</span><span class="t" style="top:738.5px;font-size:12px;line-height:16px;color:#000;letter-spacing:-0.425px;left:96.3px;">Pare-vues</span></div>
<div style="left:467.0px;top:161.0px;width:15.5px;height:752.0px;background:#f0f0f0"></div>
<div style="left:467.0px;top:555.0px;width:15.5px;height:154.5px;background:#cdcdcd"></div>
<svg style="left:470.0px;top:166.0px;" width="9" height="6" viewBox="0 0 9 6"><path d="M0.7 5.3L4.5 1.5L8.3 5.3" fill="none" stroke="#505050" stroke-width="1.6"/></svg>
<svg style="left:470.0px;top:900.0px;" width="9" height="6" viewBox="0 0 9 6"><path d="M0.7 0.7L4.5 4.5L8.3 0.7" fill="none" stroke="#505050" stroke-width="1.6"/></svg>
<div style="left:235.0px;top:913.0px;width:247.5px;height:15.5px;background:#f0f0f0"></div>
<div style="left:280.0px;top:913.0px;width:169.0px;height:15.5px;background:#cdcdcd"></div>
<svg style="left:240.0px;top:916.0px;" width="6" height="9" viewBox="0 0 6 9"><path d="M5.3 0.7L1.5 4.5L5.3 8.3" fill="none" stroke="#505050" stroke-width="1.6"/></svg>
<svg style="left:455.0px;top:916.0px;" width="6" height="9" viewBox="0 0 6 9"><path d="M0.7 0.7L4.5 4.5L0.7 8.3" fill="none" stroke="#505050" stroke-width="1.6"/></svg>
<div style="left:494.0px;top:160.5px;width:86.0px;height:22.5px;background:#e1e1e1;border:1px solid;border-color:#fff #696969 #696969 #fff;box-shadow:inset -1px -1px 0 #a0a0a0"></div>
<span class="t" style="top:163.0px;font-size:12px;line-height:16px;color:#000;letter-spacing:-0.156px;left:336.9px;width:400px;text-align:center;"><span>Catalogue...</span></span>
<div style="left:587.0px;top:160.0px;width:893.0px;height:22.0px;background:#fff;border:1px solid;border-color:#696969 #e3e3e3 #e3e3e3 #696969;box-shadow:inset 1px 1px 0 #a0a0a0"></div>
<span class="t" style="top:162.5px;font-size:12px;line-height:16px;color:#000;letter-spacing:-0.289px;left:592.5px;">D:\MES DOCUMENTS\ARCALIB-EVO\3D-POUR_MAQUETTES\Mobilier interieur\Bureaux\</span>
<div style="left:1463.0px;top:161.5px;width:16.0px;height:19.0px;background:#f0f0f0;border:1px solid;border-color:#fff #696969 #696969 #fff"></div>
<svg style="left:1467.0px;top:169.0px;" width="8" height="5" viewBox="0 0 8 5"><path d="M0 0h8l-4 4.5z" fill="#000"/></svg>
<div style="left:1563.0px;top:160.0px;width:23.0px;height:22.0px;background:#f6f6f6;border:1px solid;border-color:#a0a0a0 #fff #fff #a0a0a0"></div>
<svg style="left:1495.7px;top:162.0px;" width="18" height="18" viewBox="0 0 16 16"><use href="#fold" x="0" y="4" width="12" height="11"/><path d="M8 13V6H5l4.5-5.5L14 6h-3q0 5-3 7z" fill="#35a835" stroke="#1c7a1c" stroke-width="0.8"/></svg>
<svg style="left:1518.3px;top:162.0px;" width="18" height="18" viewBox="0 0 16 16"><use href="#fold" x="0" y="2" width="15" height="13"/><path d="M4 1.5h8l1.5 2v6H4z" fill="#fff" stroke="#6f8fc0" stroke-width="1"/><path d="M6 4h5M6 6.5h5" stroke="#6f8fc0" stroke-width="0.9"/></svg>
<svg style="left:1541.8px;top:162.0px;" width="18" height="18" viewBox="0 0 16 16"><path d="M1 3h6l1 1l1-1h6v11H9l-1 1l-1-1H1z" fill="#e4ecf8" stroke="#4a6aa8" stroke-width="1.1"/><path d="M8 4v10M3 6h3M3 8.5h3M3 11h3M10.5 6h3M10.5 8.5h3M10.5 11h3" stroke="#4a6aa8" stroke-width="0.9"/></svg>
<svg style="left:1565.5px;top:162.0px;" width="18" height="18" viewBox="0 0 16 16"><path d="M1 4h5l1.5 1.5h5V8H4L2 14H1z" fill="#f1d86a" stroke="#b8952a" stroke-width="0.9"/><path d="M4 8h11.5l-2.5 6.5H1.5z" fill="#fbe98e" stroke="#b8952a" stroke-width="0.9"/></svg>
<svg style="left:1587.4px;top:162.0px;" width="18" height="18" viewBox="0 0 16 16"><path d="M1 3h5l1.5 1.5H14V12H1z" fill="#f7e27a" stroke="#b8952a" stroke-width="0.9"/><circle cx="7" cy="8" r="3.4" fill="#e8f0fa" stroke="#8a9ab8" stroke-width="1"/><path d="M9.5 10.5l4 4" stroke="#c88a4a" stroke-width="1.6"/></svg>
<svg style="left:1610.4px;top:162.0px;" width="18" height="18" viewBox="0 0 16 16"><use href="#fold" x="0" y="2" width="15" height="13"/></svg>
<svg style="left:1632.8px;top:162.0px;" width="18" height="18" viewBox="0 0 16 16"><path d="M2.5 2v12M2.5 1L0.5 4h4zM2.5 15l-2-3h4z" stroke="#222" stroke-width="1" fill="#222"/><rect x="7" y="4" width="8" height="8" fill="#e8e8f4" stroke="#8a8fb0" stroke-width="1"/><rect x="9" y="6" width="4" height="4" fill="#b86a9a"/></svg>
<svg style="left:1658.0px;top:169.0px;" width="8" height="5" viewBox="0 0 8 5"><path d="M0 0h8l-4 4.5z" fill="#000"/></svg>
<div style="left:494.0px;top:190.0px;width:1173.0px;height:642.0px;background:#fff;border:1px solid;border-color:#828790 #e3e3e3 #e3e3e3 #828790"></div>
<svg style="left:525.0px;top:194.0px;" width="64" height="64" viewBox="0 0 64 64"><path d="M2.5 19L47 10L62.4 14.7L13 28.5z" fill="#f8edd3"/><path d="M2.5 19L13 28.5V30L2.5 20.5z" fill="#e6dabb"/><path d="M13 28.5L62.4 14.7V16L13 30z" fill="#efe2c2"/><path d="M5.5 22L9 25.5L6.2 42L4.6 41.5zM8 25L11 27L18.2 51.5L16.4 52.5z" fill="#c9c2ac"/><path d="M52.3 18.3L54.5 17.6L58.2 32L56.6 32.6zM47.5 20.5L50 21L46.6 27.8L45 27.2z" fill="#c9c2ac"/></svg>
<div style="left:496.0px;top:261.2px;width:122.0px;height:16.5px;background:#ececec"></div>
<span class="t" style="top:260.7px;font-size:12px;line-height:16px;color:#000;letter-spacing:-0.437px;left:356.8px;width:400px;text-align:center;"><span>BUREAU-080x150-3d.iii</span></span>
<svg style="left:650.0px;top:194.0px;" width="64" height="64" viewBox="0 0 64 64"><path d="M2.5 19L47 10L62.4 14.7L13 28.5z" fill="#f8edd3"/><path d="M2.5 19L13 28.5V30L2.5 20.5z" fill="#e6dabb"/><path d="M13 28.5L62.4 14.7V16L13 30z" fill="#efe2c2"/><path d="M5.5 22L9 25.5L6.2 42L4.6 41.5zM8 25L11 27L18.2 51.5L16.4 52.5z" fill="#c9c2ac"/><path d="M52.3 18.3L54.5 17.6L58.2 32L56.6 32.6zM47.5 20.5L50 21L46.6 27.8L45 27.2z" fill="#c9c2ac"/></svg>
<span class="t" style="top:260.7px;font-size:12px;line-height:16px;color:#000;letter-spacing:-0.437px;left:481.8px;width:400px;text-align:center;"><span>BUREAU-080x180-3d.iii</span></span>
<svg style="left:775.0px;top:194.0px;" width="64" height="64" viewBox="0 0 64 64"><path d="M2.5 19L47 10L62.4 14.7L13 28.5z" fill="#f8edd3"/><path d="M2.5 19L13 28.5V30L2.5 20.5z" fill="#e6dabb"/><path d="M13 28.5L62.4 14.7V16L13 30z" fill="#efe2c2"/><path d="M5.5 22L9 25.5L6.2 42L4.6 41.5zM8 25L11 27L18.2 51.5L16.4 52.5z" fill="#c9c2ac"/><path d="M52.3 18.3L54.5 17.6L58.2 32L56.6 32.6zM47.5 20.5L50 21L46.6 27.8L45 27.2z" fill="#c9c2ac"/></svg>
<span class="t" style="top:260.7px;font-size:12px;line-height:16px;color:#000;letter-spacing:-0.437px;left:606.8px;width:400px;text-align:center;"><span>BUREAU-100x180-3d.iii</span></span>
<svg style="left:900.0px;top:194.0px;" width="64" height="64" viewBox="0 0 64 64"><path d="M2 13L30 9L62 11L60 14L8 18z" fill="#f3e5c6"/><path d="M2 13L8 18V20L2 15z" fill="#b3ab94"/><path d="M8 18L60 14V16L8 20z" fill="#c9c2ac"/><path d="M7 20l3 16l2-14zM10 24l8 28l1.5-1l-6-27z" fill="#c9c2ac"/><path d="M35 17L56 16V36L50 39L35 36z" fill="#e8d8b4"/><path d="M35 17L50 18V39L35 36z" fill="#d9cba8"/></svg>
<span class="t" style="top:260.7px;font-size:12px;line-height:16px;color:#000;letter-spacing:-0.651px;left:731.7px;width:400px;text-align:center;"><span>BUREAU-ANGLE-080...</span></span>
<svg style="left:1025.0px;top:194.0px;" width="64" height="64" viewBox="0 0 64 64"><path d="M2 13L30 9L62 11L60 14L8 18z" fill="#f3e5c6"/><path d="M2 13L8 18V20L2 15z" fill="#b3ab94"/><path d="M8 18L60 14V16L8 20z" fill="#c9c2ac"/><path d="M7 20l3 16l2-14zM10 24l8 28l1.5-1l-6-27z" fill="#c9c2ac"/><path d="M35 17L56 16V36L50 39L35 36z" fill="#e8d8b4"/><path d="M35 17L50 18V39L35 36z" fill="#d9cba8"/></svg>
<span class="t" style="top:260.7px;font-size:12px;line-height:16px;color:#000;letter-spacing:-0.651px;left:856.7px;width:400px;text-align:center;"><span>BUREAU-ANGLE-080...</span></span>
<svg style="left:1150.0px;top:194.0px;" width="64" height="64" viewBox="0 0 64 64"><path d="M2 16L30 12L62 13L58 17L8 20z" fill="#f3e5c6"/><path d="M8 20L58 17V19L8 22z" fill="#c9c2ac"/><path d="M6 22l2 12l2-10zM8 24l6 26l1.5-1l-5-25z" fill="#c9c2ac"/><path d="M38 20L56 19V36L51 38L38 35z" fill="#e8d8b4"/><path d="M38 20L51 21V38L38 35z" fill="#d9cba8"/></svg>
<span class="t" style="top:260.7px;font-size:12px;line-height:16px;color:#000;letter-spacing:-0.120px;left:981.9px;width:400px;text-align:center;"><span>Bureaux-Angle-080x...</span></span>
<svg style="left:1275.0px;top:194.0px;" width="64" height="64" viewBox="0 0 64 64"><path d="M5 18L58 14V24L5 28z" fill="#f0c896"/><path d="M5 18L58 14L60 12L8 15z" fill="#f6d8ac"/><rect x="14" y="20" width="10" height="5" fill="#dfe3ee"/><rect x="26" y="19" width="20" height="5" fill="#6a6a8a"/><rect x="48" y="17" width="9" height="5" fill="#dfe3ee"/><path d="M7 28l2 22M19 27l-3 28M44 25l4 28M56 24l1 22" stroke="#c9c2ac" stroke-width="1.6"/><path d="M12 15q0-10 8-10" fill="none" stroke="#aab" stroke-width="1.4"/><path d="M46 13v-9" stroke="#8a9ab0" stroke-width="2"/><circle cx="28" cy="14" r="2.5" fill="#a9a"/></svg>
<span class="t" style="top:260.7px;font-size:12px;line-height:16px;color:#000;letter-spacing:-0.281px;left:1106.9px;width:400px;text-align:center;"><span>Bureaux01.iii</span></span>
<svg style="left:1400.0px;top:194.0px;" width="64" height="64" viewBox="0 0 64 64"><path d="M17 3L50 2.5V38L17 38.5z" fill="#eeeeec"/><path d="M13 3L19 2V58L13 60z" fill="#d3cab2"/><path d="M49 4L53 3V57L49 59z" fill="#d3cab2"/><path d="M13 3L19 2L53 3L49 4z" fill="#e3dbc6"/><path d="M19 20L49 19V21L19 22z" fill="#dcdcd6"/><path d="M19 37L49 36V59L19 61z" fill="#e8d8b4"/><path d="M34 37V60" stroke="#b3ab94" stroke-width="0.8"/></svg>
<span class="t" style="top:260.7px;font-size:12px;line-height:16px;color:#000;letter-spacing:-0.285px;left:1231.9px;width:400px;text-align:center;"><span>Rangement-076x30x...</span></span>
<svg style="left:1525.0px;top:194.0px;" width="64" height="64" viewBox="0 0 64 64"><path d="M21 2L44 1V58L39 62L21 60z" fill="#d9d0b8"/><path d="M25 5L40 4V22L25 23zM25 26L40 25V40L25 41z" fill="#c4bca6"/><path d="M25 43L40 42V60L25 59z" fill="#e8d8b4"/><path d="M21 2L25 5V59L21 60z" fill="#c9c2ac"/></svg>
<span class="t" style="top:260.7px;font-size:12px;line-height:16px;color:#000;letter-spacing:-0.285px;left:1356.9px;width:400px;text-align:center;"><span>Rangement-120x30x...</span></span>
<svg style="left:525.0px;top:301.0px;" width="64" height="64" viewBox="0 0 64 64"><path d="M21 2L44 1V58L39 62L21 60z" fill="#d9d0b8"/><path d="M25 5L40 4V22L25 23zM25 26L40 25V40L25 41z" fill="#aba38e"/><path d="M25 43L40 42V60L25 59z" fill="#e8d8b4"/><path d="M21 2L25 5V59L21 60z" fill="#c9c2ac"/></svg>
<span class="t" style="top:367.7px;font-size:12px;line-height:16px;color:#000;letter-spacing:-0.285px;left:356.9px;width:400px;text-align:center;"><span>Rangement-120x30x...</span></span>
<svg style="left:650.0px;top:301.0px;" width="64" height="64" viewBox="0 0 64 64"><path d="M21 2L44 1V58L39 62L21 60z" fill="#d9d0b8"/><path d="M25 5L40 4V22L25 23zM25 26L40 25V40L25 41z" fill="#aba38e"/><path d="M25 43L40 42V60L25 59z" fill="#e8d8b4"/><path d="M21 2L25 5V59L21 60z" fill="#c9c2ac"/></svg>
<span class="t" style="top:367.7px;font-size:12px;line-height:16px;color:#000;letter-spacing:-0.285px;left:481.9px;width:400px;text-align:center;"><span>Rangement-120x30x...</span></span>
<svg style="left:775.0px;top:301.0px;" width="64" height="64" viewBox="0 0 64 64"><path d="M3 3L61 4L58 58L9 61z" fill="#d5ccb2"/><path d="M8 6L30 7V24L9 25zM33 7L57 8V22L33 24zM9 28L30 27V40L10 41zM33 27L57 25V39L33 40z" fill="#b2aa94"/><path d="M9 43L57 41L56 57L10 60z" fill="#e8d8b4"/><path d="M32 42V58" stroke="#b3ab94" stroke-width="0.8"/></svg>
<span class="t" style="top:367.7px;font-size:12px;line-height:16px;color:#000;letter-spacing:-0.285px;left:606.9px;width:400px;text-align:center;"><span>Rangement-150x30x...</span></span>
<svg style="left:900.0px;top:301.0px;" width="64" height="64" viewBox="0 0 64 64"><path d="M10 3L52 5L50 58L14 60z" fill="#e6d6b0"/><path d="M10 3L14 5V60L10 57z" fill="#c9c2ac"/><path d="M32 4V59" stroke="#b3ab94" stroke-width="0.9"/></svg>
<span class="t" style="top:367.7px;font-size:12px;line-height:16px;color:#000;letter-spacing:-0.115px;left:731.9px;width:400px;text-align:center;"><span>Rangement-70x35.iii</span></span>
<svg style="left:1025.0px;top:301.0px;" width="64" height="64" viewBox="0 0 64 64"><path d="M-1 16L30 10L62 12.5L27 25z" fill="#f6f6f8" stroke="#d0d0d6" stroke-width="0.6"/><path d="M-1 16L27 25V26.4L-1 17.4z" fill="#cfcfd4"/><path d="M12 22v18M8 40l16 7M46 19.5v10M42 28l14 5" stroke="#222" stroke-width="1.6"/><circle cx="24" cy="47.5" r="1.5" fill="#111"/></svg>
<span class="t" style="top:367.7px;font-size:12px;line-height:16px;color:#000;letter-spacing:-0.285px;left:856.9px;width:400px;text-align:center;"><span>Table-095x200x80.iii</span></span>
<svg style="left:1150.0px;top:301.0px;" width="64" height="64" viewBox="0 0 64 64"><path d="M4 19L38 11L62 14L30 25z" fill="#f5e8cf"/><path d="M4 19L30 25V27L4 21z" fill="#e8d8b4"/><path d="M6 22l2 14M28 27l-10 24M60 16l-4 18" stroke="#c9c2ac" stroke-width="1.8"/></svg>
<span class="t" style="top:367.7px;font-size:12px;line-height:16px;color:#000;letter-spacing:-0.285px;left:981.9px;width:400px;text-align:center;"><span>Table-100x200x80.iii</span></span>
<svg style="left:1275.0px;top:301.0px;" width="64" height="64" viewBox="0 0 64 64"><path d="M3 19L36 11L62 13Q56 20 40 21Q30 22 22 27z" fill="#e4d3b0"/><path d="M3 19L22 27V29L3 21z" fill="#b3ab94"/><path d="M5 22l2 18M21 29l-1 26M60 15l-3 20M43 22l1 8" stroke="#a8a088" stroke-width="2"/></svg>
<span class="t" style="top:367.7px;font-size:12px;line-height:16px;color:#000;letter-spacing:-0.263px;left:1106.9px;width:400px;text-align:center;"><span>Table-160x80x80.iii</span></span>
<span class="t" style="top:853.5px;font-size:12px;line-height:16px;color:#000;letter-spacing:0.109px;left:494.0px;">Nom:</span>
<span class="t" style="top:882.5px;font-size:12px;line-height:16px;color:#000;letter-spacing:-0.033px;left:494.0px;">Description:</span>
<span class="t" style="top:910.7px;font-size:12px;line-height:16px;color:#000;letter-spacing:-0.229px;left:494.0px;">Calque:</span>
<div style="left:608.5px;top:848.5px;width:952.0px;height:21.5px;background:#fff;border:1px solid;border-color:#696969 #e3e3e3 #e3e3e3 #696969;box-shadow:inset 1px 1px 0 #a0a0a0;"></div>
<div style="left:608.5px;top:878.5px;width:952.0px;height:21.5px;background:#fff;border:1px solid;border-color:#696969 #e3e3e3 #e3e3e3 #696969;box-shadow:inset 1px 1px 0 #a0a0a0;"></div>
<div style="left:608.5px;top:908.0px;width:952.0px;height:21.5px;background:#f0f0f0;border:1px solid;border-color:#696969 #e3e3e3 #e3e3e3 #696969;box-shadow:inset 1px 1px 0 #a0a0a0;"></div>
<span class="t" style="top:850.8px;font-size:12px;line-height:16px;color:#000;letter-spacing:-0.422px;left:614.4px;">BUREAU-080x150-3d.iii</span>
<span class="t" style="top:910.7px;font-size:12px;line-height:16px;color:#000;letter-spacing:0.052px;left:614.4px;">Calque commun</span>
<div style="left:1574.0px;top:849.0px;width:92.5px;height:22.0px;background:#e1e1e1;border:1px solid;border-color:#fff #696969 #696969 #fff;box-shadow:inset -1px -1px 0 #a0a0a0;"></div>
<span class="t" style="top:852.0px;font-size:12px;line-height:16px;color:#000;letter-spacing:-0.171px;left:1419.9px;width:400px;text-align:center;"><span>Présentation...</span></span>
<div style="left:1574.0px;top:880.0px;width:92.5px;height:23.0px;background:#e1e1e1;border:1px solid;border-color:#fff #696969 #696969 #fff;box-shadow:inset -1px -1px 0 #a0a0a0;outline:1px solid #000;outline-offset:-1px;border-color:#000"></div>
<div style="left:1575.0px;top:881.0px;width:90.5px;height:21.0px;border:1px solid;border-color:#fff #696969 #696969 #fff"></div>
<span class="t" style="top:883.0px;font-size:12px;line-height:16px;color:#000;letter-spacing:-1.344px;left:1419.8px;width:400px;text-align:center;"><span>OK</span></span>
<div style="left:1574.0px;top:908.5px;width:92.5px;height:22.0px;background:#e1e1e1;border:1px solid;border-color:#fff #696969 #696969 #fff;box-shadow:inset -1px -1px 0 #a0a0a0;"></div>
<span class="t" style="top:911.0px;font-size:12px;line-height:16px;color:#000;letter-spacing:0.104px;left:1420.1px;width:400px;text-align:center;"><span>Annuler</span></span>
<svg style="left:450.0px;top:491.0px;" width="13" height="20" viewBox="0 0 13 20"><path d="M1 1v15.5l3.6-3.4l2.8 6.2l2.3-1l-2.8-6.1h5z" fill="#fff" stroke="#000" stroke-width="1" stroke-linejoin="round"/></svg>
</body></html>
